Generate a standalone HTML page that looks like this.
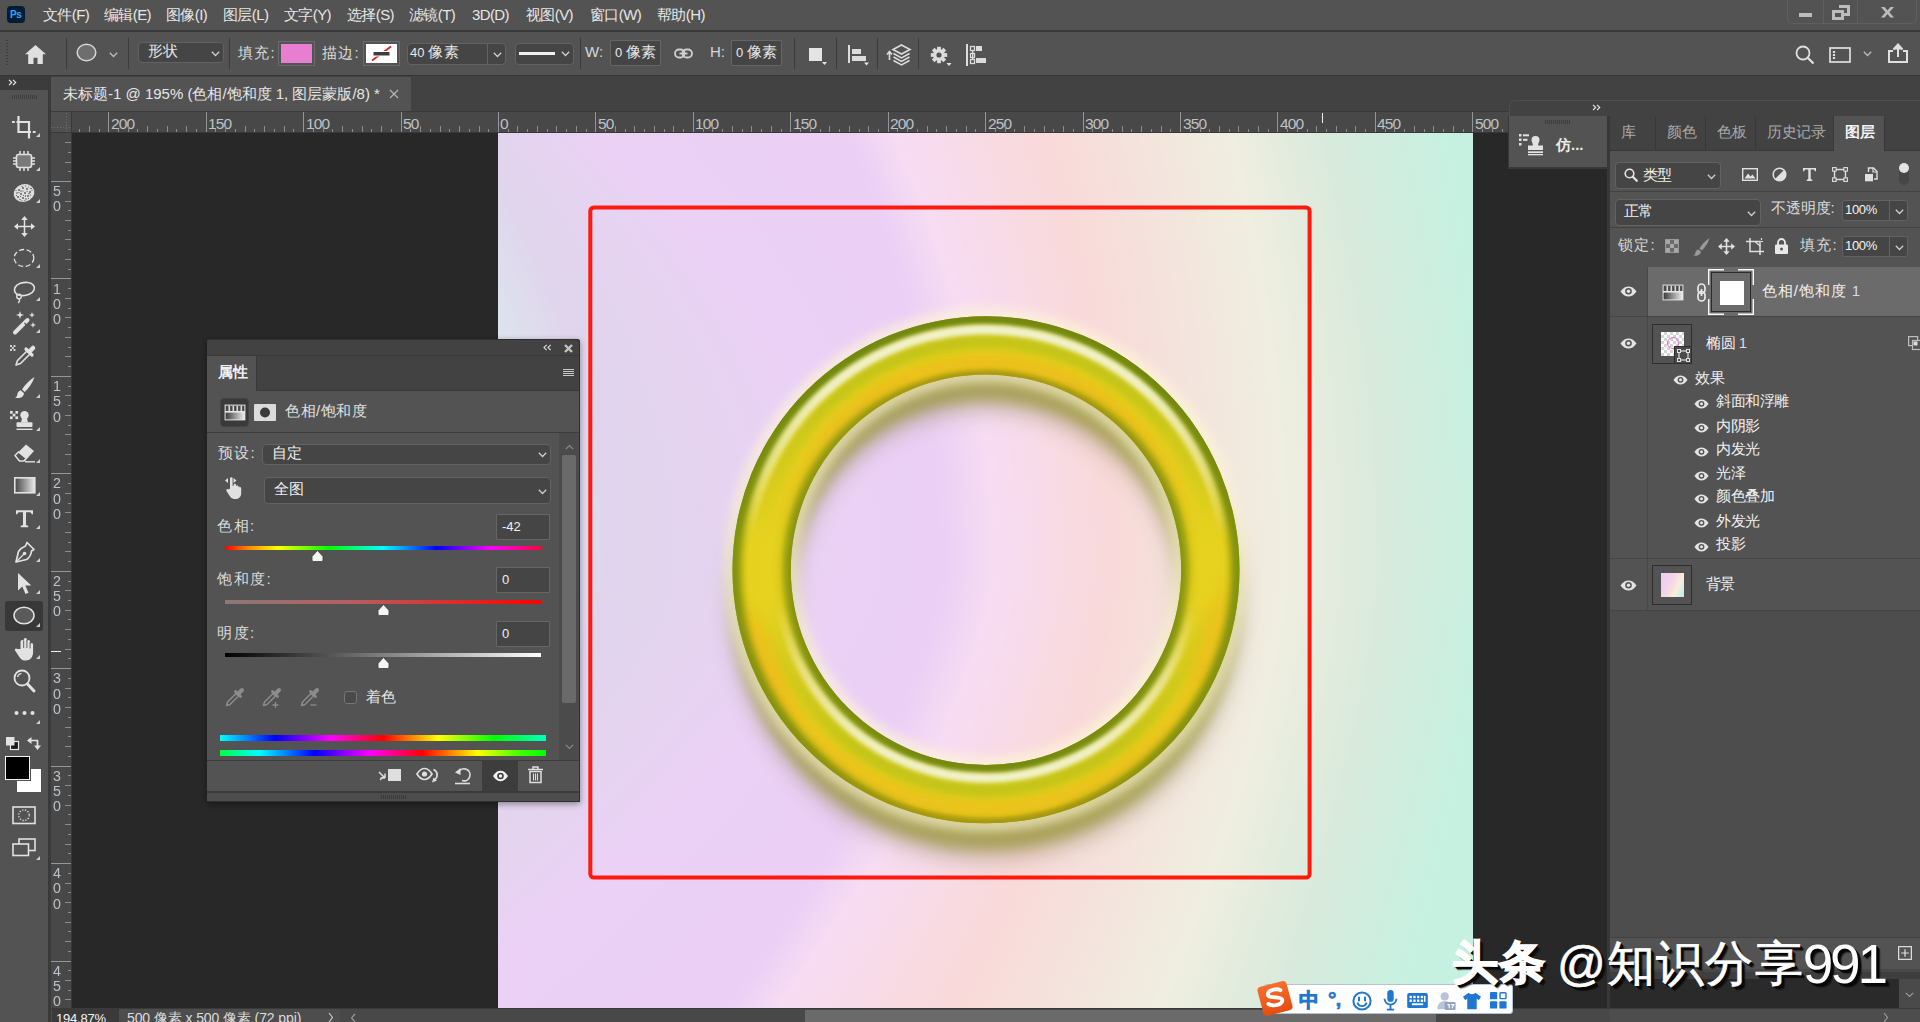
<!DOCTYPE html>
<html lang="zh">
<head>
<meta charset="utf-8">
<title>Photoshop</title>
<style>
*{box-sizing:border-box;margin:0;padding:0}
html,body{width:1920px;height:1022px;overflow:hidden;background:#282828}
body{position:relative;font-family:"Liberation Sans",sans-serif;font-size:14px;color:#dcdcdc;-webkit-font-smoothing:antialiased}
.a{position:absolute}
.tx{position:absolute;white-space:nowrap;line-height:20px;height:20px;color:#dcdcdc}
svg{position:absolute;overflow:visible}
.sep{position:absolute;width:1px;background:#3c3c3c}
.fld{position:absolute;background:#454545;border:1px solid #666;border-radius:3px}
.dd{position:absolute;background:#454545;border:1px solid #626262;border-radius:4px}
/* canvas bg slices */
#cv{position:absolute;left:498px;top:133px;width:975px;height:875px;overflow:hidden;background:#ecd2f4}
#cv i{position:absolute;left:0;width:975px;display:block}
/* rulers */
#hr{position:absolute;left:72px;top:112px;width:1437px;height:20px;background:#484848;overflow:hidden}
#vr{position:absolute;left:51px;top:133px;width:20px;height:875px;background:#484848;overflow:hidden}
#hr .t,#vr .t{position:absolute;background:#8c8c8c;display:block}
#hr .t.m,#vr .t.m{background:#969696}
#hr .t{width:1px}
#vr .t{height:1px}
#hr .n{position:absolute;top:2px;font-size:15.5px;line-height:20px;color:#bcc2c8;letter-spacing:-.9px}
#vr .n{position:absolute;left:1px;width:10px;text-align:center;font-size:15.5px;line-height:15px;color:#bcc2c8;transform:scaleX(.92)}
</style>
</head>
<body>
<!-- ===== big frame blocks ===== -->
<div class="a" id="menubar" style="left:0;top:0;width:1920px;height:30px;background:#535353"></div>
<div class="a" style="left:0;top:30px;width:1920px;height:2px;background:#3a3a3a"></div>
<div class="a" id="optbar" style="left:0;top:32px;width:1920px;height:43px;background:#535353"></div>
<div class="a" style="left:0;top:75px;width:1920px;height:1.500px;background:#363636"></div>
<!-- tab band -->
<div class="a" id="tabband" style="left:0;top:76px;width:1920px;height:36px;background:#424242"></div>
<!-- canvas surround -->
<div class="a" id="surround" style="left:72px;top:133px;width:1538px;height:875px;background:#282828"></div>
<!-- rulers -->
<div class="a" style="left:51px;top:112px;width:1458px;height:21px;background:#383838"></div>
<div class="a" style="left:51px;top:112px;width:21px;height:896px;background:#383838"></div>
<div class="a" style="left:51px;top:112px;width:20px;height:20px;background:#505050"></div>
<div class="a" style="left:66px;top:113px;width:1px;height:19px;background:repeating-linear-gradient(180deg,#6e6e6e 0 1px,transparent 1px 3px)"></div>
<div class="a" style="left:51px;top:127px;width:20px;height:1px;background:repeating-linear-gradient(90deg,#6e6e6e 0 1px,transparent 1px 3px)"></div>
<div id="hr">
<b class="t" style="left:7px;top:17px;height:3px"></b>
<b class="t" style="left:17px;top:14px;height:6px"></b>
<b class="t" style="left:27px;top:17px;height:3px"></b>
<b class="t m" style="left:36px;top:0;height:20px"></b>
<span class="n" style="left:39px">200</span>
<b class="t" style="left:46px;top:17px;height:3px"></b>
<b class="t" style="left:56px;top:14px;height:6px"></b>
<b class="t" style="left:65px;top:17px;height:3px"></b>
<b class="t" style="left:75px;top:14px;height:6px"></b>
<b class="t" style="left:85px;top:17px;height:3px"></b>
<b class="t" style="left:95px;top:14px;height:6px"></b>
<b class="t" style="left:104px;top:17px;height:3px"></b>
<b class="t" style="left:114px;top:14px;height:6px"></b>
<b class="t" style="left:124px;top:17px;height:3px"></b>
<b class="t m" style="left:134px;top:0;height:20px"></b>
<span class="n" style="left:136px">150</span>
<b class="t" style="left:143px;top:17px;height:3px"></b>
<b class="t" style="left:153px;top:14px;height:6px"></b>
<b class="t" style="left:163px;top:17px;height:3px"></b>
<b class="t" style="left:173px;top:14px;height:6px"></b>
<b class="t" style="left:182px;top:17px;height:3px"></b>
<b class="t" style="left:192px;top:14px;height:6px"></b>
<b class="t" style="left:202px;top:17px;height:3px"></b>
<b class="t" style="left:212px;top:14px;height:6px"></b>
<b class="t" style="left:221px;top:17px;height:3px"></b>
<b class="t m" style="left:231px;top:0;height:20px"></b>
<span class="n" style="left:234px">100</span>
<b class="t" style="left:241px;top:17px;height:3px"></b>
<b class="t" style="left:251px;top:14px;height:6px"></b>
<b class="t" style="left:260px;top:17px;height:3px"></b>
<b class="t" style="left:270px;top:14px;height:6px"></b>
<b class="t" style="left:280px;top:17px;height:3px"></b>
<b class="t" style="left:290px;top:14px;height:6px"></b>
<b class="t" style="left:299px;top:17px;height:3px"></b>
<b class="t" style="left:309px;top:14px;height:6px"></b>
<b class="t" style="left:319px;top:17px;height:3px"></b>
<b class="t m" style="left:329px;top:0;height:20px"></b>
<span class="n" style="left:331px">50</span>
<b class="t" style="left:338px;top:17px;height:3px"></b>
<b class="t" style="left:348px;top:14px;height:6px"></b>
<b class="t" style="left:358px;top:17px;height:3px"></b>
<b class="t" style="left:368px;top:14px;height:6px"></b>
<b class="t" style="left:377px;top:17px;height:3px"></b>
<b class="t" style="left:387px;top:14px;height:6px"></b>
<b class="t" style="left:397px;top:17px;height:3px"></b>
<b class="t" style="left:407px;top:14px;height:6px"></b>
<b class="t" style="left:416px;top:17px;height:3px"></b>
<b class="t m" style="left:426px;top:0;height:20px"></b>
<span class="n" style="left:428px">0</span>
<b class="t" style="left:436px;top:17px;height:3px"></b>
<b class="t" style="left:445px;top:14px;height:6px"></b>
<b class="t" style="left:455px;top:17px;height:3px"></b>
<b class="t" style="left:465px;top:14px;height:6px"></b>
<b class="t" style="left:475px;top:17px;height:3px"></b>
<b class="t" style="left:484px;top:14px;height:6px"></b>
<b class="t" style="left:494px;top:17px;height:3px"></b>
<b class="t" style="left:504px;top:14px;height:6px"></b>
<b class="t" style="left:514px;top:17px;height:3px"></b>
<b class="t m" style="left:523px;top:0;height:20px"></b>
<span class="n" style="left:526px">50</span>
<b class="t" style="left:533px;top:17px;height:3px"></b>
<b class="t" style="left:543px;top:14px;height:6px"></b>
<b class="t" style="left:553px;top:17px;height:3px"></b>
<b class="t" style="left:562px;top:14px;height:6px"></b>
<b class="t" style="left:572px;top:17px;height:3px"></b>
<b class="t" style="left:582px;top:14px;height:6px"></b>
<b class="t" style="left:592px;top:17px;height:3px"></b>
<b class="t" style="left:601px;top:14px;height:6px"></b>
<b class="t" style="left:611px;top:17px;height:3px"></b>
<b class="t m" style="left:621px;top:0;height:20px"></b>
<span class="n" style="left:623px">100</span>
<b class="t" style="left:631px;top:17px;height:3px"></b>
<b class="t" style="left:640px;top:14px;height:6px"></b>
<b class="t" style="left:650px;top:17px;height:3px"></b>
<b class="t" style="left:660px;top:14px;height:6px"></b>
<b class="t" style="left:670px;top:17px;height:3px"></b>
<b class="t" style="left:679px;top:14px;height:6px"></b>
<b class="t" style="left:689px;top:17px;height:3px"></b>
<b class="t" style="left:699px;top:14px;height:6px"></b>
<b class="t" style="left:709px;top:17px;height:3px"></b>
<b class="t m" style="left:718px;top:0;height:20px"></b>
<span class="n" style="left:721px">150</span>
<b class="t" style="left:728px;top:17px;height:3px"></b>
<b class="t" style="left:738px;top:14px;height:6px"></b>
<b class="t" style="left:748px;top:17px;height:3px"></b>
<b class="t" style="left:757px;top:14px;height:6px"></b>
<b class="t" style="left:767px;top:17px;height:3px"></b>
<b class="t" style="left:777px;top:14px;height:6px"></b>
<b class="t" style="left:787px;top:17px;height:3px"></b>
<b class="t" style="left:796px;top:14px;height:6px"></b>
<b class="t" style="left:806px;top:17px;height:3px"></b>
<b class="t m" style="left:816px;top:0;height:20px"></b>
<span class="n" style="left:818px">200</span>
<b class="t" style="left:825px;top:17px;height:3px"></b>
<b class="t" style="left:835px;top:14px;height:6px"></b>
<b class="t" style="left:845px;top:17px;height:3px"></b>
<b class="t" style="left:855px;top:14px;height:6px"></b>
<b class="t" style="left:864px;top:17px;height:3px"></b>
<b class="t" style="left:874px;top:14px;height:6px"></b>
<b class="t" style="left:884px;top:17px;height:3px"></b>
<b class="t" style="left:894px;top:14px;height:6px"></b>
<b class="t" style="left:903px;top:17px;height:3px"></b>
<b class="t m" style="left:913px;top:0;height:20px"></b>
<span class="n" style="left:916px">250</span>
<b class="t" style="left:923px;top:17px;height:3px"></b>
<b class="t" style="left:933px;top:14px;height:6px"></b>
<b class="t" style="left:942px;top:17px;height:3px"></b>
<b class="t" style="left:952px;top:14px;height:6px"></b>
<b class="t" style="left:962px;top:17px;height:3px"></b>
<b class="t" style="left:972px;top:14px;height:6px"></b>
<b class="t" style="left:981px;top:17px;height:3px"></b>
<b class="t" style="left:991px;top:14px;height:6px"></b>
<b class="t" style="left:1001px;top:17px;height:3px"></b>
<b class="t m" style="left:1011px;top:0;height:20px"></b>
<span class="n" style="left:1013px">300</span>
<b class="t" style="left:1020px;top:17px;height:3px"></b>
<b class="t" style="left:1030px;top:14px;height:6px"></b>
<b class="t" style="left:1040px;top:17px;height:3px"></b>
<b class="t" style="left:1050px;top:14px;height:6px"></b>
<b class="t" style="left:1059px;top:17px;height:3px"></b>
<b class="t" style="left:1069px;top:14px;height:6px"></b>
<b class="t" style="left:1079px;top:17px;height:3px"></b>
<b class="t" style="left:1089px;top:14px;height:6px"></b>
<b class="t" style="left:1098px;top:17px;height:3px"></b>
<b class="t m" style="left:1108px;top:0;height:20px"></b>
<span class="n" style="left:1111px">350</span>
<b class="t" style="left:1118px;top:17px;height:3px"></b>
<b class="t" style="left:1128px;top:14px;height:6px"></b>
<b class="t" style="left:1137px;top:17px;height:3px"></b>
<b class="t" style="left:1147px;top:14px;height:6px"></b>
<b class="t" style="left:1157px;top:17px;height:3px"></b>
<b class="t" style="left:1166px;top:14px;height:6px"></b>
<b class="t" style="left:1176px;top:17px;height:3px"></b>
<b class="t" style="left:1186px;top:14px;height:6px"></b>
<b class="t" style="left:1196px;top:17px;height:3px"></b>
<b class="t m" style="left:1205px;top:0;height:20px"></b>
<span class="n" style="left:1208px">400</span>
<b class="t" style="left:1215px;top:17px;height:3px"></b>
<b class="t" style="left:1225px;top:14px;height:6px"></b>
<b class="t" style="left:1235px;top:17px;height:3px"></b>
<b class="t" style="left:1244px;top:14px;height:6px"></b>
<b class="t" style="left:1254px;top:17px;height:3px"></b>
<b class="t" style="left:1264px;top:14px;height:6px"></b>
<b class="t" style="left:1274px;top:17px;height:3px"></b>
<b class="t" style="left:1283px;top:14px;height:6px"></b>
<b class="t" style="left:1293px;top:17px;height:3px"></b>
<b class="t m" style="left:1303px;top:0;height:20px"></b>
<span class="n" style="left:1305px">450</span>
<b class="t" style="left:1313px;top:17px;height:3px"></b>
<b class="t" style="left:1322px;top:14px;height:6px"></b>
<b class="t" style="left:1332px;top:17px;height:3px"></b>
<b class="t" style="left:1342px;top:14px;height:6px"></b>
<b class="t" style="left:1352px;top:17px;height:3px"></b>
<b class="t" style="left:1361px;top:14px;height:6px"></b>
<b class="t" style="left:1371px;top:17px;height:3px"></b>
<b class="t" style="left:1381px;top:14px;height:6px"></b>
<b class="t" style="left:1391px;top:17px;height:3px"></b>
<b class="t m" style="left:1400px;top:0;height:20px"></b>
<span class="n" style="left:1403px">500</span>
<b class="t" style="left:1410px;top:17px;height:3px"></b>
<b class="t" style="left:1420px;top:14px;height:6px"></b>
<b class="t" style="left:1430px;top:17px;height:3px"></b>
</div>
<div id="vr">
<b class="t" style="top:9px;left:14px;width:6px"></b>
<b class="t" style="top:19px;left:17px;width:3px"></b>
<b class="t" style="top:29px;left:14px;width:6px"></b>
<b class="t" style="top:38px;left:17px;width:3px"></b>
<b class="t m" style="top:48px;left:0;width:20px"></b>
<span class="n" style="top:50px">5</span>
<span class="n" style="top:65px">0</span>
<b class="t" style="top:58px;left:17px;width:3px"></b>
<b class="t" style="top:68px;left:14px;width:6px"></b>
<b class="t" style="top:77px;left:17px;width:3px"></b>
<b class="t" style="top:87px;left:14px;width:6px"></b>
<b class="t" style="top:97px;left:17px;width:3px"></b>
<b class="t" style="top:106px;left:14px;width:6px"></b>
<b class="t" style="top:116px;left:17px;width:3px"></b>
<b class="t" style="top:126px;left:14px;width:6px"></b>
<b class="t" style="top:136px;left:17px;width:3px"></b>
<b class="t m" style="top:145px;left:0;width:20px"></b>
<span class="n" style="top:148px">1</span>
<span class="n" style="top:163px">0</span>
<span class="n" style="top:178px">0</span>
<b class="t" style="top:155px;left:17px;width:3px"></b>
<b class="t" style="top:165px;left:14px;width:6px"></b>
<b class="t" style="top:175px;left:17px;width:3px"></b>
<b class="t" style="top:184px;left:14px;width:6px"></b>
<b class="t" style="top:194px;left:17px;width:3px"></b>
<b class="t" style="top:204px;left:14px;width:6px"></b>
<b class="t" style="top:214px;left:17px;width:3px"></b>
<b class="t" style="top:223px;left:14px;width:6px"></b>
<b class="t" style="top:233px;left:17px;width:3px"></b>
<b class="t m" style="top:243px;left:0;width:20px"></b>
<span class="n" style="top:245px">1</span>
<span class="n" style="top:260px">5</span>
<span class="n" style="top:276px">0</span>
<b class="t" style="top:253px;left:17px;width:3px"></b>
<b class="t" style="top:262px;left:14px;width:6px"></b>
<b class="t" style="top:272px;left:17px;width:3px"></b>
<b class="t" style="top:282px;left:14px;width:6px"></b>
<b class="t" style="top:292px;left:17px;width:3px"></b>
<b class="t" style="top:301px;left:14px;width:6px"></b>
<b class="t" style="top:311px;left:17px;width:3px"></b>
<b class="t" style="top:321px;left:14px;width:6px"></b>
<b class="t" style="top:331px;left:17px;width:3px"></b>
<b class="t m" style="top:340px;left:0;width:20px"></b>
<span class="n" style="top:342px">2</span>
<span class="n" style="top:358px">0</span>
<span class="n" style="top:373px">0</span>
<b class="t" style="top:350px;left:17px;width:3px"></b>
<b class="t" style="top:360px;left:14px;width:6px"></b>
<b class="t" style="top:370px;left:17px;width:3px"></b>
<b class="t" style="top:379px;left:14px;width:6px"></b>
<b class="t" style="top:389px;left:17px;width:3px"></b>
<b class="t" style="top:399px;left:14px;width:6px"></b>
<b class="t" style="top:409px;left:17px;width:3px"></b>
<b class="t" style="top:418px;left:14px;width:6px"></b>
<b class="t" style="top:428px;left:17px;width:3px"></b>
<b class="t m" style="top:438px;left:0;width:20px"></b>
<span class="n" style="top:440px">2</span>
<span class="n" style="top:455px">5</span>
<span class="n" style="top:470px">0</span>
<b class="t" style="top:448px;left:17px;width:3px"></b>
<b class="t" style="top:457px;left:14px;width:6px"></b>
<b class="t" style="top:467px;left:17px;width:3px"></b>
<b class="t" style="top:477px;left:14px;width:6px"></b>
<b class="t" style="top:486px;left:17px;width:3px"></b>
<b class="t" style="top:496px;left:14px;width:6px"></b>
<b class="t" style="top:506px;left:17px;width:3px"></b>
<b class="t" style="top:516px;left:14px;width:6px"></b>
<b class="t" style="top:525px;left:17px;width:3px"></b>
<b class="t m" style="top:535px;left:0;width:20px"></b>
<span class="n" style="top:537px">3</span>
<span class="n" style="top:553px">0</span>
<span class="n" style="top:568px">0</span>
<b class="t" style="top:545px;left:17px;width:3px"></b>
<b class="t" style="top:555px;left:14px;width:6px"></b>
<b class="t" style="top:564px;left:17px;width:3px"></b>
<b class="t" style="top:574px;left:14px;width:6px"></b>
<b class="t" style="top:584px;left:17px;width:3px"></b>
<b class="t" style="top:594px;left:14px;width:6px"></b>
<b class="t" style="top:603px;left:17px;width:3px"></b>
<b class="t" style="top:613px;left:14px;width:6px"></b>
<b class="t" style="top:623px;left:17px;width:3px"></b>
<b class="t m" style="top:633px;left:0;width:20px"></b>
<span class="n" style="top:635px">3</span>
<span class="n" style="top:650px">5</span>
<span class="n" style="top:665px">0</span>
<b class="t" style="top:642px;left:17px;width:3px"></b>
<b class="t" style="top:652px;left:14px;width:6px"></b>
<b class="t" style="top:662px;left:17px;width:3px"></b>
<b class="t" style="top:672px;left:14px;width:6px"></b>
<b class="t" style="top:681px;left:17px;width:3px"></b>
<b class="t" style="top:691px;left:14px;width:6px"></b>
<b class="t" style="top:701px;left:17px;width:3px"></b>
<b class="t" style="top:711px;left:14px;width:6px"></b>
<b class="t" style="top:720px;left:17px;width:3px"></b>
<b class="t m" style="top:730px;left:0;width:20px"></b>
<span class="n" style="top:732px">4</span>
<span class="n" style="top:747px">0</span>
<span class="n" style="top:763px">0</span>
<b class="t" style="top:740px;left:17px;width:3px"></b>
<b class="t" style="top:750px;left:14px;width:6px"></b>
<b class="t" style="top:759px;left:17px;width:3px"></b>
<b class="t" style="top:769px;left:14px;width:6px"></b>
<b class="t" style="top:779px;left:17px;width:3px"></b>
<b class="t" style="top:789px;left:14px;width:6px"></b>
<b class="t" style="top:798px;left:17px;width:3px"></b>
<b class="t" style="top:808px;left:14px;width:6px"></b>
<b class="t" style="top:818px;left:17px;width:3px"></b>
<b class="t m" style="top:828px;left:0;width:20px"></b>
<span class="n" style="top:830px">4</span>
<span class="n" style="top:845px">5</span>
<span class="n" style="top:860px">0</span>
<b class="t" style="top:837px;left:17px;width:3px"></b>
<b class="t" style="top:847px;left:14px;width:6px"></b>
<b class="t" style="top:857px;left:17px;width:3px"></b>
<b class="t" style="top:866px;left:14px;width:6px"></b>
</div>
<!-- canvas image -->
<div id="cv">
<i style="top:0px;height:3px;background:linear-gradient(90deg,#dbe8ee -117.0px,#e0d5ec -27.0px,#ebd1f5 93.8px,#ebcff5 347.6px,#f7dcf3 395.7px,#f9d9d9 542.5px,#efeee0 734.4px,#d8eadc 827.4px,#c6f1e1 952.3px)"></i>
<i style="top:3px;height:3px;background:linear-gradient(90deg,#dbe8ee -115.1px,#e0d5ec -25.1px,#ebd1f5 97.3px,#ebcff5 348.9px,#f7dcf3 397.1px,#f9d9d9 543.4px,#efeee0 735.1px,#d8eadc 828.2px,#c6f1e1 952.8px)"></i>
<i style="top:6px;height:3px;background:linear-gradient(90deg,#dbe8ee -113.2px,#e0d5ec -23.2px,#ebd1f5 100.8px,#ebcff5 350.2px,#f7dcf3 398.5px,#f9d9d9 544.3px,#efeee0 735.8px,#d8eadc 829.0px,#c6f1e1 953.4px)"></i>
<i style="top:9px;height:3px;background:linear-gradient(90deg,#dbe8ee -111.4px,#e0d5ec -21.4px,#ebd1f5 104.3px,#ebcff5 351.5px,#f7dcf3 399.9px,#f9d9d9 545.2px,#efeee0 736.5px,#d8eadc 829.8px,#c6f1e1 953.9px)"></i>
<i style="top:12px;height:3px;background:linear-gradient(90deg,#dbe8ee -109.5px,#e0d5ec -19.5px,#ebd1f5 107.8px,#ebcff5 352.8px,#f7dcf3 401.3px,#f9d9d9 546.1px,#efeee0 737.2px,#d8eadc 830.6px,#c6f1e1 954.4px)"></i>
<i style="top:15px;height:3px;background:linear-gradient(90deg,#dbe8ee -107.7px,#e0d5ec -17.7px,#ebd1f5 111.2px,#ebcff5 354.0px,#f7dcf3 402.6px,#f9d9d9 547.0px,#efeee0 737.9px,#d8eadc 831.4px,#c6f1e1 955.0px)"></i>
<i style="top:18px;height:3px;background:linear-gradient(90deg,#dbe8ee -105.8px,#e0d5ec -15.8px,#ebd1f5 114.6px,#ebcff5 355.3px,#f7dcf3 404.0px,#f9d9d9 547.9px,#efeee0 738.6px,#d8eadc 832.2px,#c6f1e1 955.5px)"></i>
<i style="top:21px;height:3px;background:linear-gradient(90deg,#dbe8ee -104.0px,#e0d5ec -14.0px,#ebd1f5 118.0px,#ebcff5 356.5px,#f7dcf3 405.3px,#f9d9d9 548.8px,#efeee0 739.3px,#d8eadc 833.0px,#c6f1e1 956.0px)"></i>
<i style="top:24px;height:3px;background:linear-gradient(90deg,#dbe8ee -102.2px,#e0d5ec -12.2px,#ebd1f5 121.4px,#ebcff5 357.7px,#f7dcf3 406.6px,#f9d9d9 549.7px,#efeee0 740.0px,#d8eadc 833.8px,#c6f1e1 956.5px)"></i>
<i style="top:27px;height:3px;background:linear-gradient(90deg,#dbe8ee -100.4px,#e0d5ec -10.4px,#ebd1f5 124.7px,#ebcff5 359.0px,#f7dcf3 408.0px,#f9d9d9 550.6px,#efeee0 740.7px,#d8eadc 834.6px,#c6f1e1 957.0px)"></i>
<i style="top:30px;height:3px;background:linear-gradient(90deg,#dbe8ee -98.6px,#e0d5ec -8.6px,#ebd1f5 128.1px,#ebcff5 360.2px,#f7dcf3 409.3px,#f9d9d9 551.4px,#efeee0 741.3px,#d8eadc 835.3px,#c6f1e1 957.5px)"></i>
<i style="top:33px;height:3px;background:linear-gradient(90deg,#dbe8ee -96.8px,#e0d5ec -6.8px,#ebd1f5 131.3px,#ebcff5 361.4px,#f7dcf3 410.6px,#f9d9d9 552.3px,#efeee0 742.0px,#d8eadc 836.1px,#c6f1e1 958.1px)"></i>
<i style="top:36px;height:3px;background:linear-gradient(90deg,#dbe8ee -95.1px,#e0d5ec -5.1px,#ebd1f5 134.6px,#ebcff5 362.6px,#f7dcf3 411.9px,#f9d9d9 553.1px,#efeee0 742.7px,#d8eadc 836.8px,#c6f1e1 958.6px)"></i>
<i style="top:39px;height:3px;background:linear-gradient(90deg,#dbe8ee -93.3px,#e0d5ec -3.3px,#ebd1f5 137.9px,#ebcff5 363.8px,#f7dcf3 413.2px,#f9d9d9 554.0px,#efeee0 743.3px,#d8eadc 837.6px,#c6f1e1 959.1px)"></i>
<i style="top:42px;height:3px;background:linear-gradient(90deg,#dbe8ee -91.6px,#e0d5ec -1.6px,#ebd1f5 141.1px,#ebcff5 364.9px,#f7dcf3 414.4px,#f9d9d9 554.8px,#efeee0 744.0px,#d8eadc 838.3px,#c6f1e1 959.6px)"></i>
<i style="top:45px;height:3px;background:linear-gradient(90deg,#dbe8ee -89.9px,#e0d5ec 0.1px,#ebd1f5 144.3px,#ebcff5 366.1px,#f7dcf3 415.7px,#f9d9d9 555.7px,#efeee0 744.7px,#d8eadc 839.1px,#c6f1e1 960.0px)"></i>
<i style="top:48px;height:3px;background:linear-gradient(90deg,#dbe8ee -88.1px,#e0d5ec 1.9px,#ebd1f5 147.4px,#ebcff5 367.3px,#f7dcf3 417.0px,#f9d9d9 556.5px,#efeee0 745.3px,#d8eadc 839.8px,#c6f1e1 960.5px)"></i>
<i style="top:51px;height:3px;background:linear-gradient(90deg,#dbe8ee -86.4px,#e0d5ec 3.6px,#ebd1f5 150.6px,#ebcff5 368.4px,#f7dcf3 418.2px,#f9d9d9 557.3px,#efeee0 745.9px,#d8eadc 840.5px,#c6f1e1 961.0px)"></i>
<i style="top:54px;height:3px;background:linear-gradient(90deg,#dbe8ee -84.8px,#e0d5ec 5.2px,#ebd1f5 153.7px,#ebcff5 369.6px,#f7dcf3 419.4px,#f9d9d9 558.1px,#efeee0 746.6px,#d8eadc 841.2px,#c6f1e1 961.5px)"></i>
<i style="top:57px;height:3px;background:linear-gradient(90deg,#dbe8ee -83.1px,#e0d5ec 6.9px,#ebd1f5 156.8px,#ebcff5 370.7px,#f7dcf3 420.7px,#f9d9d9 559.0px,#efeee0 747.2px,#d8eadc 842.0px,#c6f1e1 962.0px)"></i>
<i style="top:60px;height:3px;background:linear-gradient(90deg,#dbe8ee -81.4px,#e0d5ec 8.6px,#ebd1f5 159.9px,#ebcff5 371.8px,#f7dcf3 421.9px,#f9d9d9 559.8px,#efeee0 747.8px,#d8eadc 842.7px,#c6f1e1 962.4px)"></i>
<i style="top:63px;height:3px;background:linear-gradient(90deg,#dbe8ee -79.8px,#e0d5ec 10.2px,#ebd1f5 162.9px,#ebcff5 372.9px,#f7dcf3 423.1px,#f9d9d9 560.6px,#efeee0 748.5px,#d8eadc 843.4px,#c6f1e1 962.9px)"></i>
<i style="top:66px;height:3px;background:linear-gradient(90deg,#dbe8ee -78.2px,#e0d5ec 11.8px,#ebd1f5 166.0px,#ebcff5 374.0px,#f7dcf3 424.3px,#f9d9d9 561.3px,#efeee0 749.1px,#d8eadc 844.1px,#c6f1e1 963.4px)"></i>
<i style="top:69px;height:3px;background:linear-gradient(90deg,#dbe8ee -76.6px,#e0d5ec 13.4px,#ebd1f5 169.0px,#ebcff5 375.1px,#f7dcf3 425.5px,#f9d9d9 562.1px,#efeee0 749.7px,#d8eadc 844.8px,#c6f1e1 963.8px)"></i>
<i style="top:72px;height:3px;background:linear-gradient(90deg,#dbe8ee -75.0px,#e0d5ec 15.0px,#ebd1f5 171.9px,#ebcff5 376.2px,#f7dcf3 426.7px,#f9d9d9 562.9px,#efeee0 750.3px,#d8eadc 845.4px,#c6f1e1 964.3px)"></i>
<i style="top:75px;height:3px;background:linear-gradient(90deg,#dbe8ee -73.4px,#e0d5ec 16.6px,#ebd1f5 174.9px,#ebcff5 377.3px,#f7dcf3 427.8px,#f9d9d9 563.7px,#efeee0 750.9px,#d8eadc 846.1px,#c6f1e1 964.8px)"></i>
<i style="top:78px;height:3px;background:linear-gradient(90deg,#dbe8ee -71.8px,#e0d5ec 18.2px,#ebd1f5 177.8px,#ebcff5 378.4px,#f7dcf3 429.0px,#f9d9d9 564.4px,#efeee0 751.5px,#d8eadc 846.8px,#c6f1e1 965.2px)"></i>
<i style="top:81px;height:3px;background:linear-gradient(90deg,#dbe8ee -70.2px,#e0d5ec 19.8px,#ebd1f5 180.7px,#ebcff5 379.4px,#f7dcf3 430.1px,#f9d9d9 565.2px,#efeee0 752.1px,#d8eadc 847.5px,#c6f1e1 965.6px)"></i>
<i style="top:84px;height:3px;background:linear-gradient(90deg,#dbe8ee -68.7px,#e0d5ec 21.3px,#ebd1f5 183.6px,#ebcff5 380.5px,#f7dcf3 431.3px,#f9d9d9 566.0px,#efeee0 752.7px,#d8eadc 848.1px,#c6f1e1 966.1px)"></i>
<i style="top:87px;height:3px;background:linear-gradient(90deg,#dbe8ee -67.1px,#e0d5ec 22.9px,#ebd1f5 186.5px,#ebcff5 381.5px,#f7dcf3 432.4px,#f9d9d9 566.7px,#efeee0 753.3px,#d8eadc 848.8px,#c6f1e1 966.5px)"></i>
<i style="top:90px;height:3px;background:linear-gradient(90deg,#dbe8ee -65.6px,#e0d5ec 24.4px,#ebd1f5 189.3px,#ebcff5 382.5px,#f7dcf3 433.5px,#f9d9d9 567.4px,#efeee0 753.8px,#d8eadc 849.5px,#c6f1e1 967.0px)"></i>
<i style="top:93px;height:3px;background:linear-gradient(90deg,#dbe8ee -64.1px,#e0d5ec 25.9px,#ebd1f5 192.1px,#ebcff5 383.6px,#f7dcf3 434.7px,#f9d9d9 568.2px,#efeee0 754.4px,#d8eadc 850.1px,#c6f1e1 967.4px)"></i>
<i style="top:96px;height:3px;background:linear-gradient(90deg,#dbe8ee -62.6px,#e0d5ec 27.4px,#ebd1f5 194.9px,#ebcff5 384.6px,#f7dcf3 435.8px,#f9d9d9 568.9px,#efeee0 755.0px,#d8eadc 850.7px,#c6f1e1 967.8px)"></i>
<i style="top:99px;height:3px;background:linear-gradient(90deg,#dbe8ee -61.1px,#e0d5ec 28.9px,#ebd1f5 197.6px,#ebcff5 385.6px,#f7dcf3 436.8px,#f9d9d9 569.6px,#efeee0 755.5px,#d8eadc 851.4px,#c6f1e1 968.3px)"></i>
<i style="top:102px;height:3px;background:linear-gradient(90deg,#dbe8ee -59.7px,#e0d5ec 30.3px,#ebd1f5 200.4px,#ebcff5 386.6px,#f7dcf3 437.9px,#f9d9d9 570.3px,#efeee0 756.1px,#d8eadc 852.0px,#c6f1e1 968.7px)"></i>
<i style="top:105px;height:3px;background:linear-gradient(90deg,#dbe8ee -58.2px,#e0d5ec 31.8px,#ebd1f5 203.1px,#ebcff5 387.6px,#f7dcf3 439.0px,#f9d9d9 571.0px,#efeee0 756.6px,#d8eadc 852.6px,#c6f1e1 969.1px)"></i>
<i style="top:108px;height:3px;background:linear-gradient(90deg,#dbe8ee -56.8px,#e0d5ec 33.2px,#ebd1f5 205.8px,#ebcff5 388.6px,#f7dcf3 440.1px,#f9d9d9 571.8px,#efeee0 757.2px,#d8eadc 853.2px,#c6f1e1 969.5px)"></i>
<i style="top:111px;height:3px;background:linear-gradient(90deg,#dbe8ee -55.3px,#e0d5ec 34.7px,#ebd1f5 208.4px,#ebcff5 389.5px,#f7dcf3 441.1px,#f9d9d9 572.4px,#efeee0 757.7px,#d8eadc 853.9px,#c6f1e1 969.9px)"></i>
<i style="top:114px;height:3px;background:linear-gradient(90deg,#dbe8ee -53.9px,#e0d5ec 36.1px,#ebd1f5 211.0px,#ebcff5 390.5px,#f7dcf3 442.2px,#f9d9d9 573.1px,#efeee0 758.3px,#d8eadc 854.5px,#c6f1e1 970.3px)"></i>
<i style="top:117px;height:3px;background:linear-gradient(90deg,#dbe8ee -52.5px,#e0d5ec 37.5px,#ebd1f5 213.7px,#ebcff5 391.5px,#f7dcf3 443.2px,#f9d9d9 573.8px,#efeee0 758.8px,#d8eadc 855.1px,#c6f1e1 970.7px)"></i>
<i style="top:120px;height:3px;background:linear-gradient(90deg,#dbe8ee -51.1px,#e0d5ec 38.9px,#ebd1f5 216.2px,#ebcff5 392.4px,#f7dcf3 444.2px,#f9d9d9 574.5px,#efeee0 759.3px,#d8eadc 855.7px,#c6f1e1 971.1px)"></i>
<i style="top:123px;height:3px;background:linear-gradient(90deg,#dbe8ee -49.7px,#e0d5ec 40.3px,#ebd1f5 218.8px,#ebcff5 393.3px,#f7dcf3 445.2px,#f9d9d9 575.2px,#efeee0 759.8px,#d8eadc 856.3px,#c6f1e1 971.5px)"></i>
<i style="top:126px;height:3px;background:linear-gradient(90deg,#dbe8ee -48.4px,#e0d5ec 41.6px,#ebd1f5 221.3px,#ebcff5 394.3px,#f7dcf3 446.2px,#f9d9d9 575.8px,#efeee0 760.4px,#d8eadc 856.8px,#c6f1e1 971.9px)"></i>
<i style="top:129px;height:3px;background:linear-gradient(90deg,#dbe8ee -47.0px,#e0d5ec 43.0px,#ebd1f5 223.9px,#ebcff5 395.2px,#f7dcf3 447.2px,#f9d9d9 576.5px,#efeee0 760.9px,#d8eadc 857.4px,#c6f1e1 972.3px)"></i>
<i style="top:132px;height:3px;background:linear-gradient(90deg,#dbe8ee -45.7px,#e0d5ec 44.3px,#ebd1f5 226.3px,#ebcff5 396.1px,#f7dcf3 448.2px,#f9d9d9 577.1px,#efeee0 761.4px,#d8eadc 858.0px,#c6f1e1 972.7px)"></i>
<i style="top:135px;height:3px;background:linear-gradient(90deg,#dbe8ee -44.3px,#e0d5ec 45.7px,#ebd1f5 228.8px,#ebcff5 397.0px,#f7dcf3 449.2px,#f9d9d9 577.8px,#efeee0 761.9px,#d8eadc 858.6px,#c6f1e1 973.0px)"></i>
<i style="top:138px;height:3px;background:linear-gradient(90deg,#dbe8ee -43.0px,#e0d5ec 47.0px,#ebd1f5 231.2px,#ebcff5 397.9px,#f7dcf3 450.2px,#f9d9d9 578.4px,#efeee0 762.4px,#d8eadc 859.1px,#c6f1e1 973.4px)"></i>
<i style="top:141px;height:3px;background:linear-gradient(90deg,#dbe8ee -41.7px,#e0d5ec 48.3px,#ebd1f5 233.7px,#ebcff5 398.8px,#f7dcf3 451.1px,#f9d9d9 579.0px,#efeee0 762.9px,#d8eadc 859.7px,#c6f1e1 973.8px)"></i>
<i style="top:144px;height:3px;background:linear-gradient(90deg,#dbe8ee -40.4px,#e0d5ec 49.6px,#ebd1f5 236.0px,#ebcff5 399.6px,#f7dcf3 452.1px,#f9d9d9 579.7px,#efeee0 763.4px,#d8eadc 860.2px,#c6f1e1 974.2px)"></i>
<i style="top:147px;height:3px;background:linear-gradient(90deg,#dbe8ee -39.2px,#e0d5ec 50.8px,#ebd1f5 238.4px,#ebcff5 400.5px,#f7dcf3 453.0px,#f9d9d9 580.3px,#efeee0 763.8px,#d8eadc 860.8px,#c6f1e1 974.5px)"></i>
<i style="top:150px;height:3px;background:linear-gradient(90deg,#dbe8ee -37.9px,#e0d5ec 52.1px,#ebd1f5 240.8px,#ebcff5 401.4px,#f7dcf3 453.9px,#f9d9d9 580.9px,#efeee0 764.3px,#d8eadc 861.3px,#c6f1e1 974.9px)"></i>
<i style="top:153px;height:3px;background:linear-gradient(90deg,#dbe8ee -36.7px,#e0d5ec 53.3px,#ebd1f5 243.1px,#ebcff5 402.2px,#f7dcf3 454.8px,#f9d9d9 581.5px,#efeee0 764.8px,#d8eadc 861.9px,#c6f1e1 975.2px)"></i>
<i style="top:156px;height:3px;background:linear-gradient(90deg,#dbe8ee -35.4px,#e0d5ec 54.6px,#ebd1f5 245.4px,#ebcff5 403.0px,#f7dcf3 455.8px,#f9d9d9 582.1px,#efeee0 765.3px,#d8eadc 862.4px,#c6f1e1 975.6px)"></i>
<i style="top:159px;height:3px;background:linear-gradient(90deg,#dbe8ee -34.2px,#e0d5ec 55.8px,#ebd1f5 247.6px,#ebcff5 403.9px,#f7dcf3 456.7px,#f9d9d9 582.7px,#efeee0 765.7px,#d8eadc 862.9px,#c6f1e1 975.9px)"></i>
<i style="top:162px;height:3px;background:linear-gradient(90deg,#dbe8ee -33.0px,#e0d5ec 57.0px,#ebd1f5 249.9px,#ebcff5 404.7px,#f7dcf3 457.5px,#f9d9d9 583.3px,#efeee0 766.2px,#d8eadc 863.4px,#c6f1e1 976.3px)"></i>
<i style="top:165px;height:3px;background:linear-gradient(90deg,#dbe8ee -31.8px,#e0d5ec 58.2px,#ebd1f5 252.1px,#ebcff5 405.5px,#f7dcf3 458.4px,#f9d9d9 583.9px,#efeee0 766.6px,#d8eadc 863.9px,#c6f1e1 976.6px)"></i>
<i style="top:168px;height:3px;background:linear-gradient(90deg,#dbe8ee -30.6px,#e0d5ec 59.4px,#ebd1f5 254.3px,#ebcff5 406.3px,#f7dcf3 459.3px,#f9d9d9 584.4px,#efeee0 767.1px,#d8eadc 864.5px,#c6f1e1 977.0px)"></i>
<i style="top:171px;height:3px;background:linear-gradient(90deg,#dbe8ee -29.4px,#e0d5ec 60.6px,#ebd1f5 256.5px,#ebcff5 407.1px,#f7dcf3 460.2px,#f9d9d9 585.0px,#efeee0 767.5px,#d8eadc 865.0px,#c6f1e1 977.3px)"></i>
<i style="top:174px;height:3px;background:linear-gradient(90deg,#dbe8ee -28.3px,#e0d5ec 61.7px,#ebd1f5 258.6px,#ebcff5 407.9px,#f7dcf3 461.0px,#f9d9d9 585.6px,#efeee0 768.0px,#d8eadc 865.4px,#c6f1e1 977.6px)"></i>
<i style="top:177px;height:3px;background:linear-gradient(90deg,#dbe8ee -27.1px,#e0d5ec 62.9px,#ebd1f5 260.7px,#ebcff5 408.7px,#f7dcf3 461.8px,#f9d9d9 586.1px,#efeee0 768.4px,#d8eadc 865.9px,#c6f1e1 978.0px)"></i>
<i style="top:180px;height:3px;background:linear-gradient(90deg,#dbe8ee -26.0px,#e0d5ec 64.0px,#ebd1f5 262.8px,#ebcff5 409.4px,#f7dcf3 462.7px,#f9d9d9 586.7px,#efeee0 768.8px,#d8eadc 866.4px,#c6f1e1 978.3px)"></i>
<i style="top:183px;height:3px;background:linear-gradient(90deg,#dbe8ee -24.9px,#e0d5ec 65.1px,#ebd1f5 264.9px,#ebcff5 410.2px,#f7dcf3 463.5px,#f9d9d9 587.2px,#efeee0 769.2px,#d8eadc 866.9px,#c6f1e1 978.6px)"></i>
<i style="top:186px;height:3px;background:linear-gradient(90deg,#dbe8ee -23.8px,#e0d5ec 66.2px,#ebd1f5 267.0px,#ebcff5 410.9px,#f7dcf3 464.3px,#f9d9d9 587.8px,#efeee0 769.7px,#d8eadc 867.4px,#c6f1e1 978.9px)"></i>
<i style="top:189px;height:3px;background:linear-gradient(90deg,#dbe8ee -22.7px,#e0d5ec 67.3px,#ebd1f5 269.0px,#ebcff5 411.7px,#f7dcf3 465.1px,#f9d9d9 588.3px,#efeee0 770.1px,#d8eadc 867.8px,#c6f1e1 979.2px)"></i>
<i style="top:192px;height:3px;background:linear-gradient(90deg,#dbe8ee -21.6px,#e0d5ec 68.4px,#ebd1f5 271.0px,#ebcff5 412.4px,#f7dcf3 465.9px,#f9d9d9 588.8px,#efeee0 770.5px,#d8eadc 868.3px,#c6f1e1 979.5px)"></i>
<i style="top:195px;height:3px;background:linear-gradient(90deg,#dbe8ee -20.6px,#e0d5ec 69.4px,#ebd1f5 273.0px,#ebcff5 413.1px,#f7dcf3 466.7px,#f9d9d9 589.3px,#efeee0 770.9px,#d8eadc 868.8px,#c6f1e1 979.8px)"></i>
<i style="top:198px;height:3px;background:linear-gradient(90deg,#dbe8ee -19.5px,#e0d5ec 70.5px,#ebd1f5 274.9px,#ebcff5 413.8px,#f7dcf3 467.5px,#f9d9d9 589.8px,#efeee0 771.3px,#d8eadc 869.2px,#c6f1e1 980.1px)"></i>
<i style="top:201px;height:3px;background:linear-gradient(90deg,#dbe8ee -18.5px,#e0d5ec 71.5px,#ebd1f5 276.8px,#ebcff5 414.5px,#f7dcf3 468.2px,#f9d9d9 590.3px,#efeee0 771.7px,#d8eadc 869.7px,#c6f1e1 980.4px)"></i>
<i style="top:204px;height:3px;background:linear-gradient(90deg,#dbe8ee -17.4px,#e0d5ec 72.6px,#ebd1f5 278.7px,#ebcff5 415.2px,#f7dcf3 469.0px,#f9d9d9 590.8px,#efeee0 772.1px,#d8eadc 870.1px,#c6f1e1 980.7px)"></i>
<i style="top:207px;height:3px;background:linear-gradient(90deg,#dbe8ee -16.4px,#e0d5ec 73.6px,#ebd1f5 280.6px,#ebcff5 415.9px,#f7dcf3 469.7px,#f9d9d9 591.3px,#efeee0 772.4px,#d8eadc 870.5px,#c6f1e1 981.0px)"></i>
<i style="top:210px;height:3px;background:linear-gradient(90deg,#dbe8ee -15.4px,#e0d5ec 74.6px,#ebd1f5 282.5px,#ebcff5 416.6px,#f7dcf3 470.5px,#f9d9d9 591.8px,#efeee0 772.8px,#d8eadc 871.0px,#c6f1e1 981.3px)"></i>
<i style="top:213px;height:3px;background:linear-gradient(90deg,#dbe8ee -14.5px,#e0d5ec 75.5px,#ebd1f5 284.3px,#ebcff5 417.3px,#f7dcf3 471.2px,#f9d9d9 592.3px,#efeee0 773.2px,#d8eadc 871.4px,#c6f1e1 981.6px)"></i>
<i style="top:216px;height:3px;background:linear-gradient(90deg,#dbe8ee -13.5px,#e0d5ec 76.5px,#ebd1f5 286.1px,#ebcff5 417.9px,#f7dcf3 471.9px,#f9d9d9 592.8px,#efeee0 773.6px,#d8eadc 871.8px,#c6f1e1 981.9px)"></i>
<i style="top:219px;height:3px;background:linear-gradient(90deg,#dbe8ee -12.5px,#e0d5ec 77.5px,#ebd1f5 287.9px,#ebcff5 418.6px,#f7dcf3 472.6px,#f9d9d9 593.2px,#efeee0 773.9px,#d8eadc 872.2px,#c6f1e1 982.1px)"></i>
<i style="top:222px;height:3px;background:linear-gradient(90deg,#dbe8ee -11.6px,#e0d5ec 78.4px,#ebd1f5 289.6px,#ebcff5 419.2px,#f7dcf3 473.3px,#f9d9d9 593.7px,#efeee0 774.3px,#d8eadc 872.6px,#c6f1e1 982.4px)"></i>
<i style="top:225px;height:3px;background:linear-gradient(90deg,#dbe8ee -10.6px,#e0d5ec 79.4px,#ebd1f5 291.4px,#ebcff5 419.8px,#f7dcf3 474.0px,#f9d9d9 594.1px,#efeee0 774.6px,#d8eadc 873.0px,#c6f1e1 982.7px)"></i>
<i style="top:228px;height:3px;background:linear-gradient(90deg,#dbe8ee -9.7px,#e0d5ec 80.3px,#ebd1f5 293.1px,#ebcff5 420.5px,#f7dcf3 474.7px,#f9d9d9 594.6px,#efeee0 775.0px,#d8eadc 873.4px,#c6f1e1 982.9px)"></i>
<i style="top:231px;height:3px;background:linear-gradient(90deg,#dbe8ee -8.8px,#e0d5ec 81.2px,#ebd1f5 294.8px,#ebcff5 421.1px,#f7dcf3 475.3px,#f9d9d9 595.0px,#efeee0 775.3px,#d8eadc 873.8px,#c6f1e1 983.2px)"></i>
<i style="top:234px;height:3px;background:linear-gradient(90deg,#dbe8ee -7.9px,#e0d5ec 82.1px,#ebd1f5 296.4px,#ebcff5 421.7px,#f7dcf3 476.0px,#f9d9d9 595.5px,#efeee0 775.7px,#d8eadc 874.2px,#c6f1e1 983.5px)"></i>
<i style="top:237px;height:3px;background:linear-gradient(90deg,#dbe8ee -7.0px,#e0d5ec 83.0px,#ebd1f5 298.1px,#ebcff5 422.3px,#f7dcf3 476.6px,#f9d9d9 595.9px,#efeee0 776.0px,#d8eadc 874.6px,#c6f1e1 983.7px)"></i>
<i style="top:240px;height:3px;background:linear-gradient(90deg,#dbe8ee -6.2px,#e0d5ec 83.8px,#ebd1f5 299.7px,#ebcff5 422.9px,#f7dcf3 477.3px,#f9d9d9 596.3px,#efeee0 776.3px,#d8eadc 874.9px,#c6f1e1 983.9px)"></i>
<i style="top:243px;height:3px;background:linear-gradient(90deg,#dbe8ee -5.3px,#e0d5ec 84.7px,#ebd1f5 301.3px,#ebcff5 423.5px,#f7dcf3 477.9px,#f9d9d9 596.7px,#efeee0 776.7px,#d8eadc 875.3px,#c6f1e1 984.2px)"></i>
<i style="top:246px;height:3px;background:linear-gradient(90deg,#dbe8ee -4.5px,#e0d5ec 85.5px,#ebd1f5 302.8px,#ebcff5 424.0px,#f7dcf3 478.5px,#f9d9d9 597.1px,#efeee0 777.0px,#d8eadc 875.7px,#c6f1e1 984.4px)"></i>
<i style="top:249px;height:3px;background:linear-gradient(90deg,#dbe8ee -3.7px,#e0d5ec 86.3px,#ebd1f5 304.4px,#ebcff5 424.6px,#f7dcf3 479.1px,#f9d9d9 597.5px,#efeee0 777.3px,#d8eadc 876.0px,#c6f1e1 984.7px)"></i>
<i style="top:252px;height:3px;background:linear-gradient(90deg,#dbe8ee -2.8px,#e0d5ec 87.2px,#ebd1f5 305.9px,#ebcff5 425.1px,#f7dcf3 479.7px,#f9d9d9 597.9px,#efeee0 777.6px,#d8eadc 876.4px,#c6f1e1 984.9px)"></i>
<i style="top:255px;height:3px;background:linear-gradient(90deg,#dbe8ee -2.0px,#e0d5ec 88.0px,#ebd1f5 307.4px,#ebcff5 425.7px,#f7dcf3 480.3px,#f9d9d9 598.3px,#efeee0 777.9px,#d8eadc 876.7px,#c6f1e1 985.1px)"></i>
<i style="top:258px;height:3px;background:linear-gradient(90deg,#dbe8ee -1.3px,#e0d5ec 88.7px,#ebd1f5 308.8px,#ebcff5 426.2px,#f7dcf3 480.9px,#f9d9d9 598.7px,#efeee0 778.2px,#d8eadc 877.0px,#c6f1e1 985.4px)"></i>
<i style="top:261px;height:3px;background:linear-gradient(90deg,#dbe8ee -0.5px,#e0d5ec 89.5px,#ebd1f5 310.3px,#ebcff5 426.7px,#f7dcf3 481.5px,#f9d9d9 599.1px,#efeee0 778.5px,#d8eadc 877.4px,#c6f1e1 985.6px)"></i>
<i style="top:264px;height:3px;background:linear-gradient(90deg,#dbe8ee 0.3px,#e0d5ec 90.3px,#ebd1f5 311.7px,#ebcff5 427.3px,#f7dcf3 482.0px,#f9d9d9 599.5px,#efeee0 778.8px,#d8eadc 877.7px,#c6f1e1 985.8px)"></i>
<i style="top:267px;height:3px;background:linear-gradient(90deg,#dbe8ee 1.0px,#e0d5ec 91.0px,#ebd1f5 313.1px,#ebcff5 427.8px,#f7dcf3 482.6px,#f9d9d9 599.8px,#efeee0 779.1px,#d8eadc 878.0px,#c6f1e1 986.0px)"></i>
<i style="top:270px;height:3px;background:linear-gradient(90deg,#dbe8ee 1.8px,#e0d5ec 91.8px,#ebd1f5 314.4px,#ebcff5 428.3px,#f7dcf3 483.1px,#f9d9d9 600.2px,#efeee0 779.3px,#d8eadc 878.3px,#c6f1e1 986.2px)"></i>
<i style="top:273px;height:3px;background:linear-gradient(90deg,#dbe8ee 2.5px,#e0d5ec 92.5px,#ebd1f5 315.8px,#ebcff5 428.8px,#f7dcf3 483.6px,#f9d9d9 600.5px,#efeee0 779.6px,#d8eadc 878.6px,#c6f1e1 986.4px)"></i>
<i style="top:276px;height:3px;background:linear-gradient(90deg,#dbe8ee 3.2px,#e0d5ec 93.2px,#ebd1f5 317.1px,#ebcff5 429.2px,#f7dcf3 484.2px,#f9d9d9 600.9px,#efeee0 779.9px,#d8eadc 878.9px,#c6f1e1 986.6px)"></i>
<i style="top:279px;height:3px;background:linear-gradient(90deg,#dbe8ee 3.9px,#e0d5ec 93.9px,#ebd1f5 318.4px,#ebcff5 429.7px,#f7dcf3 484.7px,#f9d9d9 601.2px,#efeee0 780.1px,#d8eadc 879.2px,#c6f1e1 986.8px)"></i>
<i style="top:282px;height:3px;background:linear-gradient(90deg,#dbe8ee 4.6px,#e0d5ec 94.6px,#ebd1f5 319.6px,#ebcff5 430.2px,#f7dcf3 485.2px,#f9d9d9 601.5px,#efeee0 780.4px,#d8eadc 879.5px,#c6f1e1 987.0px)"></i>
<i style="top:285px;height:3px;background:linear-gradient(90deg,#dbe8ee 5.3px,#e0d5ec 95.3px,#ebd1f5 320.9px,#ebcff5 430.6px,#f7dcf3 485.7px,#f9d9d9 601.9px,#efeee0 780.7px,#d8eadc 879.8px,#c6f1e1 987.2px)"></i>
<i style="top:288px;height:3px;background:linear-gradient(90deg,#dbe8ee 5.9px,#e0d5ec 95.9px,#ebd1f5 322.1px,#ebcff5 431.1px,#f7dcf3 486.2px,#f9d9d9 602.2px,#efeee0 780.9px,#d8eadc 880.1px,#c6f1e1 987.4px)"></i>
<i style="top:291px;height:3px;background:linear-gradient(90deg,#dbe8ee 6.6px,#e0d5ec 96.6px,#ebd1f5 323.3px,#ebcff5 431.5px,#f7dcf3 486.6px,#f9d9d9 602.5px,#efeee0 781.2px,#d8eadc 880.4px,#c6f1e1 987.6px)"></i>
<i style="top:294px;height:3px;background:linear-gradient(90deg,#dbe8ee 7.2px,#e0d5ec 97.2px,#ebd1f5 324.5px,#ebcff5 431.9px,#f7dcf3 487.1px,#f9d9d9 602.8px,#efeee0 781.4px,#d8eadc 880.6px,#c6f1e1 987.8px)"></i>
<i style="top:297px;height:3px;background:linear-gradient(90deg,#dbe8ee 7.8px,#e0d5ec 97.8px,#ebd1f5 325.6px,#ebcff5 432.4px,#f7dcf3 487.6px,#f9d9d9 603.1px,#efeee0 781.6px,#d8eadc 880.9px,#c6f1e1 987.9px)"></i>
<i style="top:300px;height:3px;background:linear-gradient(90deg,#dbe8ee 8.4px,#e0d5ec 98.4px,#ebd1f5 326.7px,#ebcff5 432.8px,#f7dcf3 488.0px,#f9d9d9 603.4px,#efeee0 781.9px,#d8eadc 881.2px,#c6f1e1 988.1px)"></i>
<i style="top:303px;height:3px;background:linear-gradient(90deg,#dbe8ee 9.0px,#e0d5ec 99.0px,#ebd1f5 327.8px,#ebcff5 433.2px,#f7dcf3 488.4px,#f9d9d9 603.7px,#efeee0 782.1px,#d8eadc 881.4px,#c6f1e1 988.3px)"></i>
<i style="top:306px;height:3px;background:linear-gradient(90deg,#dbe8ee 9.6px,#e0d5ec 99.6px,#ebd1f5 328.9px,#ebcff5 433.6px,#f7dcf3 488.9px,#f9d9d9 604.0px,#efeee0 782.3px,#d8eadc 881.7px,#c6f1e1 988.4px)"></i>
<i style="top:309px;height:3px;background:linear-gradient(90deg,#dbe8ee 10.1px,#e0d5ec 100.1px,#ebd1f5 330.0px,#ebcff5 434.0px,#f7dcf3 489.3px,#f9d9d9 604.2px,#efeee0 782.5px,#d8eadc 881.9px,#c6f1e1 988.6px)"></i>
<i style="top:312px;height:3px;background:linear-gradient(90deg,#dbe8ee 10.7px,#e0d5ec 100.7px,#ebd1f5 331.0px,#ebcff5 434.3px,#f7dcf3 489.7px,#f9d9d9 604.5px,#efeee0 782.7px,#d8eadc 882.2px,#c6f1e1 988.8px)"></i>
<i style="top:315px;height:3px;background:linear-gradient(90deg,#dbe8ee 11.2px,#e0d5ec 101.2px,#ebd1f5 332.0px,#ebcff5 434.7px,#f7dcf3 490.1px,#f9d9d9 604.8px,#efeee0 782.9px,#d8eadc 882.4px,#c6f1e1 988.9px)"></i>
<i style="top:318px;height:3px;background:linear-gradient(90deg,#dbe8ee 11.8px,#e0d5ec 101.8px,#ebd1f5 333.0px,#ebcff5 435.0px,#f7dcf3 490.5px,#f9d9d9 605.0px,#efeee0 783.1px,#d8eadc 882.6px,#c6f1e1 989.1px)"></i>
<i style="top:321px;height:3px;background:linear-gradient(90deg,#dbe8ee 12.3px,#e0d5ec 102.3px,#ebd1f5 333.9px,#ebcff5 435.4px,#f7dcf3 490.8px,#f9d9d9 605.3px,#efeee0 783.3px,#d8eadc 882.8px,#c6f1e1 989.2px)"></i>
<i style="top:324px;height:3px;background:linear-gradient(90deg,#dbe8ee 12.8px,#e0d5ec 102.8px,#ebd1f5 334.8px,#ebcff5 435.7px,#f7dcf3 491.2px,#f9d9d9 605.5px,#efeee0 783.5px,#d8eadc 883.0px,#c6f1e1 989.4px)"></i>
<i style="top:327px;height:3px;background:linear-gradient(90deg,#dbe8ee 13.2px,#e0d5ec 103.2px,#ebd1f5 335.8px,#ebcff5 436.1px,#f7dcf3 491.6px,#f9d9d9 605.8px,#efeee0 783.7px,#d8eadc 883.2px,#c6f1e1 989.5px)"></i>
<i style="top:330px;height:3px;background:linear-gradient(90deg,#dbe8ee 13.7px,#e0d5ec 103.7px,#ebd1f5 336.6px,#ebcff5 436.4px,#f7dcf3 491.9px,#f9d9d9 606.0px,#efeee0 783.9px,#d8eadc 883.5px,#c6f1e1 989.6px)"></i>
<i style="top:333px;height:3px;background:linear-gradient(90deg,#dbe8ee 14.2px,#e0d5ec 104.2px,#ebd1f5 337.5px,#ebcff5 436.7px,#f7dcf3 492.2px,#f9d9d9 606.2px,#efeee0 784.0px,#d8eadc 883.6px,#c6f1e1 989.8px)"></i>
<i style="top:336px;height:3px;background:linear-gradient(90deg,#dbe8ee 14.6px,#e0d5ec 104.6px,#ebd1f5 338.3px,#ebcff5 437.0px,#f7dcf3 492.6px,#f9d9d9 606.4px,#efeee0 784.2px,#d8eadc 883.8px,#c6f1e1 989.9px)"></i>
<i style="top:339px;height:3px;background:linear-gradient(90deg,#dbe8ee 15.1px,#e0d5ec 105.1px,#ebd1f5 339.1px,#ebcff5 437.3px,#f7dcf3 492.9px,#f9d9d9 606.6px,#efeee0 784.4px,#d8eadc 884.0px,#c6f1e1 990.0px)"></i>
<i style="top:342px;height:3px;background:linear-gradient(90deg,#dbe8ee 15.5px,#e0d5ec 105.5px,#ebd1f5 339.9px,#ebcff5 437.6px,#f7dcf3 493.2px,#f9d9d9 606.8px,#efeee0 784.5px,#d8eadc 884.2px,#c6f1e1 990.1px)"></i>
<i style="top:345px;height:3px;background:linear-gradient(90deg,#dbe8ee 15.9px,#e0d5ec 105.9px,#ebd1f5 340.7px,#ebcff5 437.9px,#f7dcf3 493.5px,#f9d9d9 607.0px,#efeee0 784.7px,#d8eadc 884.4px,#c6f1e1 990.3px)"></i>
<i style="top:348px;height:3px;background:linear-gradient(90deg,#dbe8ee 16.3px,#e0d5ec 106.3px,#ebd1f5 341.4px,#ebcff5 438.1px,#f7dcf3 493.8px,#f9d9d9 607.2px,#efeee0 784.8px,#d8eadc 884.6px,#c6f1e1 990.4px)"></i>
<i style="top:351px;height:3px;background:linear-gradient(90deg,#dbe8ee 16.7px,#e0d5ec 106.7px,#ebd1f5 342.1px,#ebcff5 438.4px,#f7dcf3 494.1px,#f9d9d9 607.4px,#efeee0 785.0px,#d8eadc 884.7px,#c6f1e1 990.5px)"></i>
<i style="top:354px;height:3px;background:linear-gradient(90deg,#dbe8ee 17.0px,#e0d5ec 107.0px,#ebd1f5 342.8px,#ebcff5 438.6px,#f7dcf3 494.3px,#f9d9d9 607.6px,#efeee0 785.1px,#d8eadc 884.9px,#c6f1e1 990.6px)"></i>
<i style="top:357px;height:3px;background:linear-gradient(90deg,#dbe8ee 17.4px,#e0d5ec 107.4px,#ebd1f5 343.4px,#ebcff5 438.9px,#f7dcf3 494.6px,#f9d9d9 607.8px,#efeee0 785.3px,#d8eadc 885.0px,#c6f1e1 990.7px)"></i>
<i style="top:360px;height:3px;background:linear-gradient(90deg,#dbe8ee 17.7px,#e0d5ec 107.7px,#ebd1f5 344.1px,#ebcff5 439.1px,#f7dcf3 494.9px,#f9d9d9 607.9px,#efeee0 785.4px,#d8eadc 885.2px,#c6f1e1 990.8px)"></i>
<i style="top:363px;height:3px;background:linear-gradient(90deg,#dbe8ee 18.1px,#e0d5ec 108.1px,#ebd1f5 344.7px,#ebcff5 439.3px,#f7dcf3 495.1px,#f9d9d9 608.1px,#efeee0 785.5px,#d8eadc 885.3px,#c6f1e1 990.9px)"></i>
<i style="top:366px;height:3px;background:linear-gradient(90deg,#dbe8ee 18.4px,#e0d5ec 108.4px,#ebd1f5 345.3px,#ebcff5 439.5px,#f7dcf3 495.3px,#f9d9d9 608.2px,#efeee0 785.6px,#d8eadc 885.4px,#c6f1e1 991.0px)"></i>
<i style="top:369px;height:3px;background:linear-gradient(90deg,#dbe8ee 18.7px,#e0d5ec 108.7px,#ebd1f5 345.8px,#ebcff5 439.7px,#f7dcf3 495.6px,#f9d9d9 608.4px,#efeee0 785.7px,#d8eadc 885.6px,#c6f1e1 991.1px)"></i>
<i style="top:372px;height:3px;background:linear-gradient(90deg,#dbe8ee 19.0px,#e0d5ec 109.0px,#ebd1f5 346.4px,#ebcff5 439.9px,#f7dcf3 495.8px,#f9d9d9 608.5px,#efeee0 785.9px,#d8eadc 885.7px,#c6f1e1 991.1px)"></i>
<i style="top:375px;height:3px;background:linear-gradient(90deg,#dbe8ee 19.2px,#e0d5ec 109.2px,#ebd1f5 346.9px,#ebcff5 440.1px,#f7dcf3 496.0px,#f9d9d9 608.7px,#efeee0 786.0px,#d8eadc 885.8px,#c6f1e1 991.2px)"></i>
<i style="top:378px;height:3px;background:linear-gradient(90deg,#dbe8ee 19.5px,#e0d5ec 109.5px,#ebd1f5 347.4px,#ebcff5 440.3px,#f7dcf3 496.2px,#f9d9d9 608.8px,#efeee0 786.1px,#d8eadc 885.9px,#c6f1e1 991.3px)"></i>
<i style="top:381px;height:3px;background:linear-gradient(90deg,#dbe8ee 19.8px,#e0d5ec 109.8px,#ebd1f5 347.8px,#ebcff5 440.5px,#f7dcf3 496.3px,#f9d9d9 608.9px,#efeee0 786.1px,#d8eadc 886.0px,#c6f1e1 991.4px)"></i>
<i style="top:384px;height:3px;background:linear-gradient(90deg,#dbe8ee 20.0px,#e0d5ec 110.0px,#ebd1f5 348.3px,#ebcff5 440.6px,#f7dcf3 496.5px,#f9d9d9 609.0px,#efeee0 786.2px,#d8eadc 886.1px,#c6f1e1 991.4px)"></i>
<i style="top:387px;height:3px;background:linear-gradient(90deg,#dbe8ee 20.2px,#e0d5ec 110.2px,#ebd1f5 348.7px,#ebcff5 440.8px,#f7dcf3 496.7px,#f9d9d9 609.1px,#efeee0 786.3px,#d8eadc 886.2px,#c6f1e1 991.5px)"></i>
<i style="top:390px;height:3px;background:linear-gradient(90deg,#dbe8ee 20.4px,#e0d5ec 110.4px,#ebd1f5 349.1px,#ebcff5 440.9px,#f7dcf3 496.8px,#f9d9d9 609.2px,#efeee0 786.4px,#d8eadc 886.3px,#c6f1e1 991.5px)"></i>
<i style="top:393px;height:3px;background:linear-gradient(90deg,#dbe8ee 20.6px,#e0d5ec 110.6px,#ebd1f5 349.4px,#ebcff5 441.1px,#f7dcf3 497.0px,#f9d9d9 609.3px,#efeee0 786.5px,#d8eadc 886.4px,#c6f1e1 991.6px)"></i>
<i style="top:396px;height:3px;background:linear-gradient(90deg,#dbe8ee 20.8px,#e0d5ec 110.8px,#ebd1f5 349.8px,#ebcff5 441.2px,#f7dcf3 497.1px,#f9d9d9 609.4px,#efeee0 786.5px,#d8eadc 886.5px,#c6f1e1 991.7px)"></i>
<i style="top:399px;height:3px;background:linear-gradient(90deg,#dbe8ee 21.0px,#e0d5ec 111.0px,#ebd1f5 350.1px,#ebcff5 441.3px,#f7dcf3 497.2px,#f9d9d9 609.5px,#efeee0 786.6px,#d8eadc 886.6px,#c6f1e1 991.7px)"></i>
<i style="top:402px;height:3px;background:linear-gradient(90deg,#dbe8ee 21.1px,#e0d5ec 111.1px,#ebd1f5 350.4px,#ebcff5 441.4px,#f7dcf3 497.4px,#f9d9d9 609.6px,#efeee0 786.7px,#d8eadc 886.6px,#c6f1e1 991.8px)"></i>
<i style="top:405px;height:3px;background:linear-gradient(90deg,#dbe8ee 21.3px,#e0d5ec 111.3px,#ebd1f5 350.7px,#ebcff5 441.5px,#f7dcf3 497.5px,#f9d9d9 609.6px,#efeee0 786.7px,#d8eadc 886.7px,#c6f1e1 991.8px)"></i>
<i style="top:408px;height:3px;background:linear-gradient(90deg,#dbe8ee 21.4px,#e0d5ec 111.4px,#ebd1f5 350.9px,#ebcff5 441.6px,#f7dcf3 497.6px,#f9d9d9 609.7px,#efeee0 786.8px,#d8eadc 886.7px,#c6f1e1 991.8px)"></i>
<i style="top:411px;height:3px;background:linear-gradient(90deg,#dbe8ee 21.5px,#e0d5ec 111.5px,#ebd1f5 351.1px,#ebcff5 441.7px,#f7dcf3 497.7px,#f9d9d9 609.8px,#efeee0 786.8px,#d8eadc 886.8px,#c6f1e1 991.9px)"></i>
<i style="top:414px;height:3px;background:linear-gradient(90deg,#dbe8ee 21.6px,#e0d5ec 111.6px,#ebd1f5 351.3px,#ebcff5 441.7px,#f7dcf3 497.7px,#f9d9d9 609.8px,#efeee0 786.9px,#d8eadc 886.8px,#c6f1e1 991.9px)"></i>
<i style="top:417px;height:3px;background:linear-gradient(90deg,#dbe8ee 21.7px,#e0d5ec 111.7px,#ebd1f5 351.5px,#ebcff5 441.8px,#f7dcf3 497.8px,#f9d9d9 609.9px,#efeee0 786.9px,#d8eadc 886.9px,#c6f1e1 991.9px)"></i>
<i style="top:420px;height:3px;background:linear-gradient(90deg,#dbe8ee 21.8px,#e0d5ec 111.8px,#ebd1f5 351.6px,#ebcff5 441.9px,#f7dcf3 497.9px,#f9d9d9 609.9px,#efeee0 786.9px,#d8eadc 886.9px,#c6f1e1 991.9px)"></i>
<i style="top:423px;height:3px;background:linear-gradient(90deg,#dbe8ee 21.9px,#e0d5ec 111.9px,#ebd1f5 351.8px,#ebcff5 441.9px,#f7dcf3 497.9px,#f9d9d9 609.9px,#efeee0 786.9px,#d8eadc 886.9px,#c6f1e1 992.0px)"></i>
<i style="top:426px;height:3px;background:linear-gradient(90deg,#dbe8ee 21.9px,#e0d5ec 111.9px,#ebd1f5 351.9px,#ebcff5 441.9px,#f7dcf3 497.9px,#f9d9d9 610.0px,#efeee0 787.0px,#d8eadc 887.0px,#c6f1e1 992.0px)"></i>
<i style="top:429px;height:3px;background:linear-gradient(90deg,#dbe8ee 22.0px,#e0d5ec 112.0px,#ebd1f5 351.9px,#ebcff5 442.0px,#f7dcf3 498.0px,#f9d9d9 610.0px,#efeee0 787.0px,#d8eadc 887.0px,#c6f1e1 992.0px)"></i>
<i style="top:432px;height:3px;background:linear-gradient(90deg,#dbe8ee 22.0px,#e0d5ec 112.0px,#ebd1f5 352.0px,#ebcff5 442.0px,#f7dcf3 498.0px,#f9d9d9 610.0px,#efeee0 787.0px,#d8eadc 887.0px,#c6f1e1 992.0px)"></i>
<i style="top:435px;height:3px;background:linear-gradient(90deg,#dbe8ee 22.0px,#e0d5ec 112.0px,#ebd1f5 352.0px,#ebcff5 442.0px,#f7dcf3 498.0px,#f9d9d9 610.0px,#efeee0 787.0px,#d8eadc 887.0px,#c6f1e1 992.0px)"></i>
<i style="top:438px;height:3px;background:linear-gradient(90deg,#dbe8ee 21.9px,#e0d5ec 111.9px,#ebd1f5 351.9px,#ebcff5 441.9px,#f7dcf3 497.9px,#f9d9d9 610.0px,#efeee0 787.0px,#d8eadc 887.0px,#c6f1e1 992.0px)"></i>
<i style="top:441px;height:3px;background:linear-gradient(90deg,#dbe8ee 21.4px,#e0d5ec 111.5px,#ebd1f5 351.4px,#ebcff5 441.7px,#f7dcf3 497.7px,#f9d9d9 609.8px,#efeee0 786.8px,#d8eadc 886.9px,#c6f1e1 991.9px)"></i>
<i style="top:444px;height:3px;background:linear-gradient(90deg,#dbe8ee 20.8px,#e0d5ec 111.0px,#ebd1f5 350.8px,#ebcff5 441.4px,#f7dcf3 497.4px,#f9d9d9 609.6px,#efeee0 786.7px,#d8eadc 886.7px,#c6f1e1 991.8px)"></i>
<i style="top:447px;height:3px;background:linear-gradient(90deg,#dbe8ee 20.1px,#e0d5ec 110.4px,#ebd1f5 350.1px,#ebcff5 441.0px,#f7dcf3 497.0px,#f9d9d9 609.3px,#efeee0 786.4px,#d8eadc 886.5px,#c6f1e1 991.6px)"></i>
<i style="top:450px;height:3px;background:linear-gradient(90deg,#dbe8ee 19.3px,#e0d5ec 109.7px,#ebd1f5 349.3px,#ebcff5 440.6px,#f7dcf3 496.6px,#f9d9d9 609.0px,#efeee0 786.2px,#d8eadc 886.3px,#c6f1e1 991.5px)"></i>
<i style="top:453px;height:3px;background:linear-gradient(90deg,#dbe8ee 18.4px,#e0d5ec 109.0px,#ebd1f5 348.4px,#ebcff5 440.1px,#f7dcf3 496.1px,#f9d9d9 608.6px,#efeee0 785.9px,#d8eadc 886.1px,#c6f1e1 991.3px)"></i>
<i style="top:456px;height:3px;background:linear-gradient(90deg,#dbe8ee 17.4px,#e0d5ec 108.1px,#ebd1f5 347.4px,#ebcff5 439.6px,#f7dcf3 495.6px,#f9d9d9 608.3px,#efeee0 785.6px,#d8eadc 885.8px,#c6f1e1 991.1px)"></i>
<i style="top:459px;height:3px;background:linear-gradient(90deg,#dbe8ee 16.3px,#e0d5ec 107.3px,#ebd1f5 346.3px,#ebcff5 439.1px,#f7dcf3 495.0px,#f9d9d9 607.9px,#efeee0 785.3px,#d8eadc 885.6px,#c6f1e1 990.8px)"></i>
<i style="top:462px;height:3px;background:linear-gradient(90deg,#dbe8ee 15.2px,#e0d5ec 106.3px,#ebd1f5 345.2px,#ebcff5 438.5px,#f7dcf3 494.5px,#f9d9d9 607.4px,#efeee0 785.0px,#d8eadc 885.3px,#c6f1e1 990.6px)"></i>
<i style="top:465px;height:3px;background:linear-gradient(90deg,#dbe8ee 14.0px,#e0d5ec 105.3px,#ebd1f5 344.0px,#ebcff5 437.9px,#f7dcf3 493.8px,#f9d9d9 607.0px,#efeee0 784.6px,#d8eadc 885.0px,#c6f1e1 990.4px)"></i>
<i style="top:468px;height:3px;background:linear-gradient(90deg,#dbe8ee 12.7px,#e0d5ec 104.3px,#ebd1f5 342.7px,#ebcff5 437.3px,#f7dcf3 493.2px,#f9d9d9 606.5px,#efeee0 784.2px,#d8eadc 884.7px,#c6f1e1 990.1px)"></i>
<i style="top:471px;height:3px;background:linear-gradient(90deg,#dbe8ee 11.4px,#e0d5ec 103.2px,#ebd1f5 341.4px,#ebcff5 436.6px,#f7dcf3 492.5px,#f9d9d9 606.0px,#efeee0 783.9px,#d8eadc 884.4px,#c6f1e1 989.9px)"></i>
<i style="top:474px;height:3px;background:linear-gradient(90deg,#dbe8ee 10.1px,#e0d5ec 102.1px,#ebd1f5 340.1px,#ebcff5 435.9px,#f7dcf3 491.8px,#f9d9d9 605.5px,#efeee0 783.4px,#d8eadc 884.0px,#c6f1e1 989.6px)"></i>
<i style="top:477px;height:3px;background:linear-gradient(90deg,#dbe8ee 8.7px,#e0d5ec 100.9px,#ebd1f5 338.7px,#ebcff5 435.2px,#f7dcf3 491.1px,#f9d9d9 605.0px,#efeee0 783.0px,#d8eadc 883.7px,#c6f1e1 989.3px)"></i>
<i style="top:480px;height:3px;background:linear-gradient(90deg,#dbe8ee 7.2px,#e0d5ec 99.7px,#ebd1f5 337.2px,#ebcff5 434.4px,#f7dcf3 490.3px,#f9d9d9 604.4px,#efeee0 782.6px,#d8eadc 883.3px,#c6f1e1 989.0px)"></i>
<i style="top:483px;height:3px;background:linear-gradient(90deg,#dbe8ee 5.7px,#e0d5ec 98.4px,#ebd1f5 335.7px,#ebcff5 433.7px,#f7dcf3 489.5px,#f9d9d9 603.9px,#efeee0 782.1px,#d8eadc 882.9px,#c6f1e1 988.7px)"></i>
<i style="top:486px;height:3px;background:linear-gradient(90deg,#dbe8ee 4.1px,#e0d5ec 97.1px,#ebd1f5 334.1px,#ebcff5 432.9px,#f7dcf3 488.7px,#f9d9d9 603.3px,#efeee0 781.7px,#d8eadc 882.5px,#c6f1e1 988.4px)"></i>
<i style="top:489px;height:3px;background:linear-gradient(90deg,#dbe8ee 2.6px,#e0d5ec 95.8px,#ebd1f5 332.6px,#ebcff5 432.0px,#f7dcf3 487.9px,#f9d9d9 602.7px,#efeee0 781.2px,#d8eadc 882.1px,#c6f1e1 988.1px)"></i>
<i style="top:492px;height:3px;background:linear-gradient(90deg,#dbe8ee 0.9px,#e0d5ec 94.4px,#ebd1f5 330.9px,#ebcff5 431.2px,#f7dcf3 487.1px,#f9d9d9 602.1px,#efeee0 780.7px,#d8eadc 881.7px,#c6f1e1 987.7px)"></i>
<i style="top:495px;height:3px;background:linear-gradient(90deg,#dbe8ee -0.7px,#e0d5ec 93.0px,#ebd1f5 329.3px,#ebcff5 430.4px,#f7dcf3 486.2px,#f9d9d9 601.4px,#efeee0 780.2px,#d8eadc 881.3px,#c6f1e1 987.4px)"></i>
<i style="top:498px;height:3px;background:linear-gradient(90deg,#dbe8ee -2.5px,#e0d5ec 91.6px,#ebd1f5 327.5px,#ebcff5 429.5px,#f7dcf3 485.3px,#f9d9d9 600.8px,#efeee0 779.7px,#d8eadc 880.9px,#c6f1e1 987.1px)"></i>
<i style="top:501px;height:3px;background:linear-gradient(90deg,#dbe8ee -4.2px,#e0d5ec 90.2px,#ebd1f5 325.8px,#ebcff5 428.6px,#f7dcf3 484.4px,#f9d9d9 600.1px,#efeee0 779.2px,#d8eadc 880.4px,#c6f1e1 986.7px)"></i>
<i style="top:504px;height:3px;background:linear-gradient(90deg,#dbe8ee -6.0px,#e0d5ec 88.7px,#ebd1f5 324.0px,#ebcff5 427.7px,#f7dcf3 483.5px,#f9d9d9 599.5px,#efeee0 778.7px,#d8eadc 880.0px,#c6f1e1 986.3px)"></i>
<i style="top:507px;height:3px;background:linear-gradient(90deg,#dbe8ee -7.8px,#e0d5ec 87.2px,#ebd1f5 322.2px,#ebcff5 426.7px,#f7dcf3 482.5px,#f9d9d9 598.8px,#efeee0 778.1px,#d8eadc 879.5px,#c6f1e1 986.0px)"></i>
<i style="top:510px;height:3px;background:linear-gradient(90deg,#dbe8ee -9.7px,#e0d5ec 85.6px,#ebd1f5 320.3px,#ebcff5 425.8px,#f7dcf3 481.6px,#f9d9d9 598.1px,#efeee0 777.6px,#d8eadc 879.1px,#c6f1e1 985.6px)"></i>
<i style="top:513px;height:3px;background:linear-gradient(90deg,#dbe8ee -11.6px,#e0d5ec 84.0px,#ebd1f5 318.4px,#ebcff5 424.8px,#f7dcf3 480.6px,#f9d9d9 597.4px,#efeee0 777.0px,#d8eadc 878.6px,#c6f1e1 985.2px)"></i>
<i style="top:516px;height:3px;background:linear-gradient(90deg,#dbe8ee -13.5px,#e0d5ec 82.4px,#ebd1f5 316.5px,#ebcff5 423.8px,#f7dcf3 479.6px,#f9d9d9 596.6px,#efeee0 776.4px,#d8eadc 878.1px,#c6f1e1 984.8px)"></i>
<i style="top:519px;height:3px;background:linear-gradient(90deg,#dbe8ee -15.4px,#e0d5ec 80.8px,#ebd1f5 314.6px,#ebcff5 422.8px,#f7dcf3 478.6px,#f9d9d9 595.9px,#efeee0 775.9px,#d8eadc 877.6px,#c6f1e1 984.4px)"></i>
<i style="top:522px;height:3px;background:linear-gradient(90deg,#dbe8ee -17.4px,#e0d5ec 79.1px,#ebd1f5 312.6px,#ebcff5 421.8px,#f7dcf3 477.5px,#f9d9d9 595.2px,#efeee0 775.3px,#d8eadc 877.1px,#c6f1e1 984.0px)"></i>
<i style="top:525px;height:3px;background:linear-gradient(90deg,#dbe8ee -19.5px,#e0d5ec 77.5px,#ebd1f5 310.5px,#ebcff5 420.8px,#f7dcf3 476.5px,#f9d9d9 594.4px,#efeee0 774.7px,#d8eadc 876.6px,#c6f1e1 983.6px)"></i>
<i style="top:528px;height:3px;background:linear-gradient(90deg,#dbe8ee -21.5px,#e0d5ec 75.7px,#ebd1f5 308.5px,#ebcff5 419.7px,#f7dcf3 475.4px,#f9d9d9 593.6px,#efeee0 774.0px,#d8eadc 876.1px,#c6f1e1 983.2px)"></i>
<i style="top:531px;height:3px;background:linear-gradient(90deg,#dbe8ee -23.6px,#e0d5ec 74.0px,#ebd1f5 306.4px,#ebcff5 418.7px,#f7dcf3 474.3px,#f9d9d9 592.8px,#efeee0 773.4px,#d8eadc 875.6px,#c6f1e1 982.8px)"></i>
<i style="top:534px;height:3px;background:linear-gradient(90deg,#dbe8ee -25.7px,#e0d5ec 72.2px,#ebd1f5 304.3px,#ebcff5 417.6px,#f7dcf3 473.2px,#f9d9d9 592.1px,#efeee0 772.8px,#d8eadc 875.1px,#c6f1e1 982.3px)"></i>
<i style="top:537px;height:3px;background:linear-gradient(90deg,#dbe8ee -27.9px,#e0d5ec 70.5px,#ebd1f5 302.1px,#ebcff5 416.5px,#f7dcf3 472.1px,#f9d9d9 591.2px,#efeee0 772.2px,#d8eadc 874.5px,#c6f1e1 981.9px)"></i>
<i style="top:540px;height:3px;background:linear-gradient(90deg,#dbe8ee -30.0px,#e0d5ec 68.6px,#ebd1f5 300.0px,#ebcff5 415.4px,#f7dcf3 471.0px,#f9d9d9 590.4px,#efeee0 771.5px,#d8eadc 874.0px,#c6f1e1 981.5px)"></i>
<i style="top:543px;height:3px;background:linear-gradient(90deg,#dbe8ee -32.2px,#e0d5ec 66.8px,#ebd1f5 297.8px,#ebcff5 414.2px,#f7dcf3 469.9px,#f9d9d9 589.6px,#efeee0 770.9px,#d8eadc 873.4px,#c6f1e1 981.0px)"></i>
<i style="top:546px;height:3px;background:linear-gradient(90deg,#dbe8ee -34.5px,#e0d5ec 65.0px,#ebd1f5 295.5px,#ebcff5 413.1px,#f7dcf3 468.7px,#f9d9d9 588.8px,#efeee0 770.2px,#d8eadc 872.9px,#c6f1e1 980.6px)"></i>
<i style="top:549px;height:3px;background:linear-gradient(90deg,#dbe8ee -36.7px,#e0d5ec 63.1px,#ebd1f5 293.3px,#ebcff5 411.9px,#f7dcf3 467.5px,#f9d9d9 587.9px,#efeee0 769.5px,#d8eadc 872.3px,#c6f1e1 980.1px)"></i>
<i style="top:552px;height:3px;background:linear-gradient(90deg,#dbe8ee -39.0px,#e0d5ec 61.2px,#ebd1f5 291.0px,#ebcff5 410.8px,#f7dcf3 466.3px,#f9d9d9 587.1px,#efeee0 768.8px,#d8eadc 871.8px,#c6f1e1 979.7px)"></i>
<i style="top:555px;height:3px;background:linear-gradient(90deg,#dbe8ee -41.3px,#e0d5ec 59.2px,#ebd1f5 288.7px,#ebcff5 409.6px,#f7dcf3 465.1px,#f9d9d9 586.2px,#efeee0 768.2px,#d8eadc 871.2px,#c6f1e1 979.2px)"></i>
<i style="top:558px;height:3px;background:linear-gradient(90deg,#dbe8ee -43.6px,#e0d5ec 57.3px,#ebd1f5 286.4px,#ebcff5 408.4px,#f7dcf3 463.9px,#f9d9d9 585.3px,#efeee0 767.5px,#d8eadc 870.6px,#c6f1e1 978.7px)"></i>
<i style="top:561px;height:3px;background:linear-gradient(90deg,#dbe8ee -46.0px,#e0d5ec 55.3px,#ebd1f5 284.0px,#ebcff5 407.2px,#f7dcf3 462.7px,#f9d9d9 584.4px,#efeee0 766.8px,#d8eadc 870.0px,#c6f1e1 978.2px)"></i>
<i style="top:564px;height:3px;background:linear-gradient(90deg,#dbe8ee -48.4px,#e0d5ec 53.3px,#ebd1f5 281.6px,#ebcff5 406.0px,#f7dcf3 461.5px,#f9d9d9 583.5px,#efeee0 766.0px,#d8eadc 869.4px,#c6f1e1 977.8px)"></i>
<i style="top:567px;height:3px;background:linear-gradient(90deg,#dbe8ee -50.8px,#e0d5ec 51.3px,#ebd1f5 279.2px,#ebcff5 404.7px,#f7dcf3 460.2px,#f9d9d9 582.6px,#efeee0 765.3px,#d8eadc 868.8px,#c6f1e1 977.3px)"></i>
<i style="top:570px;height:3px;background:linear-gradient(90deg,#dbe8ee -53.2px,#e0d5ec 49.3px,#ebd1f5 276.8px,#ebcff5 403.5px,#f7dcf3 458.9px,#f9d9d9 581.7px,#efeee0 764.6px,#d8eadc 868.2px,#c6f1e1 976.8px)"></i>
<i style="top:573px;height:3px;background:linear-gradient(90deg,#dbe8ee -55.7px,#e0d5ec 47.2px,#ebd1f5 274.3px,#ebcff5 402.2px,#f7dcf3 457.7px,#f9d9d9 580.8px,#efeee0 763.9px,#d8eadc 867.6px,#c6f1e1 976.3px)"></i>
<i style="top:576px;height:3px;background:linear-gradient(90deg,#dbe8ee -58.2px,#e0d5ec 45.2px,#ebd1f5 271.8px,#ebcff5 400.9px,#f7dcf3 456.4px,#f9d9d9 579.8px,#efeee0 763.1px,#d8eadc 866.9px,#c6f1e1 975.8px)"></i>
<i style="top:579px;height:3px;background:linear-gradient(90deg,#dbe8ee -60.7px,#e0d5ec 43.1px,#ebd1f5 269.3px,#ebcff5 399.7px,#f7dcf3 455.1px,#f9d9d9 578.9px,#efeee0 762.4px,#d8eadc 866.3px,#c6f1e1 975.3px)"></i>
<i style="top:582px;height:3px;background:linear-gradient(90deg,#dbe8ee -63.3px,#e0d5ec 41.0px,#ebd1f5 266.7px,#ebcff5 398.4px,#f7dcf3 453.8px,#f9d9d9 577.9px,#efeee0 761.6px,#d8eadc 865.7px,#c6f1e1 974.7px)"></i>
<i style="top:585px;height:3px;background:linear-gradient(90deg,#dbe8ee -65.8px,#e0d5ec 38.8px,#ebd1f5 264.2px,#ebcff5 397.0px,#f7dcf3 452.4px,#f9d9d9 577.0px,#efeee0 760.9px,#d8eadc 865.0px,#c6f1e1 974.2px)"></i>
<i style="top:588px;height:3px;background:linear-gradient(90deg,#dbe8ee -68.4px,#e0d5ec 36.7px,#ebd1f5 261.6px,#ebcff5 395.7px,#f7dcf3 451.1px,#f9d9d9 576.0px,#efeee0 760.1px,#d8eadc 864.4px,#c6f1e1 973.7px)"></i>
<i style="top:591px;height:3px;background:linear-gradient(90deg,#dbe8ee -71.0px,#e0d5ec 34.5px,#ebd1f5 259.0px,#ebcff5 394.4px,#f7dcf3 449.7px,#f9d9d9 575.0px,#efeee0 759.3px,#d8eadc 863.7px,#c6f1e1 973.2px)"></i>
<i style="top:594px;height:3px;background:linear-gradient(90deg,#dbe8ee -73.6px,#e0d5ec 32.3px,#ebd1f5 256.4px,#ebcff5 393.0px,#f7dcf3 448.4px,#f9d9d9 574.0px,#efeee0 758.5px,#d8eadc 863.1px,#c6f1e1 972.6px)"></i>
<i style="top:597px;height:3px;background:linear-gradient(90deg,#dbe8ee -76.3px,#e0d5ec 30.1px,#ebd1f5 253.7px,#ebcff5 391.7px,#f7dcf3 447.0px,#f9d9d9 573.0px,#efeee0 757.7px,#d8eadc 862.4px,#c6f1e1 972.1px)"></i>
<i style="top:600px;height:3px;background:linear-gradient(90deg,#dbe8ee -79.0px,#e0d5ec 27.9px,#ebd1f5 251.0px,#ebcff5 390.3px,#f7dcf3 445.6px,#f9d9d9 572.0px,#efeee0 757.0px,#d8eadc 861.8px,#c6f1e1 971.6px)"></i>
<i style="top:603px;height:3px;background:linear-gradient(90deg,#dbe8ee -81.7px,#e0d5ec 25.6px,#ebd1f5 248.3px,#ebcff5 388.9px,#f7dcf3 444.2px,#f9d9d9 571.0px,#efeee0 756.1px,#d8eadc 861.1px,#c6f1e1 971.0px)"></i>
<i style="top:606px;height:3px;background:linear-gradient(90deg,#dbe8ee -84.4px,#e0d5ec 23.4px,#ebd1f5 245.6px,#ebcff5 387.5px,#f7dcf3 442.8px,#f9d9d9 570.0px,#efeee0 755.3px,#d8eadc 860.4px,#c6f1e1 970.5px)"></i>
<i style="top:609px;height:3px;background:linear-gradient(90deg,#dbe8ee -87.1px,#e0d5ec 21.1px,#ebd1f5 242.9px,#ebcff5 386.1px,#f7dcf3 441.4px,#f9d9d9 569.0px,#efeee0 754.5px,#d8eadc 859.7px,#c6f1e1 969.9px)"></i>
<i style="top:612px;height:3px;background:linear-gradient(90deg,#dbe8ee -89.9px,#e0d5ec 18.8px,#ebd1f5 240.1px,#ebcff5 384.7px,#f7dcf3 439.9px,#f9d9d9 567.9px,#efeee0 753.7px,#d8eadc 859.0px,#c6f1e1 969.4px)"></i>
<i style="top:615px;height:3px;background:linear-gradient(90deg,#dbe8ee -92.7px,#e0d5ec 16.4px,#ebd1f5 237.3px,#ebcff5 383.3px,#f7dcf3 438.5px,#f9d9d9 566.9px,#efeee0 752.9px,#d8eadc 858.3px,#c6f1e1 968.8px)"></i>
<i style="top:618px;height:3px;background:linear-gradient(90deg,#dbe8ee -95.5px,#e0d5ec 14.1px,#ebd1f5 234.5px,#ebcff5 381.9px,#f7dcf3 437.0px,#f9d9d9 565.8px,#efeee0 752.0px,#d8eadc 857.6px,#c6f1e1 968.2px)"></i>
<i style="top:621px;height:3px;background:linear-gradient(90deg,#dbe8ee -98.3px,#e0d5ec 11.8px,#ebd1f5 231.7px,#ebcff5 380.4px,#f7dcf3 435.6px,#f9d9d9 564.7px,#efeee0 751.2px,#d8eadc 856.9px,#c6f1e1 967.7px)"></i>
<i style="top:624px;height:3px;background:linear-gradient(90deg,#dbe8ee -101.1px,#e0d5ec 9.4px,#ebd1f5 228.9px,#ebcff5 379.0px,#f7dcf3 434.1px,#f9d9d9 563.7px,#efeee0 750.4px,#d8eadc 856.2px,#c6f1e1 967.1px)"></i>
<i style="top:627px;height:3px;background:linear-gradient(90deg,#dbe8ee -104.0px,#e0d5ec 7.0px,#ebd1f5 226.0px,#ebcff5 377.5px,#f7dcf3 432.6px,#f9d9d9 562.6px,#efeee0 749.5px,#d8eadc 855.5px,#c6f1e1 966.5px)"></i>
<i style="top:630px;height:3px;background:linear-gradient(90deg,#dbe8ee -106.9px,#e0d5ec 4.6px,#ebd1f5 223.1px,#ebcff5 376.0px,#f7dcf3 431.1px,#f9d9d9 561.5px,#efeee0 748.6px,#d8eadc 854.8px,#c6f1e1 965.9px)"></i>
<i style="top:633px;height:3px;background:linear-gradient(90deg,#dbe8ee -109.8px,#e0d5ec 2.2px,#ebd1f5 220.2px,#ebcff5 374.5px,#f7dcf3 429.6px,#f9d9d9 560.4px,#efeee0 747.8px,#d8eadc 854.0px,#c6f1e1 965.3px)"></i>
<i style="top:636px;height:3px;background:linear-gradient(90deg,#dbe8ee -112.7px,#e0d5ec -0.3px,#ebd1f5 217.3px,#ebcff5 373.0px,#f7dcf3 428.1px,#f9d9d9 559.3px,#efeee0 746.9px,#d8eadc 853.3px,#c6f1e1 964.7px)"></i>
<i style="top:639px;height:3px;background:linear-gradient(90deg,#dbe8ee -115.7px,#e0d5ec -2.7px,#ebd1f5 214.3px,#ebcff5 371.5px,#f7dcf3 426.5px,#f9d9d9 558.2px,#efeee0 746.0px,#d8eadc 852.6px,#c6f1e1 964.1px)"></i>
<i style="top:642px;height:3px;background:linear-gradient(90deg,#dbe8ee -118.6px,#e0d5ec -5.2px,#ebd1f5 211.4px,#ebcff5 370.0px,#f7dcf3 425.0px,#f9d9d9 557.1px,#efeee0 745.1px,#d8eadc 851.8px,#c6f1e1 963.5px)"></i>
<i style="top:645px;height:3px;background:linear-gradient(90deg,#dbe8ee -121.6px,#e0d5ec -7.7px,#ebd1f5 208.4px,#ebcff5 368.5px,#f7dcf3 423.4px,#f9d9d9 556.0px,#efeee0 744.3px,#d8eadc 851.1px,#c6f1e1 962.9px)"></i>
<i style="top:648px;height:3px;background:linear-gradient(90deg,#dbe8ee -124.6px,#e0d5ec -10.2px,#ebd1f5 205.4px,#ebcff5 366.9px,#f7dcf3 421.9px,#f9d9d9 554.8px,#efeee0 743.4px,#d8eadc 850.3px,#c6f1e1 962.3px)"></i>
<i style="top:651px;height:3px;background:linear-gradient(90deg,#dbe8ee -127.7px,#e0d5ec -12.7px,#ebd1f5 202.3px,#ebcff5 365.4px,#f7dcf3 420.3px,#f9d9d9 553.7px,#efeee0 742.5px,#d8eadc 849.6px,#c6f1e1 961.7px)"></i>
<i style="top:654px;height:3px;background:linear-gradient(90deg,#dbe8ee -130.7px,#e0d5ec -15.3px,#ebd1f5 199.3px,#ebcff5 363.8px,#f7dcf3 418.7px,#f9d9d9 552.6px,#efeee0 741.6px,#d8eadc 848.8px,#c6f1e1 961.1px)"></i>
<i style="top:657px;height:3px;background:linear-gradient(90deg,#dbe8ee -133.8px,#e0d5ec -17.8px,#ebd1f5 196.2px,#ebcff5 362.3px,#f7dcf3 417.1px,#f9d9d9 551.4px,#efeee0 740.6px,#d8eadc 848.1px,#c6f1e1 960.5px)"></i>
<i style="top:660px;height:3px;background:linear-gradient(90deg,#dbe8ee -136.9px,#e0d5ec -20.4px,#ebd1f5 193.1px,#ebcff5 360.7px,#f7dcf3 415.5px,#f9d9d9 550.2px,#efeee0 739.7px,#d8eadc 847.3px,#c6f1e1 959.9px)"></i>
<i style="top:663px;height:3px;background:linear-gradient(90deg,#dbe8ee -140.0px,#e0d5ec -23.0px,#ebd1f5 190.0px,#ebcff5 359.1px,#f7dcf3 413.9px,#f9d9d9 549.1px,#efeee0 738.8px,#d8eadc 846.5px,#c6f1e1 959.2px)"></i>
<i style="top:666px;height:3px;background:linear-gradient(90deg,#dbe8ee -143.1px,#e0d5ec -25.6px,#ebd1f5 186.9px,#ebcff5 357.5px,#f7dcf3 412.3px,#f9d9d9 547.9px,#efeee0 737.9px,#d8eadc 845.7px,#c6f1e1 958.6px)"></i>
<i style="top:669px;height:3px;background:linear-gradient(90deg,#dbe8ee -146.2px,#e0d5ec -28.2px,#ebd1f5 183.8px,#ebcff5 355.9px,#f7dcf3 410.7px,#f9d9d9 546.7px,#efeee0 736.9px,#d8eadc 844.9px,#c6f1e1 958.0px)"></i>
<i style="top:672px;height:3px;background:linear-gradient(90deg,#dbe8ee -149.4px,#e0d5ec -30.8px,#ebd1f5 180.6px,#ebcff5 354.3px,#f7dcf3 409.1px,#f9d9d9 545.5px,#efeee0 736.0px,#d8eadc 844.2px,#c6f1e1 957.3px)"></i>
<i style="top:675px;height:3px;background:linear-gradient(90deg,#dbe8ee -152.5px,#e0d5ec -33.5px,#ebd1f5 177.5px,#ebcff5 352.6px,#f7dcf3 407.4px,#f9d9d9 544.3px,#efeee0 735.1px,#d8eadc 843.4px,#c6f1e1 956.7px)"></i>
<i style="top:678px;height:3px;background:linear-gradient(90deg,#dbe8ee -155.7px,#e0d5ec -36.1px,#ebd1f5 174.3px,#ebcff5 351.0px,#f7dcf3 405.7px,#f9d9d9 543.1px,#efeee0 734.1px,#d8eadc 842.6px,#c6f1e1 956.0px)"></i>
<i style="top:681px;height:3px;background:linear-gradient(90deg,#dbe8ee -158.9px,#e0d5ec -38.8px,#ebd1f5 171.1px,#ebcff5 349.4px,#f7dcf3 404.1px,#f9d9d9 541.9px,#efeee0 733.1px,#d8eadc 841.8px,#c6f1e1 955.4px)"></i>
<i style="top:684px;height:3px;background:linear-gradient(90deg,#dbe8ee -162.2px,#e0d5ec -41.5px,#ebd1f5 167.8px,#ebcff5 347.7px,#f7dcf3 402.4px,#f9d9d9 540.7px,#efeee0 732.2px,#d8eadc 841.0px,#c6f1e1 954.7px)"></i>
<i style="top:687px;height:3px;background:linear-gradient(90deg,#dbe8ee -165.4px,#e0d5ec -44.2px,#ebd1f5 164.6px,#ebcff5 346.1px,#f7dcf3 400.7px,#f9d9d9 539.5px,#efeee0 731.2px,#d8eadc 840.1px,#c6f1e1 954.1px)"></i>
<i style="top:690px;height:3px;background:linear-gradient(90deg,#dbe8ee -168.7px,#e0d5ec -46.9px,#ebd1f5 161.3px,#ebcff5 344.4px,#f7dcf3 399.0px,#f9d9d9 538.3px,#efeee0 730.2px,#d8eadc 839.3px,#c6f1e1 953.4px)"></i>
<i style="top:693px;height:3px;background:linear-gradient(90deg,#dbe8ee -172.0px,#e0d5ec -49.6px,#ebd1f5 158.0px,#ebcff5 342.7px,#f7dcf3 397.3px,#f9d9d9 537.0px,#efeee0 729.3px,#d8eadc 838.5px,#c6f1e1 952.7px)"></i>
<i style="top:696px;height:3px;background:linear-gradient(90deg,#dbe8ee -175.3px,#e0d5ec -52.4px,#ebd1f5 154.7px,#ebcff5 341.0px,#f7dcf3 395.6px,#f9d9d9 535.8px,#efeee0 728.3px,#d8eadc 837.7px,#c6f1e1 952.1px)"></i>
<i style="top:699px;height:3px;background:linear-gradient(90deg,#dbe8ee -178.6px,#e0d5ec -55.2px,#ebd1f5 151.4px,#ebcff5 339.3px,#f7dcf3 393.9px,#f9d9d9 534.5px,#efeee0 727.3px,#d8eadc 836.9px,#c6f1e1 951.4px)"></i>
<i style="top:702px;height:3px;background:linear-gradient(90deg,#dbe8ee -181.9px,#e0d5ec -57.9px,#ebd1f5 148.1px,#ebcff5 337.6px,#f7dcf3 392.2px,#f9d9d9 533.3px,#efeee0 726.3px,#d8eadc 836.0px,#c6f1e1 950.7px)"></i>
<i style="top:705px;height:3px;background:linear-gradient(90deg,#dbe8ee -185.3px,#e0d5ec -60.7px,#ebd1f5 144.7px,#ebcff5 335.9px,#f7dcf3 390.4px,#f9d9d9 532.0px,#efeee0 725.3px,#d8eadc 835.2px,#c6f1e1 950.1px)"></i>
<i style="top:708px;height:3px;background:linear-gradient(90deg,#dbe8ee -188.6px,#e0d5ec -63.5px,#ebd1f5 141.4px,#ebcff5 334.2px,#f7dcf3 388.7px,#f9d9d9 530.8px,#efeee0 724.3px,#d8eadc 834.3px,#c6f1e1 949.4px)"></i>
<i style="top:711px;height:3px;background:linear-gradient(90deg,#dbe8ee -192.0px,#e0d5ec -66.3px,#ebd1f5 138.0px,#ebcff5 332.4px,#f7dcf3 386.9px,#f9d9d9 529.5px,#efeee0 723.3px,#d8eadc 833.5px,#c6f1e1 948.7px)"></i>
<i style="top:714px;height:3px;background:linear-gradient(90deg,#dbe8ee -195.4px,#e0d5ec -69.2px,#ebd1f5 134.6px,#ebcff5 330.7px,#f7dcf3 385.2px,#f9d9d9 528.2px,#efeee0 722.3px,#d8eadc 832.6px,#c6f1e1 948.0px)"></i>
<i style="top:717px;height:3px;background:linear-gradient(90deg,#dbe8ee -198.8px,#e0d5ec -72.0px,#ebd1f5 131.2px,#ebcff5 329.0px,#f7dcf3 383.4px,#f9d9d9 526.9px,#efeee0 721.3px,#d8eadc 831.8px,#c6f1e1 947.3px)"></i>
<i style="top:720px;height:3px;background:linear-gradient(90deg,#dbe8ee -202.3px,#e0d5ec -74.9px,#ebd1f5 127.7px,#ebcff5 327.2px,#f7dcf3 381.6px,#f9d9d9 525.6px,#efeee0 720.3px,#d8eadc 830.9px,#c6f1e1 946.6px)"></i>
<i style="top:723px;height:3px;background:linear-gradient(90deg,#dbe8ee -205.7px,#e0d5ec -77.8px,#ebd1f5 124.3px,#ebcff5 325.4px,#f7dcf3 379.8px,#f9d9d9 524.3px,#efeee0 719.2px,#d8eadc 830.1px,#c6f1e1 945.9px)"></i>
<i style="top:726px;height:3px;background:linear-gradient(90deg,#dbe8ee -209.2px,#e0d5ec -80.6px,#ebd1f5 120.8px,#ebcff5 323.7px,#f7dcf3 378.0px,#f9d9d9 523.0px,#efeee0 718.2px,#d8eadc 829.2px,#c6f1e1 945.2px)"></i>
<i style="top:729px;height:3px;background:linear-gradient(90deg,#dbe8ee -212.7px,#e0d5ec -83.5px,#ebd1f5 117.3px,#ebcff5 321.9px,#f7dcf3 376.2px,#f9d9d9 521.7px,#efeee0 717.2px,#d8eadc 828.3px,#c6f1e1 944.5px)"></i>
<i style="top:732px;height:3px;background:linear-gradient(90deg,#dbe8ee -216.2px,#e0d5ec -86.5px,#ebd1f5 113.8px,#ebcff5 320.1px,#f7dcf3 374.4px,#f9d9d9 520.4px,#efeee0 716.1px,#d8eadc 827.5px,#c6f1e1 943.8px)"></i>
<i style="top:735px;height:3px;background:linear-gradient(90deg,#dbe8ee -219.7px,#e0d5ec -89.4px,#ebd1f5 110.3px,#ebcff5 318.3px,#f7dcf3 372.6px,#f9d9d9 519.1px,#efeee0 715.1px,#d8eadc 826.6px,#c6f1e1 943.1px)"></i>
<i style="top:738px;height:3px;background:linear-gradient(90deg,#dbe8ee -223.2px,#e0d5ec -92.3px,#ebd1f5 106.8px,#ebcff5 316.5px,#f7dcf3 370.7px,#f9d9d9 517.8px,#efeee0 714.0px,#d8eadc 825.7px,#c6f1e1 942.4px)"></i>
<i style="top:741px;height:3px;background:linear-gradient(90deg,#dbe8ee -226.7px,#e0d5ec -95.3px,#ebd1f5 103.3px,#ebcff5 314.7px,#f7dcf3 368.9px,#f9d9d9 516.4px,#efeee0 713.0px,#d8eadc 824.8px,#c6f1e1 941.7px)"></i>
<i style="top:744px;height:3px;background:linear-gradient(90deg,#dbe8ee -230.3px,#e0d5ec -98.3px,#ebd1f5 99.7px,#ebcff5 312.8px,#f7dcf3 367.0px,#f9d9d9 515.1px,#efeee0 711.9px,#d8eadc 823.9px,#c6f1e1 940.9px)"></i>
<i style="top:747px;height:3px;background:linear-gradient(90deg,#dbe8ee -233.9px,#e0d5ec -101.2px,#ebd1f5 96.1px,#ebcff5 311.0px,#f7dcf3 365.2px,#f9d9d9 513.7px,#efeee0 710.8px,#d8eadc 823.0px,#c6f1e1 940.2px)"></i>
<i style="top:750px;height:3px;background:linear-gradient(90deg,#dbe8ee -237.5px,#e0d5ec -104.2px,#ebd1f5 92.5px,#ebcff5 309.2px,#f7dcf3 363.3px,#f9d9d9 512.4px,#efeee0 709.8px,#d8eadc 822.1px,#c6f1e1 939.5px)"></i>
<i style="top:753px;height:3px;background:linear-gradient(90deg,#dbe8ee -241.1px,#e0d5ec -107.2px,#ebd1f5 88.9px,#ebcff5 307.3px,#f7dcf3 361.4px,#f9d9d9 511.0px,#efeee0 708.7px,#d8eadc 821.2px,#c6f1e1 938.8px)"></i>
<i style="top:756px;height:3px;background:linear-gradient(90deg,#dbe8ee -244.7px,#e0d5ec -110.3px,#ebd1f5 85.3px,#ebcff5 305.5px,#f7dcf3 359.6px,#f9d9d9 509.7px,#efeee0 707.6px,#d8eadc 820.3px,#c6f1e1 938.0px)"></i>
<i style="top:759px;height:3px;background:linear-gradient(90deg,#dbe8ee -248.3px,#e0d5ec -113.3px,#ebd1f5 81.7px,#ebcff5 303.6px,#f7dcf3 357.7px,#f9d9d9 508.3px,#efeee0 706.5px,#d8eadc 819.4px,#c6f1e1 937.3px)"></i>
<i style="top:762px;height:3px;background:linear-gradient(90deg,#dbe8ee -252.0px,#e0d5ec -116.3px,#ebd1f5 78.0px,#ebcff5 301.7px,#f7dcf3 355.8px,#f9d9d9 506.9px,#efeee0 705.5px,#d8eadc 818.5px,#c6f1e1 936.5px)"></i>
<i style="top:765px;height:3px;background:linear-gradient(90deg,#dbe8ee -255.7px,#e0d5ec -119.4px,#ebd1f5 74.3px,#ebcff5 299.9px,#f7dcf3 353.9px,#f9d9d9 505.5px,#efeee0 704.4px,#d8eadc 817.6px,#c6f1e1 935.8px)"></i>
<i style="top:768px;height:3px;background:linear-gradient(90deg,#dbe8ee -259.4px,#e0d5ec -122.5px,#ebd1f5 70.6px,#ebcff5 298.0px,#f7dcf3 352.0px,#f9d9d9 504.2px,#efeee0 703.3px,#d8eadc 816.7px,#c6f1e1 935.1px)"></i>
<i style="top:771px;height:3px;background:linear-gradient(90deg,#dbe8ee -263.1px,#e0d5ec -125.5px,#ebd1f5 66.9px,#ebcff5 296.1px,#f7dcf3 350.0px,#f9d9d9 502.8px,#efeee0 702.2px,#d8eadc 815.7px,#c6f1e1 934.3px)"></i>
<i style="top:774px;height:3px;background:linear-gradient(90deg,#dbe8ee -266.8px,#e0d5ec -128.6px,#ebd1f5 63.2px,#ebcff5 294.2px,#f7dcf3 348.1px,#f9d9d9 501.4px,#efeee0 701.1px,#d8eadc 814.8px,#c6f1e1 933.6px)"></i>
<i style="top:777px;height:3px;background:linear-gradient(90deg,#dbe8ee -270.5px,#e0d5ec -131.7px,#ebd1f5 59.5px,#ebcff5 292.3px,#f7dcf3 346.2px,#f9d9d9 500.0px,#efeee0 699.9px,#d8eadc 813.9px,#c6f1e1 932.8px)"></i>
<i style="top:780px;height:3px;background:linear-gradient(90deg,#dbe8ee -274.2px,#e0d5ec -134.9px,#ebd1f5 55.8px,#ebcff5 290.4px,#f7dcf3 344.2px,#f9d9d9 498.6px,#efeee0 698.8px,#d8eadc 812.9px,#c6f1e1 932.0px)"></i>
<i style="top:783px;height:3px;background:linear-gradient(90deg,#dbe8ee -278.0px,#e0d5ec -138.0px,#ebd1f5 52.0px,#ebcff5 288.4px,#f7dcf3 342.3px,#f9d9d9 497.1px,#efeee0 697.7px,#d8eadc 812.0px,#c6f1e1 931.3px)"></i>
<i style="top:786px;height:3px;background:linear-gradient(90deg,#dbe8ee -281.8px,#e0d5ec -141.1px,#ebd1f5 48.2px,#ebcff5 286.5px,#f7dcf3 340.3px,#f9d9d9 495.7px,#efeee0 696.6px,#d8eadc 811.1px,#c6f1e1 930.5px)"></i>
<i style="top:789px;height:3px;background:linear-gradient(90deg,#dbe8ee -285.6px,#e0d5ec -144.3px,#ebd1f5 44.4px,#ebcff5 284.6px,#f7dcf3 338.4px,#f9d9d9 494.3px,#efeee0 695.5px,#d8eadc 810.1px,#c6f1e1 929.8px)"></i>
<i style="top:792px;height:3px;background:linear-gradient(90deg,#dbe8ee -289.4px,#e0d5ec -147.5px,#ebd1f5 40.6px,#ebcff5 282.6px,#f7dcf3 336.4px,#f9d9d9 492.9px,#efeee0 694.3px,#d8eadc 809.2px,#c6f1e1 929.0px)"></i>
<i style="top:795px;height:3px;background:linear-gradient(90deg,#dbe8ee -293.2px,#e0d5ec -150.7px,#ebd1f5 36.8px,#ebcff5 280.7px,#f7dcf3 334.4px,#f9d9d9 491.4px,#efeee0 693.2px,#d8eadc 808.2px,#c6f1e1 928.2px)"></i>
<i style="top:798px;height:3px;background:linear-gradient(90deg,#dbe8ee -297.0px,#e0d5ec -153.8px,#ebd1f5 33.0px,#ebcff5 278.7px,#f7dcf3 332.4px,#f9d9d9 490.0px,#efeee0 692.1px,#d8eadc 807.2px,#c6f1e1 927.4px)"></i>
<i style="top:801px;height:3px;background:linear-gradient(90deg,#dbe8ee -300.9px,#e0d5ec -157.0px,#ebd1f5 29.1px,#ebcff5 276.7px,#f7dcf3 330.4px,#f9d9d9 488.5px,#efeee0 690.9px,#d8eadc 806.3px,#c6f1e1 926.7px)"></i>
<i style="top:804px;height:3px;background:linear-gradient(90deg,#dbe8ee -304.7px,#e0d5ec -160.3px,#ebd1f5 25.3px,#ebcff5 274.8px,#f7dcf3 328.4px,#f9d9d9 487.1px,#efeee0 689.8px,#d8eadc 805.3px,#c6f1e1 925.9px)"></i>
<i style="top:807px;height:3px;background:linear-gradient(90deg,#dbe8ee -308.6px,#e0d5ec -163.5px,#ebd1f5 21.4px,#ebcff5 272.8px,#f7dcf3 326.4px,#f9d9d9 485.6px,#efeee0 688.6px,#d8eadc 804.4px,#c6f1e1 925.1px)"></i>
<i style="top:810px;height:3px;background:linear-gradient(90deg,#dbe8ee -312.5px,#e0d5ec -166.7px,#ebd1f5 17.5px,#ebcff5 270.8px,#f7dcf3 324.4px,#f9d9d9 484.2px,#efeee0 687.5px,#d8eadc 803.4px,#c6f1e1 924.3px)"></i>
<i style="top:813px;height:3px;background:linear-gradient(90deg,#dbe8ee -316.4px,#e0d5ec -170.0px,#ebd1f5 13.6px,#ebcff5 268.8px,#f7dcf3 322.4px,#f9d9d9 482.7px,#efeee0 686.3px,#d8eadc 802.4px,#c6f1e1 923.5px)"></i>
<i style="top:816px;height:3px;background:linear-gradient(90deg,#dbe8ee -320.3px,#e0d5ec -173.3px,#ebd1f5 9.7px,#ebcff5 266.8px,#f7dcf3 320.3px,#f9d9d9 481.2px,#efeee0 685.1px,#d8eadc 801.4px,#c6f1e1 922.7px)"></i>
<i style="top:819px;height:3px;background:linear-gradient(90deg,#dbe8ee -324.2px,#e0d5ec -176.5px,#ebd1f5 5.8px,#ebcff5 264.8px,#f7dcf3 318.3px,#f9d9d9 479.8px,#efeee0 684.0px,#d8eadc 800.4px,#c6f1e1 921.9px)"></i>
<i style="top:822px;height:3px;background:linear-gradient(90deg,#dbe8ee -328.2px,#e0d5ec -179.8px,#ebd1f5 1.8px,#ebcff5 262.7px,#f7dcf3 316.2px,#f9d9d9 478.3px,#efeee0 682.8px,#d8eadc 799.5px,#c6f1e1 921.1px)"></i>
<i style="top:825px;height:3px;background:linear-gradient(90deg,#dbe8ee -332.1px,#e0d5ec -183.1px,#ebd1f5 -2.1px,#ebcff5 260.7px,#f7dcf3 314.2px,#f9d9d9 476.8px,#efeee0 681.6px,#d8eadc 798.5px,#c6f1e1 920.3px)"></i>
<i style="top:828px;height:3px;background:linear-gradient(90deg,#dbe8ee -336.1px,#e0d5ec -186.4px,#ebd1f5 -6.1px,#ebcff5 258.7px,#f7dcf3 312.1px,#f9d9d9 475.3px,#efeee0 680.4px,#d8eadc 797.5px,#c6f1e1 919.5px)"></i>
<i style="top:831px;height:3px;background:linear-gradient(90deg,#dbe8ee -340.1px,#e0d5ec -189.7px,#ebd1f5 -10.1px,#ebcff5 256.6px,#f7dcf3 310.1px,#f9d9d9 473.8px,#efeee0 679.2px,#d8eadc 796.5px,#c6f1e1 918.7px)"></i>
<i style="top:834px;height:3px;background:linear-gradient(90deg,#dbe8ee -344.1px,#e0d5ec -193.1px,#ebd1f5 -14.1px,#ebcff5 254.6px,#f7dcf3 308.0px,#f9d9d9 472.3px,#efeee0 678.0px,#d8eadc 795.5px,#c6f1e1 917.9px)"></i>
<i style="top:837px;height:3px;background:linear-gradient(90deg,#dbe8ee -348.1px,#e0d5ec -196.4px,#ebd1f5 -18.1px,#ebcff5 252.5px,#f7dcf3 305.9px,#f9d9d9 470.8px,#efeee0 676.8px,#d8eadc 794.5px,#c6f1e1 917.1px)"></i>
<i style="top:840px;height:3px;background:linear-gradient(90deg,#dbe8ee -352.1px,#e0d5ec -199.8px,#ebd1f5 -22.1px,#ebcff5 250.5px,#f7dcf3 303.8px,#f9d9d9 469.3px,#efeee0 675.7px,#d8eadc 793.5px,#c6f1e1 916.3px)"></i>
<i style="top:843px;height:3px;background:linear-gradient(90deg,#dbe8ee -356.2px,#e0d5ec -203.1px,#ebd1f5 -26.2px,#ebcff5 248.4px,#f7dcf3 301.7px,#f9d9d9 467.7px,#efeee0 674.4px,#d8eadc 792.5px,#c6f1e1 915.5px)"></i>
<i style="top:846px;height:3px;background:linear-gradient(90deg,#dbe8ee -360.2px,#e0d5ec -206.5px,#ebd1f5 -30.2px,#ebcff5 246.3px,#f7dcf3 299.6px,#f9d9d9 466.2px,#efeee0 673.2px,#d8eadc 791.4px,#c6f1e1 914.6px)"></i>
<i style="top:849px;height:3px;background:linear-gradient(90deg,#dbe8ee -364.3px,#e0d5ec -209.9px,#ebd1f5 -34.3px,#ebcff5 244.3px,#f7dcf3 297.5px,#f9d9d9 464.7px,#efeee0 672.0px,#d8eadc 790.4px,#c6f1e1 913.8px)"></i>
<i style="top:852px;height:3px;background:linear-gradient(90deg,#dbe8ee -368.4px,#e0d5ec -213.3px,#ebd1f5 -38.4px,#ebcff5 242.2px,#f7dcf3 295.4px,#f9d9d9 463.1px,#efeee0 670.8px,#d8eadc 789.4px,#c6f1e1 913.0px)"></i>
<i style="top:855px;height:3px;background:linear-gradient(90deg,#dbe8ee -372.5px,#e0d5ec -216.7px,#ebd1f5 -42.5px,#ebcff5 240.1px,#f7dcf3 293.3px,#f9d9d9 461.6px,#efeee0 669.6px,#d8eadc 788.4px,#c6f1e1 912.2px)"></i>
<i style="top:858px;height:3px;background:linear-gradient(90deg,#dbe8ee -376.6px,#e0d5ec -220.1px,#ebd1f5 -46.6px,#ebcff5 238.0px,#f7dcf3 291.1px,#f9d9d9 460.1px,#efeee0 668.4px,#d8eadc 787.4px,#c6f1e1 911.3px)"></i>
<i style="top:861px;height:3px;background:linear-gradient(90deg,#dbe8ee -380.7px,#e0d5ec -223.6px,#ebd1f5 -50.7px,#ebcff5 235.9px,#f7dcf3 289.0px,#f9d9d9 458.5px,#efeee0 667.2px,#d8eadc 786.3px,#c6f1e1 910.5px)"></i>
<i style="top:864px;height:3px;background:linear-gradient(90deg,#dbe8ee -384.8px,#e0d5ec -227.0px,#ebd1f5 -54.8px,#ebcff5 233.7px,#f7dcf3 286.8px,#f9d9d9 457.0px,#efeee0 665.9px,#d8eadc 785.3px,#c6f1e1 909.7px)"></i>
<i style="top:867px;height:3px;background:linear-gradient(90deg,#dbe8ee -389.0px,#e0d5ec -230.5px,#ebd1f5 -59.0px,#ebcff5 231.6px,#f7dcf3 284.7px,#f9d9d9 455.4px,#efeee0 664.7px,#d8eadc 784.3px,#c6f1e1 908.8px)"></i>
<i style="top:870px;height:3px;background:linear-gradient(90deg,#dbe8ee -393.1px,#e0d5ec -233.9px,#ebd1f5 -63.1px,#ebcff5 229.5px,#f7dcf3 282.5px,#f9d9d9 453.8px,#efeee0 663.4px,#d8eadc 783.2px,#c6f1e1 908.0px)"></i>
<i style="top:873px;height:2px;background:linear-gradient(90deg,#dbe8ee -396.6px,#e0d5ec -236.8px,#ebd1f5 -66.6px,#ebcff5 227.7px,#f7dcf3 280.7px,#f9d9d9 452.5px,#efeee0 662.4px,#d8eadc 782.3px,#c6f1e1 907.3px)"></i>
</div>
<!-- ===== ring artwork + red marquee (screen coords) ===== -->
<svg class="a" id="art" style="left:498px;top:133px" width="975" height="875" viewBox="498 133 975 875">
<defs>
  <clipPath id="cvclip"><rect x="498" y="133" width="975" height="875"/></clipPath>
  <path id="ringp" fill-rule="evenodd" d="M986.0 316.3a253.5 253.5 0 1 0 0 507.0a253.5 253.5 0 1 0 0-507.0zM986.0 374.6a195.2 195.2 0 1 1 0 390.4a195.2 195.2 0 1 1 0-390.4z"/>
  <clipPath id="ringclip"><use href="#ringp" clip-rule="evenodd"/></clipPath>
  <radialGradient id="band" gradientUnits="userSpaceOnUse" cx="986.0" cy="569.8" r="253.5">
    <stop offset="0.7700" stop-color="#a69c14"/>
    <stop offset="0.7858" stop-color="#c8bc18"/>
    <stop offset="0.8095" stop-color="#decb1c"/>
    <stop offset="0.8489" stop-color="#e6d21f"/>
    <stop offset="0.8884" stop-color="#e7d31f"/>
    <stop offset="0.9369" stop-color="#e5d11e"/>
    <stop offset="0.9684" stop-color="#d8c81a"/>
    <stop offset="0.9882" stop-color="#b8ac16"/>
    <stop offset="1" stop-color="#9c9610"/>
  </radialGradient>
  <linearGradient id="fadeTop" gradientUnits="userSpaceOnUse" x1="0" y1="316.3" x2="0" y2="823.3">
    <stop offset="0" stop-color="#fff" stop-opacity="1"/>
    <stop offset="0.14" stop-color="#fff" stop-opacity=".95"/>
    <stop offset="0.30" stop-color="#fff" stop-opacity=".55"/>
    <stop offset="0.44" stop-color="#fff" stop-opacity="0"/>
    <stop offset="1" stop-color="#fff" stop-opacity="0"/>
  </linearGradient>
  <linearGradient id="fadeBot" gradientUnits="userSpaceOnUse" x1="0" y1="316.3" x2="0" y2="823.3">
    <stop offset="0" stop-color="#fff" stop-opacity="0"/>
    <stop offset="0.56" stop-color="#fff" stop-opacity="0"/>
    <stop offset="0.70" stop-color="#fff" stop-opacity=".55"/>
    <stop offset="0.86" stop-color="#fff" stop-opacity=".95"/>
    <stop offset="1" stop-color="#fff" stop-opacity="1"/>
  </linearGradient>
  <linearGradient id="fadeSide" gradientUnits="userSpaceOnUse" x1="732.5" y1="0" x2="1239.5" y2="0">
    <stop offset="0" stop-color="#fff" stop-opacity="1"/>
    <stop offset="0.12" stop-color="#fff" stop-opacity=".85"/>
    <stop offset="0.36" stop-color="#fff" stop-opacity="0"/>
    <stop offset="0.64" stop-color="#fff" stop-opacity="0"/>
    <stop offset="0.88" stop-color="#fff" stop-opacity=".85"/>
    <stop offset="1" stop-color="#fff" stop-opacity="1"/>
  </linearGradient>
  <mask id="mSide" maskUnits="userSpaceOnUse" x="700" y="280" width="580" height="600"><rect x="700" y="280" width="580" height="600" fill="url(#fadeSide)"/></mask>
  <mask id="mTop" maskUnits="userSpaceOnUse" x="700" y="280" width="580" height="600"><rect x="700" y="280" width="580" height="600" fill="url(#fadeTop)"/></mask>
  <mask id="mBot" maskUnits="userSpaceOnUse" x="700" y="280" width="580" height="600"><rect x="700" y="280" width="580" height="600" fill="url(#fadeBot)"/></mask>
  <filter id="b1" x="-20%" y="-20%" width="140%" height="140%"><feGaussianBlur stdDeviation="1.300"/></filter>
  <filter id="b2" x="-20%" y="-20%" width="140%" height="140%"><feGaussianBlur stdDeviation="2"/></filter>
  <filter id="b3" x="-20%" y="-20%" width="140%" height="140%"><feGaussianBlur stdDeviation="3.200"/></filter>
  <filter id="b5" x="-20%" y="-20%" width="140%" height="140%"><feGaussianBlur stdDeviation="5"/></filter>
  <filter id="b7" x="-20%" y="-20%" width="140%" height="140%"><feGaussianBlur stdDeviation="7"/></filter>
  <filter id="b9" x="-20%" y="-20%" width="140%" height="140%"><feGaussianBlur stdDeviation="9"/></filter>
  <filter id="b12" x="-20%" y="-20%" width="140%" height="140%"><feGaussianBlur stdDeviation="12"/></filter>
</defs>
<g clip-path="url(#cvclip)">
  <!-- drop shadow -->
  <g transform="translate(0,35)" opacity=".46" filter="url(#b12)"><use href="#ringp" fill="#8a8458"/></g>
  <g transform="translate(0,26)" opacity=".68" filter="url(#b7)"><use href="#ringp" fill="#9a9832"/></g>
  <!-- outer glow (whitish, above shadow) -->
  <use href="#ringp" fill="none" stroke="#fff8d6" stroke-width="17" opacity=".6" filter="url(#b5)"/>
  <!-- ring base -->
  <use href="#ringp" fill="url(#band)"/>
  <g clip-path="url(#ringclip)">
    <!-- orange warm tint on lower side of the band -->
    <g mask="url(#mTop)"><circle cx="986.0" cy="569.8" r="207.2" fill="none" stroke="#efbd1e" stroke-width="17" opacity=".85" filter="url(#b5)"/></g>
    <g mask="url(#mBot)"><circle cx="986.0" cy="569.8" r="239.5" fill="none" stroke="#eec01e" stroke-width="17" opacity=".8" filter="url(#b5)"/></g>
    <!-- side warm patches -->
    <ellipse cx="764" cy="664" rx="14" ry="62" transform="rotate(-24 764 664)" fill="#efb81c" opacity=".6" filter="url(#b7)"/>
    <ellipse cx="1211" cy="639" rx="12" ry="55" transform="rotate(18 1211 639)" fill="#efb81c" opacity=".5" filter="url(#b7)"/>
    <ellipse cx="1201" cy="431" rx="11" ry="45" transform="rotate(-28 1201 431)" fill="#efba1c" opacity=".4" filter="url(#b7)"/>
    <!-- green tint just below highlights -->
    <g mask="url(#mTop)"><circle cx="986.0" cy="569.8" r="228.5" fill="none" stroke="#b9c018" stroke-width="14" opacity=".85" filter="url(#b5)"/></g>
    <g mask="url(#mBot)"><circle cx="986.0" cy="569.8" r="220.2" fill="none" stroke="#b8c016" stroke-width="14" opacity=".85" filter="url(#b5)"/></g>
    <!-- mustard rims on the lower-side edges -->
    <g mask="url(#mTop)"><circle cx="986.0" cy="569.8" r="195.2" fill="none" stroke="#a4960f" stroke-width="9" opacity=".85" filter="url(#b2)"/></g>
    <g mask="url(#mBot)"><circle cx="986.0" cy="569.8" r="253.5" fill="none" stroke="#a4960f" stroke-width="10" opacity=".85" filter="url(#b2)"/></g>
    <!-- side edge darkening (both edges, strongest at left/right) -->
    <g mask="url(#mSide)">
      <circle cx="986.0" cy="569.8" r="253.5" fill="none" stroke="#7c900c" stroke-width="17" opacity=".85" filter="url(#b3)"/>
      <circle cx="986.0" cy="569.8" r="195.2" fill="none" stroke="#7c900c" stroke-width="15" opacity=".85" filter="url(#b3)"/>
    </g>
    <!-- dark upper edges (inner shadow from above) -->
    <g mask="url(#mTop)"><circle cx="986.0" cy="569.8" r="253.5" fill="none" stroke="#70880a" stroke-width="18" opacity=".95" filter="url(#b2)"/></g>
    <g mask="url(#mBot)"><circle cx="986.0" cy="569.8" r="195.2" fill="none" stroke="#70880a" stroke-width="18" opacity=".95" filter="url(#b2)"/></g>
    <!-- pale highlights -->
    <g mask="url(#mTop)"><circle cx="986.0" cy="569.8" r="240.2" fill="none" stroke="#f1f4d6" stroke-width="9.500" opacity=".97" filter="url(#b2)"/></g>
    <g mask="url(#mBot)"><circle cx="986.0" cy="569.8" r="208.2" fill="none" stroke="#f2f5d8" stroke-width="9.500" opacity=".97" filter="url(#b2)"/></g>
  </g>
  <!-- red marquee -->
  <rect x="590.3" y="207.4" width="719.3" height="670.1" rx="3.5" ry="3.5" fill="none" stroke="#ff1a0e" stroke-width="4"/>
</g>
</svg>
<!-- ===== menu bar ===== -->
<div class="a" style="left:7px;top:6px;width:18px;height:17px;border-radius:4px;background:#001d34"></div>
<div class="tx" style="left:10px;top:5px;font-size:10px;font-weight:bold;color:#31a8ff;letter-spacing:-.3px">Ps</div>
<style>
.mn{position:absolute;top:5px;height:20px;line-height:20px;font-size:15px;color:#e6e6e6;white-space:nowrap;letter-spacing:-.6px}
</style>
<div class="mn" style="left:43px">文件(F)</div>
<div class="mn" style="left:104px">编辑(E)</div>
<div class="mn" style="left:166px">图像(I)</div>
<div class="mn" style="left:223px">图层(L)</div>
<div class="mn" style="left:284px">文字(Y)</div>
<div class="mn" style="left:347px">选择(S)</div>
<div class="mn" style="left:409px">滤镜(T)</div>
<div class="mn" style="left:472px">3D(D)</div>
<div class="mn" style="left:526px">视图(V)</div>
<div class="mn" style="left:590px">窗口(W)</div>
<div class="mn" style="left:657px">帮助(H)</div>
<!-- window buttons -->
<div class="a" style="left:1787px;top:-6px;width:130px;height:30px;border:1px solid #5f5f5f;border-radius:6px"></div>
<div class="a" style="left:1823px;top:0;width:1px;height:23px;background:#5f5f5f"></div>
<div class="a" style="left:1857px;top:0;width:1px;height:23px;background:#5f5f5f"></div>
<div class="a" style="left:1799px;top:13px;width:13px;height:4px;background:#bcbcbc"></div>
<svg style="left:1832px;top:5px" width="18" height="15" viewBox="0 0 18 15"><path d="M7 1.500h9.500v8H12" fill="none" stroke="#bcbcbc" stroke-width="3"/><rect x="1.500" y="6.500" width="9" height="7" fill="#535353" stroke="#bcbcbc" stroke-width="3"/></svg>
<svg style="left:1881px;top:7px" width="13" height="11" viewBox="0 0 13 11"><path d="M0 0h3.600L6.500 3.400L9.400 0H13L8.400 5.200L13 10.500H9.400L6.500 7L3.600 10.500H0L4.600 5.200z" fill="#bcbcbc"/></svg>

<!-- ===== options bar ===== -->
<!-- grip -->
<div class="a" style="left:6px;top:40px;width:2px;height:26px;background:repeating-linear-gradient(180deg,#3f3f3f 0 1px,transparent 1px 3px)"></div>
<!-- home -->
<svg style="left:25px;top:45px" width="21" height="19" viewBox="0 0 21 19"><path d="M10.500 0L0 9.200h3.200V19h5.300v-6.300h4V19h5.300V9.200H21z" fill="#e0e0e0"/></svg>
<div class="sep" style="left:66px;top:38px;height:31px"></div>
<!-- ellipse tool preset -->
<svg style="left:76px;top:43px" width="21" height="19" viewBox="0 0 21 19"><ellipse cx="10.5" cy="9.5" rx="9.3" ry="8.200" fill="#6e6e6e" stroke="#d6d6d6" stroke-width="1.500"/></svg>
<svg style="left:109px;top:52px" width="9" height="6" viewBox="0 0 9 6"><path d="M.8.8l3.700 3.700L8.200.8" fill="none" stroke="#bdbdbd" stroke-width="1.300"/></svg>
<div class="sep" style="left:128px;top:38px;height:31px"></div>
<!-- shape dropdown -->
<div class="dd" style="left:138px;top:42px;width:86px;height:21px"></div>
<div class="tx" style="left:148px;top:41px;font-size:15px;color:#e4e4e4">形状</div>
<svg style="left:211px;top:51px" width="9" height="6" viewBox="0 0 9 6"><path d="M.8.8l3.700 3.700L8.200.8" fill="none" stroke="#cfcfcf" stroke-width="1.300"/></svg>
<div class="sep" style="left:229px;top:38px;height:31px"></div>
<div class="tx" style="left:238px;top:43px;font-size:15px;letter-spacing:1.200px">填充:</div>
<div class="a" style="left:278px;top:41px;width:37px;height:25px;border:1px solid #6a6a6a;background:#535353"></div>
<div class="a" style="left:281px;top:44px;width:31px;height:19px;background:#e87ed0"></div>
<div class="tx" style="left:322px;top:43px;font-size:15px;letter-spacing:1.200px">描边:</div>
<div class="a" style="left:363px;top:41px;width:37px;height:25px;border:1px solid #6a6a6a;background:#535353"></div>
<div class="a" style="left:366px;top:44px;width:31px;height:19px;background:#fff"></div>
<svg style="left:366px;top:44px" width="31" height="19" viewBox="0 0 31 19"><path d="M6 16.500L25 2.500" stroke="#e0201c" stroke-width="1.800"/><rect x="7" y="7.500" width="17" height="4.500" fill="#3c3c3c" stroke="#fff" stroke-width="1"/></svg>
<!-- 40 px field -->
<div class="dd" style="left:407px;top:43px;width:99px;height:22px"></div>
<div class="a" style="left:487px;top:44px;width:1px;height:20px;background:#626262"></div>
<div class="tx" style="left:410px;top:42px;font-size:14px;color:#e8e8e8"><span style="font-size:13px">40</span> <span style="font-size:15px;letter-spacing:.5px">像素</span></div>
<svg style="left:493px;top:52px" width="9" height="6" viewBox="0 0 9 6"><path d="M.8.8l3.700 3.700L8.200.8" fill="none" stroke="#cfcfcf" stroke-width="1.300"/></svg>
<!-- line style dropdown -->
<div class="dd" style="left:515px;top:43px;width:59px;height:22px"></div>
<div class="a" style="left:519px;top:52px;width:36px;height:3px;background:#f0f0f0"></div>
<svg style="left:561px;top:51px" width="9" height="6" viewBox="0 0 9 6"><path d="M.8.8l3.700 3.700L8.200.8" fill="none" stroke="#cfcfcf" stroke-width="1.300"/></svg>
<div class="sep" style="left:580px;top:38px;height:31px"></div>
<div class="tx" style="left:585px;top:42px;font-size:15px;color:#d4d8dc">W:</div>
<div class="fld" style="left:610px;top:40px;width:51px;height:26px;border-radius:1px"></div>
<div class="tx" style="left:615px;top:42px;font-size:14px;color:#e8e8e8"><span style="font-size:13px">0</span> <span style="font-size:15px;letter-spacing:.3px">像素</span></div>
<svg style="left:674px;top:48px" width="19" height="11" viewBox="0 0 19 11"><rect x="1" y="1.500" width="9.500" height="8" rx="4" fill="none" stroke="#d0d0d0" stroke-width="1.800"/><rect x="8.500" y="1.500" width="9.500" height="8" rx="4" fill="none" stroke="#d0d0d0" stroke-width="1.800"/><rect x="5.500" y="4.600" width="8" height="1.800" fill="#d0d0d0"/></svg>
<div class="tx" style="left:710px;top:42px;font-size:15px;color:#d4d8dc">H:</div>
<div class="fld" style="left:731px;top:40px;width:51px;height:26px;border-radius:1px"></div>
<div class="tx" style="left:736px;top:42px;font-size:14px;color:#e8e8e8"><span style="font-size:13px">0</span> <span style="font-size:15px;letter-spacing:.3px">像素</span></div>
<div class="sep" style="left:794px;top:38px;height:31px"></div>
<!-- path ops: square -->
<div class="a" style="left:809px;top:48px;width:13px;height:13px;background:#e4e4e4"></div>
<svg style="left:822px;top:62px" width="5" height="3" viewBox="0 0 5 3"><path d="M0 0h5L2.500 3z" fill="#e4e4e4"/></svg>
<div class="sep" style="left:836px;top:38px;height:31px"></div>
<!-- align -->
<svg style="left:848px;top:45px" width="22" height="21" viewBox="0 0 22 21"><rect x="0" y="0" width="2" height="18" fill="#dcdcdc"/><rect x="4" y="4" width="9" height="5" fill="#dcdcdc"/><rect x="4" y="11" width="14" height="5" fill="#dcdcdc"/><path d="M16 17.500h5L18.500 20.500z" fill="#e4e4e4"/></svg>
<div class="sep" style="left:877px;top:38px;height:31px"></div>
<!-- arrange layers -->
<svg style="left:886px;top:44px" width="26" height="23" viewBox="0 0 26 23"><path d="M3.500 16V8M1 10.500L3.500 7.500L6 10.500" fill="none" stroke="#dcdcdc" stroke-width="1.600"/><path d="M15.500 1L24 5.500L15.500 10L7 5.500z" fill="none" stroke="#dcdcdc" stroke-width="1.600"/><path d="M7.500 9.500L15.500 14L23.500 9.500M7.500 13L15.500 17.500L23.500 13M7.500 16.500L15.500 21L23.500 16.500" fill="none" stroke="#dcdcdc" stroke-width="1.500"/></svg>
<div class="sep" style="left:918px;top:38px;height:31px"></div>
<!-- gear -->
<svg style="left:930px;top:46px" width="22" height="21" viewBox="0 0 22 21"><g transform="translate(9 9)"><g fill="#dcdcdc"><rect x="-1.900" y="-8.200" width="3.800" height="16.400"/><rect x="-1.900" y="-8.200" width="3.800" height="16.400" transform="rotate(45)"/><rect x="-1.900" y="-8.200" width="3.800" height="16.400" transform="rotate(90)"/><rect x="-1.900" y="-8.200" width="3.800" height="16.400" transform="rotate(135)"/><circle r="5.900"/></g><circle r="2.600" fill="#535353"/></g><path d="M16.500 17h5L19 20z" fill="#e4e4e4"/></svg>
<!-- align edges icon -->
<svg style="left:966px;top:44px" width="21" height="23" viewBox="0 0 21 23"><rect x="0" y="0" width="2" height="22" fill="#dcdcdc"/><g fill="none" stroke="#dcdcdc" stroke-width="1.300"><rect x="4.500" y="2.500" width="4" height="4"/><rect x="4.500" y="9.500" width="4" height="4"/><rect x="4.500" y="15.500" width="4" height="4"/></g><rect x="10" y="2" width="6" height="5" fill="#dcdcdc"/><rect x="10" y="14" width="10" height="5" fill="#dcdcdc"/><rect x="6" y="6" width="1.300" height="10" fill="#dcdcdc"/></svg>
<!-- right icons: search, workspace, share -->
<svg style="left:1795px;top:45px" width="20" height="20" viewBox="0 0 20 20"><circle cx="8" cy="8" r="6.500" fill="none" stroke="#e0e0e0" stroke-width="1.800"/><path d="M12.500 12.500L18.500 18.500" stroke="#e0e0e0" stroke-width="2.200"/></svg>
<svg style="left:1829px;top:47px" width="23" height="17" viewBox="0 0 23 17"><rect x="1" y="1" width="20" height="14" fill="none" stroke="#e0e0e0" stroke-width="1.700"/><path d="M5 4v8" stroke="#e0e0e0" stroke-width="2.200" stroke-dasharray="2 1"/></svg>
<svg style="left:1863px;top:51px" width="9" height="6" viewBox="0 0 9 6"><path d="M.8.8l3.700 3.700L8.200.8" fill="none" stroke="#bdbdbd" stroke-width="1.300"/></svg>
<svg style="left:1887px;top:43px" width="23" height="21" viewBox="0 0 23 21"><path d="M6 8H2v11h18V8h-4" fill="none" stroke="#e0e0e0" stroke-width="2"/><path d="M11 14V3M6.500 6.500L11 1.500L15.500 6.500" fill="none" stroke="#e0e0e0" stroke-width="2"/><path d="M6.500 6.500L11 1L15.500 6.500z" fill="#e0e0e0"/></svg>

<!-- ===== document tab ===== -->
<div class="a" style="left:51px;top:77px;width:360px;height:35px;background:#535353"></div>
<div class="a" style="left:50px;top:76px;width:1px;height:36px;background:#383838"></div>
<div class="tx" style="left:63px;top:84px;font-size:15px;color:#e6e6e6;letter-spacing:0">未标题-1 @ 195% (色相/饱和度 1, 图层蒙版/8) *</div>
<svg style="left:389px;top:89px" width="10" height="10" viewBox="0 0 10 10"><path d="M1 1l8 8M9 1L1 9" stroke="#b8b8b8" stroke-width="1.100"/></svg>
<div class="a" style="left:51px;top:111px;width:1458px;height:1px;background:#3a3a3a"></div>
<!-- ===== left toolbar ===== -->
<div class="a" style="left:0;top:76px;width:48px;height:946px;background:#535353"></div>
<div class="a" style="left:48px;top:76px;width:3px;height:946px;background:#3a3a3a"></div>
<div class="a" style="left:0;top:76px;width:48px;height:14px;background:#3c3c3c"></div>
<svg style="left:8px;top:79px" width="9" height="7" viewBox="0 0 9 7"><path d="M1 .8l2.700 2.700L1 6.200M5 .8l2.700 2.700L5 6.200" fill="none" stroke="#e6e6e6" stroke-width="1.200"/></svg>
<div class="a" style="left:12px;top:95px;width:25px;height:4px;background:repeating-linear-gradient(90deg,#3d3d3d 0 1px,transparent 1px 2px)"></div>
<style>.tri{position:absolute;width:0;height:0;border-left:4px solid transparent;border-bottom:4px solid #cfcfcf}</style>
<!-- crop -->
<svg style="left:12px;top:116px" width="24" height="23" viewBox="0 0 24 23"><path d="M6.500 0v16h12.500M4.500 6h12.500v16.500" fill="none" stroke="#e2e2e2" stroke-width="2.200"/><path d="M0 6h2.800M20.800 16h2.800" stroke="#e2e2e2" stroke-width="2.200"/></svg>
<i class="tri" style="left:36px;top:133px"></i>
<!-- artboard / rect marquee -->
<svg style="left:13px;top:151px" width="23" height="20" viewBox="0 0 23 20"><rect x="3.500" y="3.500" width="15" height="13" rx="2" fill="#7a7a7a" stroke="#e2e2e2" stroke-width="1.600"/><g stroke="#e2e2e2" stroke-width="1.500"><path d="M7 0v3M11 0v3M15 0v3M7 17v3M11 17v3M15 17v3M0 7h3M0 10h3M0 13h3M19 7h3M19 10h3M19 13h3"/></g></svg>
<i class="tri" style="left:36px;top:167px"></i>
<!-- object selection (speckled blob) -->
<svg style="left:13px;top:183px" width="23" height="21" viewBox="0 0 23 21"><ellipse cx="11" cy="10" rx="10.500" ry="8.800" fill="#dedede" transform="rotate(-15 11 10)"/><g fill="#555"><circle cx="6" cy="7" r=".9"/><circle cx="10" cy="5" r=".9"/><circle cx="14" cy="6" r=".9"/><circle cx="17" cy="9" r=".9"/><circle cx="8" cy="11" r=".9"/><circle cx="12" cy="10" r=".9"/><circle cx="15" cy="13" r=".9"/><circle cx="5" cy="14" r=".9"/><circle cx="10" cy="15" r=".9"/><circle cx="13" cy="16" r=".8"/><circle cx="4" cy="10" r=".8"/><circle cx="18" cy="5.500" r=".8"/><circle cx="8" cy="8" r=".7"/><circle cx="12.500" cy="13" r=".7"/><circle cx="16" cy="10.500" r=".7"/><circle cx="7" cy="16.500" r=".7"/><circle cx="9" cy="3.500" r=".6"/><circle cx="12.500" cy="3" r=".6"/><circle cx="15.500" cy="4" r=".6"/><circle cx="3" cy="7.500" r=".6"/><circle cx="19" cy="7.500" r=".6"/><circle cx="10" cy="8" r=".6"/><circle cx="14" cy="8.500" r=".6"/><circle cx="6" cy="9.500" r=".6"/><circle cx="10.500" cy="12.500" r=".6"/><circle cx="17.500" cy="12" r=".6"/><circle cx="7.500" cy="13.500" r=".6"/><circle cx="3.500" cy="12.500" r=".6"/><circle cx="12" cy="17.500" r=".6"/><circle cx="15.500" cy="15.500" r=".6"/><circle cx="9" cy="17.800" r=".6"/></g></svg>
<i class="tri" style="left:36px;top:199px"></i>
<!-- move -->
<svg style="left:14px;top:216px" width="21" height="21" viewBox="0 0 21 21"><path d="M10.500 2v17M2 10.500h17" stroke="#e2e2e2" stroke-width="1.500"/><path d="M10.500 0l3.300 4h-6.600zM10.500 21l3.300-4h-6.600zM0 10.500l4-3.300v6.600zM21 10.500l-4-3.300v6.600z" fill="#e2e2e2"/></svg>
<!-- elliptical marquee -->
<svg style="left:13px;top:248px" width="22" height="20" viewBox="0 0 22 20"><ellipse cx="11" cy="10" rx="9.800" ry="8.500" fill="none" stroke="#e2e2e2" stroke-width="1.300" stroke-dasharray="5 2.600"/></svg>
<i class="tri" style="left:36px;top:264px"></i>
<!-- lasso -->
<svg style="left:12px;top:281px" width="24" height="22" viewBox="0 0 24 22"><path d="M8 14.500C3 13.500 1.500 10 3 6.500C5 2.500 11 1 16 1.500C21 2.200 23.500 5.500 22 9C20.500 12.500 15 15 9.500 14.500" fill="none" stroke="#e2e2e2" stroke-width="1.700"/><circle cx="7" cy="15.500" r="2.300" fill="none" stroke="#e2e2e2" stroke-width="1.400"/><path d="M7 18c1 1.500.5 3-1 4" fill="none" stroke="#e2e2e2" stroke-width="1.400"/></svg>
<i class="tri" style="left:36px;top:297px"></i>
<!-- magic wand -->
<svg style="left:12px;top:311px" width="25" height="24" viewBox="0 0 25 24"><path d="M3 21.500L15.500 9" stroke="#e2e2e2" stroke-width="4" stroke-linecap="round"/><path d="M12.500 12l3 3" stroke="#535353" stroke-width="1.200"/><path d="M8 0l1 3l3 1l-3 1l-1 3l-1-3l-3-1l3-1zM20 1l.8 2.200L23 4l-2.200.8L20 7l-.8-2.200L17 4l2.200-.8zM21 11l.8 2.200l2.200.8l-2.200.8L21 17l-.8-2.200L18 14l2.200-.8z" fill="#e2e2e2"/></svg>
<i class="tri" style="left:36px;top:329px"></i>
<!-- eyedropper -->
<svg style="left:10px;top:343px" width="27" height="24" viewBox="0 0 27 24"><path d="M6 22l1.500-4.500L17 8l3 3l-9.500 9.500z" fill="none" stroke="#e2e2e2" stroke-width="1.600" stroke-linejoin="round"/><path d="M16 6l6 6" stroke="#e2e2e2" stroke-width="3.200" stroke-linecap="round"/><path d="M19.500 8.500L23 5" stroke="#e2e2e2" stroke-width="4.500" stroke-linecap="round"/><g fill="#cfcfcf"><rect x="0" y="2" width="2" height="2"/><rect x="3.500" y="2" width="2" height="2"/><rect x="1.800" y="4" width="2" height="2"/><rect x="0" y="6" width="2" height="2"/><rect x="3.500" y="6" width="2" height="2"/></g></svg>
<!-- brush -->
<svg style="left:14px;top:376px" width="22" height="23" viewBox="0 0 22 23"><path d="M20.500 1C15 4.500 10.500 9.500 8 13.500l2.800 2.500C14.500 12.500 18.500 7 20.500 1z" fill="#e2e2e2"/><path d="M7 14.500c-3 .3-3.500 3-3.800 4.800C3 20.500 2 21.200 1 21.500c3.500 1.300 8.500.5 9-4.200z" fill="#e2e2e2"/></svg>
<i class="tri" style="left:36px;top:394px"></i>
<!-- clone stamp -->
<svg style="left:9px;top:408px" width="28" height="24" viewBox="0 0 28 24"><g fill="#e2e2e2"><circle cx="15.500" cy="7.300" r="4.200"/><path d="M13.300 9.500h4.400l1.300 5h-7z"/><rect x="7.500" y="14.300" width="16" height="4.600" rx=".8"/><rect x="7.500" y="20.600" width="16" height="1.400"/><rect x="1" y="3" width="2.700" height="2.700"/><rect x="6.400" y="3" width="2.700" height="2.700"/><rect x="3.700" y="5.700" width="2.700" height="2.700"/><rect x="1" y="8.400" width="2.700" height="2.700"/><rect x="6.400" y="8.400" width="2.700" height="2.700"/></g></svg>
<i class="tri" style="left:36px;top:427px"></i>
<!-- eraser -->
<svg style="left:13px;top:442px" width="23" height="21" viewBox="0 0 23 21"><path d="M2 13.500L13 2.500l8 6.500L12 19H6z" fill="#e2e2e2"/><path d="M4.500 12.500l7 6" stroke="#535353" stroke-width="1.400"/><path d="M2 13.500L5.500 10l7.500 6.300L11 19H6.500z" fill="#535353" stroke="#e2e2e2" stroke-width="1.400"/><path d="M12 19.800h10" stroke="#e2e2e2" stroke-width="1.400"/></svg>
<i class="tri" style="left:36px;top:459px"></i>
<!-- gradient -->
<svg style="left:14px;top:477px" width="22" height="17" viewBox="0 0 22 17"><defs><linearGradient id="gtool" x1="0" x2="1"><stop offset="0" stop-color="#454545"/><stop offset="1" stop-color="#e8e8e8"/></linearGradient></defs><rect x=".8" y=".8" width="20" height="15" fill="url(#gtool)" stroke="#e2e2e2" stroke-width="1.600"/></svg>
<i class="tri" style="left:36px;top:492px"></i>
<!-- type -->
<svg style="left:16px;top:510px" width="17" height="17.500" viewBox="0 0 19 19"><path d="M0 0h19v4.500h-1.500C17 2.800 16.500 2.200 15 2.200h-3.800v13.500c0 1.200.6 1.600 2.500 1.600V19H5.300v-1.700c1.900 0 2.500-.4 2.500-1.600V2.200H4C2.500 2.200 2 2.800 1.500 4.500H0z" fill="#e2e2e2"/></svg>
<i class="tri" style="left:36px;top:525px"></i>
<!-- pen -->
<svg style="left:14px;top:541px" width="22" height="22" viewBox="0 0 22 22"><path d="M13 1.500l7 7l-2.500 1.500c-.5 4-2.500 7-5 8.500L2 21l2.500-10.500C6 8 9 6 11.500 5z" fill="none" stroke="#e2e2e2" stroke-width="1.700" stroke-linejoin="round"/><path d="M2.500 20.500l7-7" stroke="#e2e2e2" stroke-width="1.300"/><circle cx="10.500" cy="12.500" r="1.800" fill="#e2e2e2"/></svg>
<i class="tri" style="left:36px;top:558px"></i>
<!-- path selection arrow -->
<svg style="left:17px;top:572px" width="15" height="23" viewBox="0 0 15 23"><path d="M1 1v17.500l4.300-4l3.200 7.500l3-1.300l-3.200-7.300h6z" fill="#e2e2e2"/></svg>
<i class="tri" style="left:36px;top:590px"></i>
<!-- ellipse (selected) -->
<div class="a" style="left:5px;top:601px;width:38px;height:30px;background:#383838;border-radius:3px"></div>
<svg style="left:13px;top:606px" width="22" height="19" viewBox="0 0 22 19"><ellipse cx="11" cy="9.500" rx="10" ry="8.300" fill="#5a5a5a" stroke="#e2e2e2" stroke-width="1.500"/></svg>
<i class="tri" style="left:36px;top:623px"></i>
<!-- hand -->
<svg style="left:13px;top:637px" width="23" height="24" viewBox="0 0 23 24"><path d="M7.500 12V4.500a1.600 1.600 0 0 1 3.200 0V2.500a1.600 1.600 0 0 1 3.200 0v2a1.600 1.600 0 0 1 3.200 0v3a1.500 1.500 0 0 1 3 0V15c0 5-3 8.500-7.500 8.500c-4 0-5.500-2-7.500-5.500L2 13.500c-.8-1.500 1-3 2.500-1.500z" fill="#e2e2e2"/><path d="M10.700 4v7M13.900 3v8M17.100 5v6.500" stroke="#535353" stroke-width=".9"/></svg>
<i class="tri" style="left:36px;top:655px"></i>
<!-- zoom -->
<svg style="left:13px;top:669px" width="23" height="24" viewBox="0 0 23 24"><circle cx="9" cy="9" r="7.500" fill="none" stroke="#e2e2e2" stroke-width="1.800"/><path d="M14.500 15l6.500 7" stroke="#e2e2e2" stroke-width="3" stroke-linecap="round"/><path d="M4.500 8a4.500 4.500 0 0 1 4-3.500" fill="none" stroke="#e2e2e2" stroke-width="1.200"/></svg>
<!-- more -->
<svg style="left:14px;top:710px" width="21" height="6" viewBox="0 0 21 6"><circle cx="2.500" cy="3" r="2" fill="#e2e2e2"/><circle cx="10.500" cy="3" r="2" fill="#e2e2e2"/><circle cx="18.500" cy="3" r="2" fill="#e2e2e2"/></svg>
<i class="tri" style="left:36px;top:720px"></i>
<!-- default colors / swap -->
<svg style="left:6px;top:737px" width="13" height="13" viewBox="0 0 13 13"><rect x="4.500" y="4.500" width="8" height="8" fill="#1a1a1a" stroke="#e8e8e8" stroke-width="1.200"/><rect x="0" y="0" width="8.500" height="8.500" fill="#e2e2e2"/></svg>
<svg style="left:27px;top:737px" width="14" height="13" viewBox="0 0 14 13"><path d="M3.500 3.500h7v6" fill="none" stroke="#e2e2e2" stroke-width="1.700"/><path d="M0 3.500L4.500 0v7zM10.500 13L7 8.500h7z" fill="#e2e2e2"/></svg>
<!-- fg / bg -->
<div class="a" style="left:17px;top:769px;width:24px;height:23px;background:#fff;border:1px solid #fff"></div>
<div class="a" style="left:5px;top:756px;width:25px;height:24px;background:#000;border:1px solid #f2f2f2;box-shadow:0 0 0 1px #535353"></div>
<!-- quick mask -->
<svg style="left:12px;top:806px" width="24" height="19" viewBox="0 0 24 19"><rect x="1" y="1" width="22" height="16.500" fill="none" stroke="#e2e2e2" stroke-width="1.600"/><circle cx="12" cy="9.200" r="5.300" fill="none" stroke="#e2e2e2" stroke-width="1.300" stroke-dasharray="1.300 1.500"/></svg>
<!-- screen mode -->
<svg style="left:12px;top:838px" width="24" height="19" viewBox="0 0 24 19"><rect x="7" y="1" width="16" height="11.500" fill="#535353" stroke="#e2e2e2" stroke-width="1.600"/><rect x="1" y="6" width="15.500" height="11.500" fill="#535353" stroke="#e2e2e2" stroke-width="1.600"/></svg>
<i class="tri" style="left:36px;top:856px"></i>
<!-- ===== floating Properties panel ===== -->
<div class="a" id="props" style="left:207px;top:339px;width:373px;height:463px;background:#535353;border-radius:3px 3px 0 0;box-shadow:0 2px 6px rgba(0,0,0,.4);overflow:hidden">
  <!-- header band -->
  <div class="a" style="left:0;top:0;width:373px;height:16px;background:#424242"></div>
  <div class="a" style="left:0;top:16px;width:373px;height:1px;background:#383838"></div>
  <svg style="left:336px;top:5px" width="9" height="7" viewBox="0 0 9 7"><path d="M3.700.8L1 3.500l2.700 2.700M7.700.8L5 3.500l2.700 2.700" fill="none" stroke="#d4d4d4" stroke-width="1.200"/></svg>
  <svg style="left:357px;top:5px" width="9" height="9" viewBox="0 0 9 9"><path d="M1 1l7 7M8 1L1 8" stroke="#c4c4c4" stroke-width="2.400"/></svg>
  <!-- tab row -->
  <div class="a" style="left:0;top:17px;width:373px;height:35px;background:#424242"></div>
  <div class="a" style="left:0;top:17px;width:49px;height:35px;background:#535353"></div>
  <div class="a" style="left:49px;top:17px;width:1px;height:35px;background:#383838"></div>
  <div class="a" style="left:50px;top:51px;width:323px;height:1px;background:#383838"></div>
  <div class="tx" style="left:11px;top:23px;font-size:14.500px;font-weight:bold;color:#f0f0f0;letter-spacing:-.4px">属性</div>
  <svg style="left:356px;top:30px" width="11" height="8" viewBox="0 0 11 8"><path d="M0 .5h11M0 2.500h11M0 4.500h11M0 6.500h11" stroke="#c8c8c8" stroke-width="1"/></svg>
  <!-- icon row -->
  <div class="a" style="left:13px;top:59px;width:29px;height:29px;background:#3a3a3a;border-radius:4px;border:1px solid #444"></div>
  <svg style="left:17px;top:65px" width="22" height="17" viewBox="0 0 22 17"><defs><linearGradient id="adj1" x1="0" x2="1"><stop offset="0" stop-color="#3c3c3c"/><stop offset="1" stop-color="#ececec"/></linearGradient></defs><rect x=".6" y=".6" width="20.800" height="15.800" fill="#e6e6e6"/><rect x="1.600" y="1.600" width="18.800" height="5.400" fill="#4a4a4a"/><g fill="#d8d8d8"><rect x="4.500" y="1.600" width="1.600" height="5.400"/><rect x="8.500" y="1.600" width="1.600" height="5.400"/><rect x="12.500" y="1.600" width="1.600" height="5.400"/><rect x="16.500" y="1.600" width="1.600" height="5.400"/></g><rect x="1.600" y="8.600" width="18.800" height="6.800" fill="url(#adj1)"/></svg>
  <svg style="left:47px;top:65px" width="22" height="17" viewBox="0 0 22 17"><rect x="0" y="0" width="22" height="17" rx="1" fill="#dcdcdc"/><circle cx="11" cy="8.500" r="5" fill="#3a3a3a"/></svg>
  <div class="tx" style="left:78px;top:62px;font-size:15px;letter-spacing:.5px;color:#e0e0e0">色相/饱和度</div>
  <div class="a" style="left:0;top:93px;width:373px;height:1px;background:#3c3c3c"></div>
  <!-- scrollbar column -->
  <div class="a" style="left:352px;top:94px;width:21px;height:327px;background:#4b4b4b"></div>
  <div class="a" style="left:355px;top:116px;width:14px;height:248px;background:#6a6a6a;border-radius:2px"></div>
  <svg style="left:358px;top:105px" width="9" height="6" viewBox="0 0 9 6"><path d="M.8 5.200l3.700-3.700l3.700 3.700" fill="none" stroke="#8a8a8a" stroke-width="1.200"/></svg>
  <svg style="left:358px;top:405px" width="9" height="6" viewBox="0 0 9 6"><path d="M.8.8l3.700 3.700L8.200.8" fill="none" stroke="#8a8a8a" stroke-width="1.200"/></svg>
  <!-- preset row -->
  <div class="tx" style="left:11px;top:104px;font-size:15px;letter-spacing:1.200px">预设:</div>
  <div class="dd" style="left:55px;top:105px;width:289px;height:21px"></div>
  <div class="tx" style="left:65px;top:104px;font-size:15px;color:#f0f0f0">自定</div>
  <svg style="left:331px;top:113px" width="9" height="6" viewBox="0 0 9 6"><path d="M.8.8l3.700 3.700L8.200.8" fill="none" stroke="#cfcfcf" stroke-width="1.300"/></svg>
  <!-- hand + channel -->
  <svg style="left:18px;top:137px" width="20" height="24" viewBox="0 0 20 24"><path d="M0 4.500L3 2v5zM11.500 4.500L8.500 2v5z" fill="#e0e0e0"/><path d="M5 12.500V2.500a1.300 1.300 0 0 1 2.600 0V10l1-.2V9a1.300 1.300 0 0 1 2.600.3v1a1.300 1.300 0 0 1 2.500.5v.9a1.300 1.300 0 0 1 2.500.6V17c0 4-2.500 6-6 6c-3.500 0-4.500-1.500-6.500-4.500L1.500 15c-.8-1.500.8-2.800 2-1.600z" fill="#e0e0e0"/></svg>
  <div class="dd" style="left:57px;top:138px;width:287px;height:27px"></div>
  <div class="tx" style="left:67px;top:140px;font-size:15px;color:#f0f0f0">全图</div>
  <svg style="left:331px;top:150px" width="9" height="6" viewBox="0 0 9 6"><path d="M.8.8l3.700 3.700L8.200.8" fill="none" stroke="#cfcfcf" stroke-width="1.300"/></svg>
  <!-- hue -->
  <div class="tx" style="left:10px;top:177px;font-size:15px;letter-spacing:1.500px">色相:</div>
  <div class="fld" style="left:289px;top:175px;width:54px;height:26px;border-radius:1px"></div>
  <div class="tx" style="left:295px;top:178px;font-size:13px;color:#f0f0f0">-42</div>
  <div class="a" style="left:18px;top:207px;width:316px;height:4px;background:linear-gradient(90deg,#ff0000 0%,#ff8000 7%,#ffff00 16.500%,#00ff00 33%,#00ffff 50%,#0000ff 67%,#ff00ff 84%,#ff0040 100%)"></div>
  <svg style="left:104px;top:211px" width="13" height="12" viewBox="0 0 13 12"><path d="M6.500.5L12 6.500V10a1.500 1.500 0 0 1-1.500 1.500h-8A1.500 1.500 0 0 1 1 10V6.500z" fill="#f4f4f4" stroke="#3a3a3a" stroke-width=".8"/></svg>
  <!-- saturation -->
  <div class="tx" style="left:10px;top:230px;font-size:15px;letter-spacing:1.500px">饱和度:</div>
  <div class="fld" style="left:289px;top:228px;width:54px;height:26px;border-radius:1px"></div>
  <div class="tx" style="left:295px;top:231px;font-size:13px;color:#f0f0f0">0</div>
  <div class="a" style="left:18px;top:261px;width:316px;height:4px;background:linear-gradient(90deg,#8c7878 0%,#b85e5e 40%,#dc3030 70%,#ff0000 100%)"></div>
  <svg style="left:170px;top:265px" width="13" height="12" viewBox="0 0 13 12"><path d="M6.500.5L12 6.500V10a1.500 1.500 0 0 1-1.500 1.500h-8A1.500 1.500 0 0 1 1 10V6.500z" fill="#f4f4f4" stroke="#3a3a3a" stroke-width=".8"/></svg>
  <!-- lightness -->
  <div class="tx" style="left:10px;top:284px;font-size:15px;letter-spacing:1.500px">明度:</div>
  <div class="fld" style="left:289px;top:282px;width:54px;height:26px;border-radius:1px"></div>
  <div class="tx" style="left:295px;top:285px;font-size:13px;color:#f0f0f0">0</div>
  <div class="a" style="left:18px;top:314px;width:316px;height:4px;background:linear-gradient(90deg,#000 0%,#808080 50%,#fff 100%)"></div>
  <svg style="left:170px;top:318px" width="13" height="12" viewBox="0 0 13 12"><path d="M6.500.5L12 6.500V10a1.500 1.500 0 0 1-1.500 1.500h-8A1.500 1.500 0 0 1 1 10V6.500z" fill="#f4f4f4" stroke="#3a3a3a" stroke-width=".8"/></svg>
  <!-- eyedroppers + colorize -->
  <svg style="left:18px;top:347px" width="21" height="21" viewBox="0 0 21 21"><path d="M1.500 19.500l1-3.500L11 7.500l2.500 2.500L5 18.500z" fill="none" stroke="#8c8c8c" stroke-width="1.500" stroke-linejoin="round"/><path d="M10.500 5.500l5 5" stroke="#8c8c8c" stroke-width="2.800" stroke-linecap="round"/><path d="M13.500 7.500L17 4" stroke="#8c8c8c" stroke-width="4" stroke-linecap="round"/></svg>
  <svg style="left:55px;top:347px" width="21" height="22" viewBox="0 0 21 22"><path d="M1.500 19.500l1-3.500L11 7.500l2.500 2.500L5 18.500z" fill="none" stroke="#8c8c8c" stroke-width="1.500" stroke-linejoin="round"/><path d="M10.500 5.500l5 5" stroke="#8c8c8c" stroke-width="2.800" stroke-linecap="round"/><path d="M13.500 7.500L17 4" stroke="#8c8c8c" stroke-width="4" stroke-linecap="round"/><path d="M10.500 19h6M13.500 16v6" stroke="#8c8c8c" stroke-width="1.300"/></svg>
  <svg style="left:93px;top:347px" width="21" height="22" viewBox="0 0 21 22"><path d="M1.500 19.500l1-3.500L11 7.500l2.500 2.500L5 18.500z" fill="none" stroke="#8c8c8c" stroke-width="1.500" stroke-linejoin="round"/><path d="M10.500 5.500l5 5" stroke="#8c8c8c" stroke-width="2.800" stroke-linecap="round"/><path d="M13.500 7.500L17 4" stroke="#8c8c8c" stroke-width="4" stroke-linecap="round"/><path d="M10.500 19h6" stroke="#8c8c8c" stroke-width="1.300"/></svg>
  <div class="a" style="left:137px;top:352px;width:13px;height:13px;border:1px solid #757575;border-radius:3px;background:#4a4a4a"></div>
  <div class="tx" style="left:159px;top:348px;font-size:14.500px;color:#e6e6e6">着色</div>
  <!-- rainbow bars -->
  <div class="a" style="left:13px;top:396px;width:326px;height:6px;background:linear-gradient(90deg,#00ffff 0%,#0000ff 17%,#ff00ff 34%,#ff0000 50%,#ffff00 67%,#00ff00 84%,#00ffc0 100%)"></div>
  <div class="a" style="left:13px;top:411px;width:326px;height:6px;background:linear-gradient(90deg,#00ff40 0%,#00ffff 12%,#0000ff 29%,#ff00ff 46%,#ff0000 62%,#ffff00 79%,#40ff00 92%,#00ff00 100%)"></div>
  <!-- footer -->
  <div class="a" style="left:0;top:421px;width:373px;height:1px;background:#3c3c3c"></div>
  <div class="a" style="left:275px;top:422px;width:36px;height:30px;background:#3d3d3d"></div>
  <svg style="left:171px;top:429px" width="24" height="15" viewBox="0 0 24 15"><rect x="10" y="1" width="13" height="12" fill="#dedede"/><path d="M1 4l6 6M7 10V5.500M7 10H2.500" fill="none" stroke="#dedede" stroke-width="1.500"/><path d="M2 12l3-3" stroke="#dedede" stroke-width="1.300"/></svg>
  <svg style="left:209px;top:428px" width="24" height="17" viewBox="0 0 24 17"><path d="M1 7C3.500 3 6 1.500 8.500 1.500S13.500 3 16 7C13.500 11 11 12.500 8.500 12.500S3.500 11 1 7z" fill="none" stroke="#dedede" stroke-width="1.700"/><circle cx="8.500" cy="7" r="2.600" fill="#dedede"/><path d="M17.500 2.500C21.500 4 22.500 9 19 12.500" fill="none" stroke="#dedede" stroke-width="1.700"/><path d="M21 13.500l-5 2l1.500-5z" fill="#dedede"/></svg>
  <svg style="left:247px;top:427px" width="18" height="19" viewBox="0 0 18 19"><path d="M5 5.500A6 6 0 1 1 8 14.500" fill="none" stroke="#dedede" stroke-width="1.700"/><path d="M1 6.500L6.500 2v7z" fill="#dedede"/><path d="M1 17.500h15" stroke="#dedede" stroke-width="1.600"/></svg>
  <svg style="left:285px;top:431px" width="17" height="12" viewBox="0 0 17 12"><path d="M1 6C3.500 2 6 .8 8.500.8S13.500 2 16 6C13.500 10 11 11.200 8.500 11.200S3.500 10 1 6z" fill="#f2f2f2"/><circle cx="8.500" cy="6" r="3.300" fill="#3d3d3d"/><circle cx="8.500" cy="6" r="1.700" fill="#f2f2f2"/></svg>
  <svg style="left:321px;top:427px" width="15" height="18" viewBox="0 0 15 18"><path d="M0 3.500h15M5 3V1h5v2" fill="none" stroke="#dedede" stroke-width="1.500"/><path d="M2 5.500h11v11H2z" fill="none" stroke="#dedede" stroke-width="1.500"/><path d="M5.500 7.500v7M7.500 7.500v7M9.500 7.500v7" stroke="#dedede" stroke-width="1.100"/></svg>
  <!-- bottom strip -->
  <div class="a" style="left:0;top:452px;width:373px;height:2px;background:#3a3a3a"></div>
  <div class="a" style="left:0;top:454px;width:373px;height:9px;background:#4d4d4d"></div>
  <div class="a" style="left:174px;top:456px;width:25px;height:4px;background:repeating-linear-gradient(90deg,#3a3a3a 0 1px,transparent 1px 2px)"></div>
  <div class="a" style="left:0;top:0;width:373px;height:463px;border:1px solid #2f2f2f;border-left:none;border-radius:3px 3px 0 0"></div>
</div>
<!-- ===== right dock ===== -->
<!-- dock header band -->
<div class="a" style="left:1509px;top:100px;width:411px;height:16px;background:#424242;border-radius:6px 0 0 0;border-top:1px solid #4e4e4e;border-left:1px solid #4e4e4e"></div>
<svg style="left:1592px;top:104px" width="9" height="7" viewBox="0 0 9 7"><path d="M1 .8l2.700 2.700L1 6.200M5 .8l2.700 2.700L5 6.200" fill="none" stroke="#e6e6e6" stroke-width="1.200"/></svg>
<!-- collapsed panel -->
<div class="a" style="left:1508px;top:116px;width:102px;height:53px;background:#383838"></div>
<div class="a" style="left:1509px;top:116px;width:98px;height:51px;background:#535353"></div>
<div class="a" style="left:1545px;top:120px;width:25px;height:4px;background:repeating-linear-gradient(90deg,#3d3d3d 0 1px,transparent 1px 2px)"></div>
<svg style="left:1519px;top:134px" width="26" height="22" viewBox="0 0 26 22"><g fill="#e2e2e2"><rect x="0" y="0" width="2.500" height="2.500"/><rect x="4" y=".3" width="6" height="2"/><rect x="0" y="4.500" width="2.500" height="2.500"/><rect x="4" y="4.800" width="4.500" height="2"/><rect x="0" y="9" width="2.500" height="2.500"/><path d="M16.500 2a4 4 0 0 1 4 4c0 2-1.400 3-1.400 5.500H24v4.500H9v-4.500h4.900C13.900 9 12.500 8 12.500 6a4 4 0 0 1 4-4z"/><rect x="9" y="17.300" width="15" height="1.800"/><rect x="9" y="20" width="15" height="1.300"/></g></svg>
<div class="tx" style="left:1556px;top:135px;font-size:15px;font-weight:bold;color:#ececec">仿...</div>
<!-- main panel -->
<div class="a" style="left:1607px;top:116px;width:3px;height:906px;background:#383838"></div>
<div class="a" style="left:1610px;top:116px;width:310px;height:35px;background:#424242"></div>
<div class="a" style="left:1610px;top:150px;width:310px;height:1px;background:#383838"></div>
<div class="a" style="left:1610px;top:151px;width:310px;height:821px;background:#535353"></div>
<style>.rt{position:absolute;top:122px;height:20px;line-height:20px;font-size:14.500px;color:#a8a8a8;white-space:nowrap;letter-spacing:-.3px}</style>
<div class="rt" style="left:1621px">库</div>
<div class="a" style="left:1655px;top:116px;width:1px;height:34px;background:#383838"></div>
<div class="rt" style="left:1667px">颜色</div>
<div class="a" style="left:1705px;top:116px;width:1px;height:34px;background:#383838"></div>
<div class="rt" style="left:1717px">色板</div>
<div class="a" style="left:1755px;top:116px;width:1px;height:34px;background:#383838"></div>
<div class="rt" style="left:1767px">历史记录</div>
<div class="a" style="left:1834px;top:116px;width:50px;height:36px;background:#535353"></div>
<div class="a" style="left:1833px;top:116px;width:1px;height:34px;background:#383838"></div>
<div class="a" style="left:1884px;top:116px;width:1px;height:34px;background:#383838"></div>
<div class="rt" style="left:1845px;color:#f2f2f2;font-weight:bold">图层</div>
<!-- filter row -->
<div class="dd" style="left:1615px;top:162px;width:106px;height:27px"></div>
<svg style="left:1624px;top:168px" width="14" height="14" viewBox="0 0 14 14"><circle cx="5.500" cy="5.500" r="4.300" fill="none" stroke="#e6e6e6" stroke-width="1.600"/><path d="M8.800 8.800l4 4" stroke="#e6e6e6" stroke-width="2.200" stroke-linecap="round"/></svg>
<div class="tx" style="left:1643px;top:165px;font-size:15px;color:#f0f0f0;letter-spacing:-.6px">类型</div>
<svg style="left:1707px;top:174px" width="9" height="6" viewBox="0 0 9 6"><path d="M.8.8l3.700 3.700L8.200.8" fill="none" stroke="#cfcfcf" stroke-width="1.300"/></svg>
<svg style="left:1742px;top:168px" width="16" height="13" viewBox="0 0 16 13"><rect x=".7" y=".7" width="14.600" height="11.600" fill="none" stroke="#e0e0e0" stroke-width="1.400"/><path d="M2.500 10.500L6 5.500l2.500 3l2-2l3 4z" fill="#e0e0e0"/></svg>
<svg style="left:1772px;top:167px" width="15" height="15" viewBox="0 0 15 15"><circle cx="7.500" cy="7.500" r="6.300" fill="none" stroke="#e0e0e0" stroke-width="1.500"/><path d="M3 12A6.300 6.300 0 0 0 12 3z" fill="#e0e0e0"/></svg>
<svg style="left:1803px;top:168px" width="13" height="13" viewBox="0 0 13 13"><path d="M0 0h13v3.300h-1.200C11.500 2 11 1.600 10 1.600H7.700v9c0 .8.400 1.100 1.600 1.100V13H3.700v-1.300c1.200 0 1.600-.3 1.600-1.100v-9H3c-1 0-1.500.4-1.800 1.700H0z" fill="#e0e0e0"/></svg>
<svg style="left:1832px;top:167px" width="16" height="15" viewBox="0 0 16 15"><rect x="2.500" y="2.500" width="11" height="10" fill="none" stroke="#e0e0e0" stroke-width="1.400"/><g fill="#535353" stroke="#e0e0e0" stroke-width="1.100"><rect x=".6" y=".6" width="3.500" height="3.500"/><rect x="11.900" y=".6" width="3.500" height="3.500"/><rect x=".6" y="10.900" width="3.500" height="3.500"/><rect x="11.900" y="10.900" width="3.500" height="3.500"/></g></svg>
<svg style="left:1864px;top:167px" width="14" height="15" viewBox="0 0 14 15"><path d="M4.500 5V1h5l3.500 3.500V12H10" fill="none" stroke="#e0e0e0" stroke-width="1.400"/><path d="M9 1v4h4" fill="none" stroke="#e0e0e0" stroke-width="1.200"/><rect x="1" y="7" width="8" height="7.300" fill="#e0e0e0"/></svg>
<div class="a" style="left:1899px;top:166px;width:10px;height:19px;border-radius:5px;background:#474747"></div>
<div class="a" style="left:1899px;top:163px;width:10px;height:10px;border-radius:5px;background:#e4e4e4"></div>
<div class="a" style="left:1610px;top:191px;width:310px;height:1px;background:#434343"></div>
<!-- blend row -->
<div class="dd" style="left:1615px;top:199px;width:146px;height:27px"></div>
<div class="tx" style="left:1624px;top:201px;font-size:15px;color:#f0f0f0;letter-spacing:-.6px">正常</div>
<svg style="left:1747px;top:211px" width="9" height="6" viewBox="0 0 9 6"><path d="M.8.8l3.700 3.700L8.200.8" fill="none" stroke="#cfcfcf" stroke-width="1.300"/></svg>
<div class="tx" style="left:1771px;top:198px;font-size:15px;letter-spacing:-.1px">不透明度:</div>
<div class="dd" style="left:1842px;top:200px;width:66px;height:21px;border-radius:3px"></div>
<div class="a" style="left:1889px;top:201px;width:1px;height:19px;background:#626262"></div>
<div class="tx" style="left:1845px;top:200px;font-size:13px;color:#f4f4f4;letter-spacing:-.3px">100%</div>
<svg style="left:1895px;top:209px" width="9" height="6" viewBox="0 0 9 6"><path d="M.8.8l3.700 3.700L8.200.8" fill="none" stroke="#cfcfcf" stroke-width="1.300"/></svg>
<div class="a" style="left:1610px;top:227px;width:310px;height:1px;background:#434343"></div>
<!-- lock row -->
<div class="tx" style="left:1618px;top:235px;font-size:15px;letter-spacing:1.200px">锁定:</div>
<svg style="left:1665px;top:239px" width="14" height="14" viewBox="0 0 14 14"><rect x=".5" y=".5" width="13" height="13" fill="#6a6a6a" stroke="#9a9a9a" stroke-width="1"/><g fill="#a8a8a8"><rect x="1" y="1" width="4" height="4"/><rect x="9" y="1" width="4" height="4"/><rect x="5" y="5" width="4" height="4"/><rect x="1" y="9" width="4" height="4"/><rect x="9" y="9" width="4" height="4"/></g></svg>
<svg style="left:1692px;top:237px" width="19" height="19" viewBox="0 0 19 19"><path d="M17.500 1C13 4 9.500 8 7.500 11.500l2.300 2C13 10.500 16 6 17.500 1z" fill="#9a9a9a"/><path d="M6.500 12.500c-2.500.3-3 2.500-3.200 4C3 17.500 2 18 1 18.300c3 1 7.500.4 8-3.500z" fill="#9a9a9a"/></svg>
<svg style="left:1718px;top:238px" width="17" height="17" viewBox="0 0 17 17"><path d="M8.500 1.500v14M1.500 8.500h14" stroke="#e0e0e0" stroke-width="1.600"/><path d="M8.500 0l3.200 3.800H5.300zM8.500 17l3.200-3.800H5.300zM0 8.500l3.800-3.200v6.400zM17 8.500l-3.800-3.200v6.400z" fill="#e0e0e0"/></svg>
<svg style="left:1746px;top:238px" width="18" height="17" viewBox="0 0 18 17"><path d="M4 0v13.500h14M0 3.500h14V17" fill="none" stroke="#e0e0e0" stroke-width="1.500"/><path d="M9 3.500L14 8" stroke="#e0e0e0" stroke-width="1.200"/><path d="M15.500 0v2M17 3.500h-2" stroke="#e0e0e0" stroke-width="1.200"/></svg>
<svg style="left:1775px;top:238px" width="13" height="16" viewBox="0 0 13 16"><path d="M3 7V4.500a3.500 3.500 0 0 1 7 0V7" fill="none" stroke="#e8e8e8" stroke-width="1.800"/><rect x="0" y="6.500" width="13" height="9.500" rx="1" fill="#e8e8e8"/><circle cx="6.500" cy="11" r="1.500" fill="#535353"/></svg>
<div class="tx" style="left:1800px;top:235px;font-size:15px;letter-spacing:1.200px">填充:</div>
<div class="dd" style="left:1842px;top:236px;width:66px;height:21px;border-radius:3px"></div>
<div class="a" style="left:1889px;top:237px;width:1px;height:19px;background:#626262"></div>
<div class="tx" style="left:1845px;top:236px;font-size:13px;color:#f4f4f4;letter-spacing:-.3px">100%</div>
<svg style="left:1895px;top:245px" width="9" height="6" viewBox="0 0 9 6"><path d="M.8.8l3.700 3.700L8.200.8" fill="none" stroke="#cfcfcf" stroke-width="1.300"/></svg>
<!-- ===== layers list ===== -->
<svg width="0" height="0" style="left:0;top:0"><defs>
<symbol id="eye" viewBox="0 0 17 11"><path d="M.5 5.500C3 1.800 5.800.5 8.500.5S14 1.800 16.500 5.500C14 9.200 11.200 10.500 8.500 10.500S3 9.200.5 5.500z" fill="#e4e4e4"/><circle cx="8.500" cy="5.300" r="3.300" fill="#535353"/><circle cx="8.500" cy="5.300" r="1.700" fill="#e4e4e4"/></symbol>
</defs></svg>
<!-- row 1 (selected) -->
<div class="a" style="left:1648px;top:267px;width:272px;height:49px;background:#6b6b6b"></div>
<div class="a" style="left:1647px;top:267px;width:1px;height:344px;background:#484848"></div>
<div class="a" style="left:1610px;top:316px;width:310px;height:1px;background:#454545"></div>
<svg style="left:1620px;top:286px" width="17" height="11"><use href="#eye"/></svg>
<svg style="left:1662px;top:284px" width="22" height="17" viewBox="0 0 22 17"><defs><linearGradient id="adj2" x1="0" x2="1"><stop offset="0" stop-color="#3c3c3c"/><stop offset="1" stop-color="#ececec"/></linearGradient></defs><rect x=".6" y=".6" width="20.800" height="15.800" fill="#e6e6e6"/><rect x="1.600" y="1.600" width="18.800" height="5.400" fill="#4a4a4a"/><g fill="#d8d8d8"><rect x="4.500" y="1.600" width="1.600" height="5.400"/><rect x="8.500" y="1.600" width="1.600" height="5.400"/><rect x="12.500" y="1.600" width="1.600" height="5.400"/><rect x="16.500" y="1.600" width="1.600" height="5.400"/></g><rect x="1.600" y="8.600" width="18.800" height="6.800" fill="url(#adj2)"/></svg>
<svg style="left:1696px;top:283px" width="11" height="19" viewBox="0 0 11 19"><rect x="2" y="1" width="7" height="9.500" rx="3.500" fill="none" stroke="#e8e8e8" stroke-width="1.700"/><rect x="2" y="8.500" width="7" height="9.500" rx="3.500" fill="none" stroke="#e8e8e8" stroke-width="1.700"/><path d="M5.500 6v7" stroke="#e8e8e8" stroke-width="1.700"/></svg>
<!-- mask thumb with corner brackets -->
<div class="a" style="left:1711px;top:272px;width:40px;height:40px;background:#6b6b6b;border:1px solid #2c2c2c"></div>
<svg style="left:1708px;top:269px" width="46" height="46" viewBox="0 0 46 46"><path d="M.7 16V.7H16M30 .7h15.300V16M45.300 30v15.300H30M16 45.300H.7V30" fill="none" stroke="#fafafa" stroke-width="1.400"/></svg>
<div class="a" style="left:1720px;top:281px;width:24px;height:24px;background:#fff"></div>
<div class="tx" style="left:1762px;top:281px;font-size:15px;color:#f0f0f0;letter-spacing:.9px">色相/饱和度 <span style="color:#d6dce6">1</span></div>
<!-- row 2 ellipse -->
<svg style="left:1620px;top:338px" width="17" height="11"><use href="#eye"/></svg>
<div class="a" style="left:1652px;top:324px;width:40px;height:40px;background:#535353;border:1px solid #2e2e2e"></div>
<div class="a" style="left:1661px;top:332px;width:23px;height:24px;background-color:#fff;background-image:linear-gradient(45deg,#d4d4d4 25%,transparent 25%,transparent 75%,#d4d4d4 75%),linear-gradient(45deg,#d4d4d4 25%,transparent 25%,transparent 75%,#d4d4d4 75%);background-size:6px 6px;background-position:0 0,3px 3px"></div>
<div class="a" style="left:1667px;top:337px;width:12px;height:12px;border:1.500px solid #e268d4;border-radius:50%"></div>
<div class="a" style="left:1674px;top:346px;width:18px;height:18px;background:#4a4a4a;border:1px solid #2e2e2e"></div>
<svg style="left:1677px;top:349px" width="13" height="13" viewBox="0 0 13 13"><rect x="2" y="2" width="9" height="9" fill="none" stroke="#e0e0e0" stroke-width="1.200"/><g fill="#4a4a4a" stroke="#e0e0e0" stroke-width="1"><rect x=".5" y=".5" width="3" height="3"/><rect x="9.500" y=".5" width="3" height="3"/><rect x=".5" y="9.500" width="3" height="3"/><rect x="9.500" y="9.500" width="3" height="3"/></g></svg>
<div class="tx" style="left:1706px;top:333px;font-size:15px;color:#f0f0f0;letter-spacing:-.5px">椭圆 <span style="color:#d6dce6">1</span></div>
<svg style="left:1908px;top:336px" width="12" height="15" viewBox="0 0 12 15"><rect x=".6" y=".6" width="9" height="9" fill="none" stroke="#bdbdbd" stroke-width="1.200"/><rect x="4.500" y="4.500" width="9" height="9" fill="#535353" stroke="#bdbdbd" stroke-width="1.200"/><rect x="5.500" y="5.500" width="4" height="4" fill="#dcdcdc"/></svg>
<!-- effects -->
<style>.fx{position:absolute;height:20px;line-height:20px;font-size:15px;color:#f0f0f0;white-space:nowrap;letter-spacing:-.4px}</style>
<svg style="left:1673px;top:375px" width="15" height="10"><use href="#eye"/></svg>
<div class="fx" style="left:1695px;top:368px">效果</div>
<svg style="left:1694px;top:399px" width="15" height="10"><use href="#eye"/></svg>
<div class="fx" style="left:1716px;top:391px">斜面和浮雕</div>
<svg style="left:1694px;top:423px" width="15" height="10"><use href="#eye"/></svg>
<div class="fx" style="left:1716px;top:416px">内阴影</div>
<svg style="left:1694px;top:447px" width="15" height="10"><use href="#eye"/></svg>
<div class="fx" style="left:1716px;top:439px">内发光</div>
<svg style="left:1694px;top:471px" width="15" height="10"><use href="#eye"/></svg>
<div class="fx" style="left:1716px;top:463px">光泽</div>
<svg style="left:1694px;top:494px" width="15" height="10"><use href="#eye"/></svg>
<div class="fx" style="left:1716px;top:486px">颜色叠加</div>
<svg style="left:1694px;top:518px" width="15" height="10"><use href="#eye"/></svg>
<div class="fx" style="left:1716px;top:511px">外发光</div>
<svg style="left:1694px;top:542px" width="15" height="10"><use href="#eye"/></svg>
<div class="fx" style="left:1716px;top:534px">投影</div>
<div class="a" style="left:1610px;top:558px;width:310px;height:1px;background:#454545"></div>
<!-- row 3 background -->
<svg style="left:1620px;top:580px" width="17" height="11"><use href="#eye"/></svg>
<div class="a" style="left:1652px;top:565px;width:40px;height:40px;background:#535353;border:1px solid #2e2e2e"></div>
<div class="a" style="left:1661px;top:573px;width:23px;height:24px;background:linear-gradient(115deg,#e4d4f0 0%,#f0d0ee 25%,#f8d8e4 48%,#f6f0d8 68%,#d8f0e4 84%,#b8ece8 100%)"></div>
<div class="tx" style="left:1706px;top:574px;font-size:15px;color:#f0f0f0;letter-spacing:-.6px">背景</div>
<div class="a" style="left:1610px;top:610px;width:310px;height:1px;background:#454545"></div>
<div class="a" style="left:1610px;top:611px;width:310px;height:326px;background:#4d4d4d"></div>
<!-- bottom bar of layers panel -->
<div class="a" style="left:1610px;top:937px;width:310px;height:1px;background:#434343"></div>
<svg style="left:1898px;top:946px" width="14" height="14" viewBox="0 0 15 15"><rect x=".7" y=".7" width="13.600" height="13.600" fill="none" stroke="#e0e0e0" stroke-width="1.300"/><path d="M7.500 3.500v8M3.500 7.500h8" stroke="#e0e0e0" stroke-width="1.300"/></svg>
<!-- below layers panel -->
<div class="a" style="left:1610px;top:969px;width:310px;height:3px;background:#484848"></div>
<div class="a" style="left:1610px;top:972px;width:310px;height:7px;background:#3e3e3e"></div>
<div class="a" style="left:1610px;top:979px;width:290px;height:29px;background:#2a2a2a"></div>
<div class="a" style="left:1899px;top:979px;width:21px;height:29px;background:#4a4a4a"></div>
<svg style="left:1905px;top:992px" width="9" height="6" viewBox="0 0 9 6"><path d="M.8.8l3.700 3.700L8.200.8" fill="none" stroke="#9a9a9a" stroke-width="1.200"/></svg>
<!-- ===== status bar ===== -->
<div class="a" style="left:51px;top:1008px;width:1869px;height:14px;background:#4d4d4d"></div>
<div class="a" style="left:51px;top:1008px;width:1869px;height:1px;background:#3a3a3a"></div>
<div class="a" style="left:52px;top:1009px;width:67px;height:13px;background:#3a3a3a"></div>
<div class="tx" style="left:56px;top:1009px;font-size:13px;color:#f4f4f4;letter-spacing:-.2px">194.87%</div>
<div class="tx" style="left:127px;top:1008px;font-size:14px;color:#dcdcdc;letter-spacing:-.1px">500 像素 x 500 像素 (72 ppi)</div>
<svg style="left:328px;top:1012px" width="6" height="10" viewBox="0 0 6 10"><path d="M1 1l3.500 4.500L1 10" fill="none" stroke="#c8c8c8" stroke-width="1.200"/></svg>
<div class="a" style="left:340px;top:1009px;width:1270px;height:13px;background:#484848"></div>
<svg style="left:350px;top:1013px" width="6" height="9" viewBox="0 0 6 9"><path d="M5 1L1.500 5L5 9" fill="none" stroke="#9a9a9a" stroke-width="1.200"/></svg>
<div class="a" style="left:805px;top:1010px;width:631px;height:12px;background:#6a6a6a"></div>
<svg style="left:1883px;top:1012px" width="6" height="10" viewBox="0 0 6 10"><path d="M1 1l3.500 4.500L1 10" fill="none" stroke="#9a9a9a" stroke-width="1.200"/></svg>
<!-- ruler cursor markers -->
<div class="a" style="left:1322px;top:113px;width:1px;height:10px;background:#f0f0f0"></div>
<div class="a" style="left:51px;top:651px;width:10px;height:1px;background:#f0f0f0"></div>

<!-- ===== IME toolbar ===== -->
<div class="a" style="left:1264px;top:984px;width:249px;height:30px;background:#fff;border:1px solid #b4c4d4;border-radius:3px"></div>
<svg style="left:1255px;top:978px" width="40" height="40" viewBox="0 0 40 40"><defs><linearGradient id="sg" x1="0" y1="0" x2="0" y2="1"><stop offset="0" stop-color="#f6702e"/><stop offset="1" stop-color="#e84c10"/></linearGradient></defs><rect x="5" y="5.500" width="30" height="30" rx="4" fill="url(#sg)" transform="rotate(-15 20 20.500)"/><path d="M27 13.500c-3.500-3-11.500-2.500-13 .8c-1.300 3.300 3 4.300 6.800 5.200c4.500 1 7.500 3 5 6c-2.600 3-10 2-13.500-1" fill="none" stroke="#fff" stroke-width="3.800" stroke-linecap="round" transform="rotate(-12 20 20)"/></svg>
<div class="tx" style="left:1299px;top:990px;font-size:19.500px;font-weight:bold;color:#1f77d0;-webkit-text-stroke:.7px #1f77d0">中</div>
<div class="tx" style="left:1328px;top:989px;font-size:21px;font-weight:bold;color:#1f77d0;letter-spacing:-1px;-webkit-text-stroke:.6px #1f77d0">°,</div>
<svg style="left:1352px;top:991px" width="20" height="20" viewBox="0 0 20 20"><circle cx="10" cy="10" r="8.600" fill="none" stroke="#1f77d0" stroke-width="2"/><path d="M7 6.500v3M13 6.500v3" stroke="#1f77d0" stroke-width="2" stroke-linecap="round"/><path d="M5.500 11.500a4.600 4.600 0 0 0 9 0" fill="none" stroke="#1f77d0" stroke-width="1.900"/></svg>
<svg style="left:1383px;top:990px" width="15" height="21" viewBox="0 0 16 23"><rect x="4.500" y="0" width="7" height="13" rx="3.500" fill="#1f77d0"/><path d="M1.500 9.500a6.500 6.500 0 0 0 13 0M8 16v5M4 21.500h8" fill="none" stroke="#1f77d0" stroke-width="2"/></svg>
<svg style="left:1407px;top:993px" width="21" height="15" viewBox="0 0 22 16"><rect x="0" y="0" width="22" height="16" rx="2" fill="#1f77d0"/><g fill="#fff"><rect x="2.500" y="3" width="2.500" height="2.500"/><rect x="6.500" y="3" width="2.500" height="2.500"/><rect x="10.500" y="3" width="2.500" height="2.500"/><rect x="14.500" y="3" width="2.500" height="2.500"/><rect x="2.500" y="7" width="2.500" height="2.500"/><rect x="6.500" y="7" width="2.500" height="2.500"/><rect x="10.500" y="7" width="2.500" height="2.500"/><rect x="14.500" y="7" width="2.500" height="2.500"/><rect x="5" y="11" width="12" height="2"/><rect x="18" y="3" width="1.500" height="6.500"/></g></svg>
<svg style="left:1436px;top:991px" width="21" height="20" viewBox="0 0 22 22"><circle cx="9" cy="6" r="4.500" fill="#b8c4d8"/><path d="M1 20c0-6 3.500-9 8-9s8 3 8 9z" fill="#b8c4d8"/><rect x="9" y="12" width="12" height="9" rx="1.500" fill="#93a3c0"/><path d="M12 15h2v4M16 15h3l-2 4" fill="none" stroke="#fff" stroke-width="1.300"/></svg>
<svg style="left:1463px;top:992px" width="18" height="18" viewBox="0 0 21 21"><path d="M6.500 1L0 5.500l2.500 4l2.500-1.500V20h11V8l2.500 1.500l2.500-4L14.500 1c-1 2-7 2-8 0z" fill="#1f77d0"/></svg>
<svg style="left:1490px;top:992px" width="17" height="17" viewBox="0 0 20 20"><g fill="#1f77d0"><rect x="0" y="0" width="8.500" height="8.500" rx="1"/><rect x="0" y="11" width="8.500" height="8.500" rx="1"/><rect x="11" y="11" width="8.500" height="8.500" rx="1"/></g><rect x="11.800" y=".8" width="7" height="7" rx="1" fill="none" stroke="#1f77d0" stroke-width="1.700"/></svg>

<!-- ===== watermark ===== -->
<style>
.wm{position:absolute;white-space:nowrap;line-height:56px;height:56px;color:#fff;text-shadow:1px 1px 0 #080808,2px 2px 0 #080808,3px 3px 0 #080808,4px 4px 1px rgba(0,0,0,.55)}
</style>
<div class="wm" style="left:1452px;top:934px;font-size:46px;font-weight:900;letter-spacing:.5px;-webkit-text-stroke:1.6px #fff">头条</div>
<div class="wm" style="left:1557px;top:936px;font-size:48px;font-weight:500;letter-spacing:1.200px;-webkit-text-stroke:.7px #fff">@知识分享<span style="font-size:55px;letter-spacing:-3.200px;line-height:40px;position:relative;top:3px;left:-1px;font-weight:400;-webkit-text-stroke:0 #fff">991</span></div>
</body>
</html>
